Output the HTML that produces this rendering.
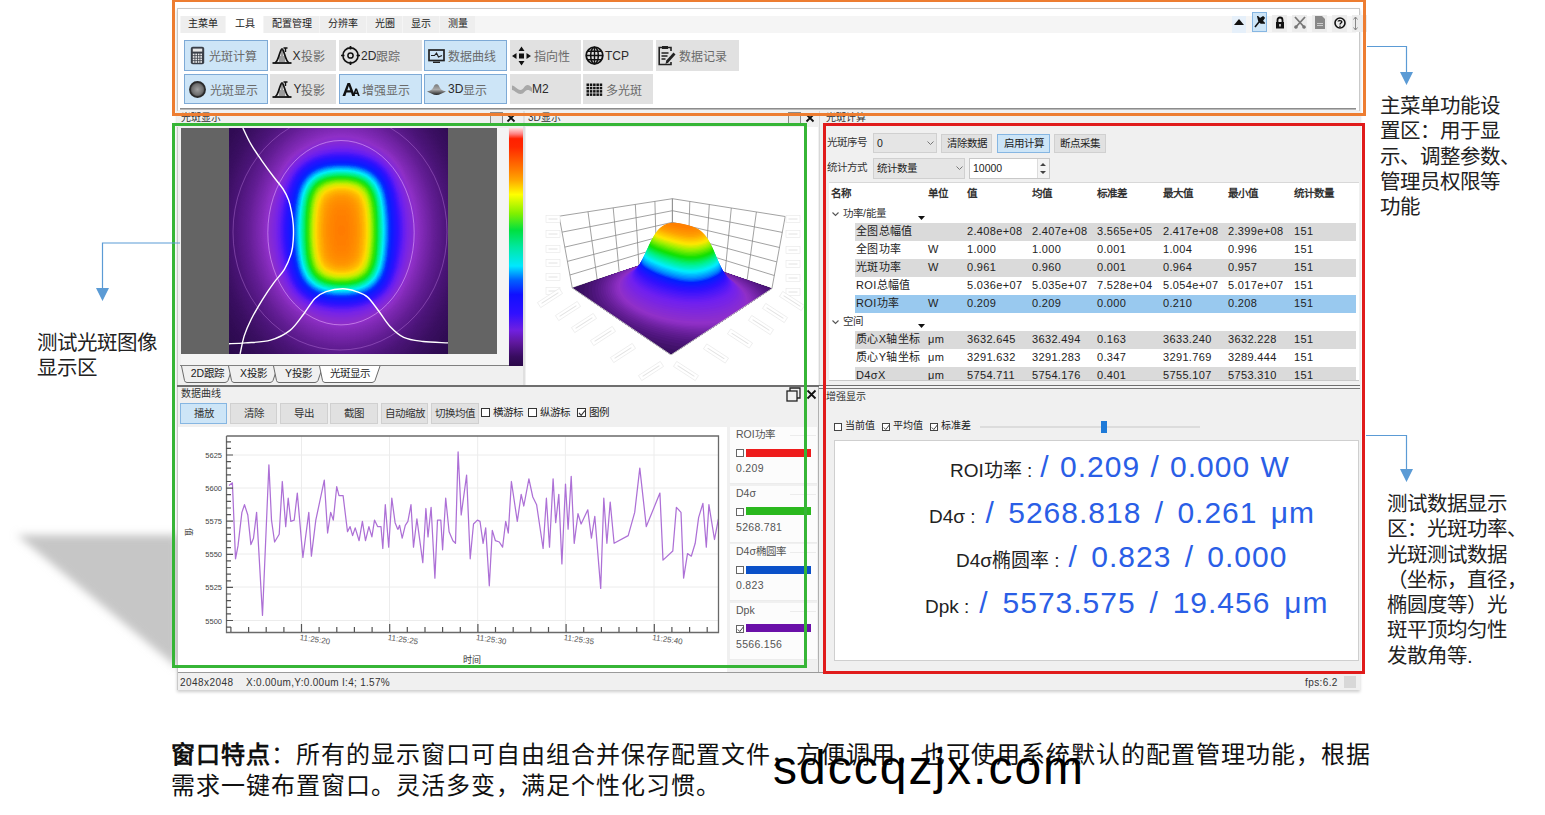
<!DOCTYPE html><html lang="zh-CN"><head><meta charset="utf-8"><style>
*{margin:0;padding:0;box-sizing:border-box}
html,body{width:1545px;height:815px;overflow:hidden;background:#fff}
body{font-family:"Liberation Sans",sans-serif;color:#222;position:relative}
.ab{position:absolute}
.t{position:absolute;white-space:nowrap;line-height:1}
svg text{font-family:"Liberation Sans",sans-serif}
</style></head><body>
<svg class="ab" style="left:0;top:500px" width="180" height="190"><defs><filter id="shb" x="-20" y="-20" width="220" height="230" filterUnits="userSpaceOnUse"><feGaussianBlur stdDeviation="4"/></filter></defs><path d="M17 35 L178 35 L178 168 Z" fill="#c6c6c6" filter="url(#shb)"/></svg>
<div class="ab" style="left:177px;top:8px;width:1183px;height:682px;background:#f0f0f0;border:1px solid #c9c9c9;box-shadow:0 2px 3px rgba(0,0,0,.2)"></div>
<div class="ab" style="left:178px;top:9px;width:1181px;height:101px;background:#fff"></div>
<div class="ab" style="left:180px;top:108px;width:1176px;height:1px;background:#8c8c8c"></div><div class="ab" style="left:180px;top:109px;width:1176px;height:1px;background:#b8b8b8"></div>
<div class="ab" style="left:180px;top:16px;width:1176px;height:17px;background:#f5f5f5"></div>
<div class="ab" style="left:181px;top:16px;width:44px;height:17px;background:#eeeeee;font-size:10px;color:#222;text-align:center;line-height:16px">主菜单</div>
<div class="ab" style="left:226px;top:16px;width:37px;height:17px;background:#ffffff;font-size:10px;color:#222;text-align:center;line-height:16px">工具</div>
<div class="ab" style="left:264px;top:16px;width:55px;height:17px;background:#eeeeee;font-size:10px;color:#222;text-align:center;line-height:16px">配置管理</div>
<div class="ab" style="left:320px;top:16px;width:46px;height:17px;background:#eeeeee;font-size:10px;color:#222;text-align:center;line-height:16px">分辨率</div>
<div class="ab" style="left:367px;top:16px;width:35px;height:17px;background:#eeeeee;font-size:10px;color:#222;text-align:center;line-height:16px">光圈</div>
<div class="ab" style="left:403px;top:16px;width:36px;height:17px;background:#eeeeee;font-size:10px;color:#222;text-align:center;line-height:16px">显示</div>
<div class="ab" style="left:440px;top:16px;width:35px;height:17px;background:#eeeeee;font-size:10px;color:#222;text-align:center;line-height:16px">测量</div>
<div class="ab" style="left:184px;top:40px;width:84px;height:31px;background:#cde5f7;border:1px solid #7eaad6;"></div>
<div class="ab" style="left:190px;top:40px;height:31px;display:flex;align-items:center"><svg width="15" height="19" viewBox="0 0 15 19"><rect x="0.8" y="0.8" width="13.4" height="17.4" rx="2" fill="#3a3f48"/><rect x="2.8" y="2.6" width="9.4" height="3" fill="#e8e8e8"/><rect x="2.8" y="7.6" width="1.7" height="1.7" fill="#e8e8e8"/><rect x="5.3" y="7.6" width="1.7" height="1.7" fill="#e8e8e8"/><rect x="7.8" y="7.6" width="1.7" height="1.7" fill="#e8e8e8"/><rect x="10.3" y="7.6" width="1.7" height="1.7" fill="#e8e8e8"/><rect x="2.8" y="10.1" width="1.7" height="1.7" fill="#e8e8e8"/><rect x="5.3" y="10.1" width="1.7" height="1.7" fill="#e8e8e8"/><rect x="7.8" y="10.1" width="1.7" height="1.7" fill="#e8e8e8"/><rect x="10.3" y="10.1" width="1.7" height="1.7" fill="#e8e8e8"/><rect x="2.8" y="12.6" width="1.7" height="1.7" fill="#e8e8e8"/><rect x="5.3" y="12.6" width="1.7" height="1.7" fill="#e8e8e8"/><rect x="7.8" y="12.6" width="1.7" height="1.7" fill="#e8e8e8"/><rect x="10.3" y="12.6" width="1.7" height="1.7" fill="#e8e8e8"/><rect x="2.8" y="15.1" width="1.7" height="1.7" fill="#e8e8e8"/><rect x="5.3" y="15.1" width="1.7" height="1.7" fill="#e8e8e8"/><rect x="7.8" y="15.1" width="1.7" height="1.7" fill="#e8e8e8"/><rect x="10.3" y="15.1" width="1.7" height="1.7" fill="#e8e8e8"/></svg></div>
<div class="ab" style="left:209px;top:40px;height:31px;display:flex;align-items:center;font-size:12px;color:#6a6a6a;white-space:nowrap">光斑计算</div>
<div class="ab" style="left:270px;top:40px;width:66px;height:31px;background:#e1e1e1;border:1px solid #e1e1e1;"></div>
<div class="ab" style="left:272px;top:40px;height:31px;display:flex;align-items:center"><svg width="20" height="17" viewBox="0 0 20 17"><path d="M0.5 16 H19.5" stroke="#111" stroke-width="1.8"/><path d="M3 16 C7 14 7.5 3 10 2 C12.5 3 13 14 17 16" fill="none" stroke="#111" stroke-width="1.7"/><path d="M10 2.5 L10 16 M8 9 L8 16 M12 9 L12 16" stroke="#333" stroke-width=".8"/><path d="M11.5 1 L15.5 1 M13.5 1 V5" stroke="#111" stroke-width="1.4"/></svg></div>
<div class="ab" style="left:292.5px;top:40px;height:31px;display:flex;align-items:center;font-size:12px;color:#6a6a6a;white-space:nowrap"><span style="color:#2a2a2a">X</span>投影</div>
<div class="ab" style="left:339px;top:40px;width:83px;height:31px;background:#e1e1e1;border:1px solid #e1e1e1;"></div>
<div class="ab" style="left:341px;top:40px;height:31px;display:flex;align-items:center"><svg width="19" height="19" viewBox="0 0 19 19"><circle cx="9.5" cy="9.5" r="7.6" fill="none" stroke="#111" stroke-width="1.6"/><circle cx="9.5" cy="9.5" r="2.6" fill="none" stroke="#111" stroke-width="1.5"/><path d="M9.5 0V3.5M9.5 15.5V19M0 9.5H3.5M15.5 9.5H19" stroke="#111" stroke-width="1.7"/></svg></div>
<div class="ab" style="left:361px;top:40px;height:31px;display:flex;align-items:center;font-size:12px;color:#6a6a6a;white-space:nowrap"><span style="color:#2a2a2a">2D</span>跟踪</div>
<div class="ab" style="left:424px;top:40px;width:83px;height:31px;background:#cde5f7;border:1px solid #7eaad6;"></div>
<div class="ab" style="left:428px;top:40px;height:31px;display:flex;align-items:center"><svg width="17" height="14" viewBox="0 0 17 14"><rect x="1" y="1" width="15" height="10.5" fill="none" stroke="#222" stroke-width="1.7"/><path d="M3 6.5 L6.5 6.5 L8.5 4 L10.5 8 L14 6.5" fill="none" stroke="#222" stroke-width="1.2"/><path d="M5 13.3H12" stroke="#222" stroke-width="1.4"/></svg></div>
<div class="ab" style="left:448px;top:40px;height:31px;display:flex;align-items:center;font-size:12px;color:#6a6a6a;white-space:nowrap">数据曲线</div>
<div class="ab" style="left:510px;top:40px;width:71px;height:31px;background:#e1e1e1;border:1px solid #e1e1e1;"></div>
<div class="ab" style="left:512px;top:40px;height:31px;display:flex;align-items:center"><svg width="19" height="20" viewBox="0 0 19 20"><rect x="7" y="7.5" width="5" height="5" fill="#111"/><path d="M9.5 0.5L12.5 5H6.5Z M9.5 19.5L12.5 15H6.5Z M0 10L4.5 7V13Z M19 10L14.5 7V13Z" fill="#111"/></svg></div>
<div class="ab" style="left:533.5px;top:40px;height:31px;display:flex;align-items:center;font-size:12px;color:#6a6a6a;white-space:nowrap">指向性</div>
<div class="ab" style="left:583px;top:40px;width:70px;height:31px;background:#e1e1e1;border:1px solid #e1e1e1;"></div>
<div class="ab" style="left:585px;top:40px;height:31px;display:flex;align-items:center"><svg width="19" height="19" viewBox="0 0 19 19"><circle cx="9.5" cy="9.5" r="8.3" fill="none" stroke="#111" stroke-width="1.8"/><ellipse cx="9.5" cy="9.5" rx="3.8" ry="8.3" fill="none" stroke="#111" stroke-width="1.5"/><path d="M9.5 1.2V17.8M1.2 9.5H17.8M2.5 5.3H16.5M2.5 13.7H16.5" stroke="#111" stroke-width="1.4"/></svg></div>
<div class="ab" style="left:605px;top:40px;height:31px;display:flex;align-items:center;font-size:12px;color:#6a6a6a;white-space:nowrap"><span style="color:#2a2a2a">TCP</span></div>
<div class="ab" style="left:656px;top:40px;width:83px;height:31px;background:#e1e1e1;border:1px solid #e1e1e1;"></div>
<div class="ab" style="left:658px;top:40px;height:31px;display:flex;align-items:center"><svg width="18" height="21" viewBox="0 0 18 21"><path d="M13 6V2.5H1.2V19.5H13V17" fill="none" stroke="#222" stroke-width="1.6"/><rect x="4" y="1" width="6" height="3" fill="#222"/><path d="M3.5 8H10.5M3.5 11H9.5M3.5 14H7.5" stroke="#222" stroke-width="1.3"/><path d="M7.5 19L8.3 15.5L15.5 7.5L17.5 9.5L10.3 17.5Z" fill="#222"/></svg></div>
<div class="ab" style="left:679px;top:40px;height:31px;display:flex;align-items:center;font-size:12px;color:#6a6a6a;white-space:nowrap">数据记录</div>
<div class="ab" style="left:184px;top:74px;width:84px;height:30px;background:#cde5f7;border:1px solid #7eaad6;"></div>
<div class="ab" style="left:188.5px;top:74px;height:30px;display:flex;align-items:center"><svg width="17" height="17" viewBox="0 0 17 17"><defs><radialGradient id="gsp"><stop offset="0" stop-color="#a0a0a0"/><stop offset=".7" stop-color="#707070"/><stop offset="1" stop-color="#3a3a3a"/></radialGradient></defs><circle cx="8.5" cy="8.5" r="7.6" fill="url(#gsp)" stroke="#2a2a2a" stroke-width="1.7"/></svg></div>
<div class="ab" style="left:210px;top:74px;height:30px;display:flex;align-items:center;font-size:12px;color:#6a6a6a;white-space:nowrap">光斑显示</div>
<div class="ab" style="left:270px;top:74px;width:66px;height:30px;background:#e1e1e1;border:1px solid #e1e1e1;"></div>
<div class="ab" style="left:272px;top:74px;height:30px;display:flex;align-items:center"><svg width="20" height="17" viewBox="0 0 20 17"><path d="M0.5 16 H19.5" stroke="#111" stroke-width="1.8"/><path d="M3 16 C7 14 7.5 3 10 2 C12.5 3 13 14 17 16" fill="none" stroke="#111" stroke-width="1.7"/><path d="M10 2.5 L10 16 M8 9 L8 16 M12 9 L12 16" stroke="#333" stroke-width=".8"/><path d="M11.5 1 L15.5 1 M13.5 1 V5" stroke="#111" stroke-width="1.4"/></svg></div>
<div class="ab" style="left:293.4px;top:74px;height:30px;display:flex;align-items:center;font-size:12px;color:#6a6a6a;white-space:nowrap"><span style="color:#2a2a2a">Y</span>投影</div>
<div class="ab" style="left:339px;top:74px;width:83px;height:30px;background:#cde5f7;border:1px solid #7eaad6;"></div>
<div class="ab" style="left:342px;top:74px;height:30px;display:flex;align-items:center"><svg width="18" height="15" viewBox="0 0 18 15"><path d="M0.5 14L5.5 1H8L13 14H10.2L9 10.5H4.5L3.3 14Z M5.3 8.3H8.2L6.75 4Z" fill="#111"/><path d="M10.5 14L13.3 6.5H15L17.8 14H16L15.3 12H13L12.3 14Z M13.5 10.5H14.8L14.15 8.5Z" fill="#111"/></svg></div>
<div class="ab" style="left:362.4px;top:74px;height:30px;display:flex;align-items:center;font-size:12px;color:#6a6a6a;white-space:nowrap">增强显示</div>
<div class="ab" style="left:424px;top:74px;width:83px;height:30px;background:#cde5f7;border:1px solid #7eaad6;"></div>
<div class="ab" style="left:427px;top:74px;height:30px;display:flex;align-items:center"><svg width="19" height="13" viewBox="0 0 19 13"><defs><linearGradient id="g3d" x1="0" y1="0" x2="0" y2="1"><stop offset="0" stop-color="#777"/><stop offset=".5" stop-color="#aaa"/><stop offset="1" stop-color="#222"/></linearGradient></defs><path d="M0 8.5 C4 7.5 5.5 6.5 7 3 C8 0.5 11 0.5 12 3 C13.5 6.5 15 7.5 19 8.5 C15 10 13 12 9.5 12 C6 12 4 10 0 8.5Z" fill="url(#g3d)"/></svg></div>
<div class="ab" style="left:448px;top:74px;height:30px;display:flex;align-items:center;font-size:12px;color:#6a6a6a;white-space:nowrap"><span style="color:#2a2a2a">3D</span>显示</div>
<div class="ab" style="left:510px;top:74px;width:71px;height:30px;background:#e1e1e1;border:1px solid #e1e1e1;"></div>
<div class="ab" style="left:511.5px;top:74px;height:30px;display:flex;align-items:center"><svg width="20" height="11" viewBox="0 0 20 11"><path d="M0 1.5 C3 1.5 5 6 8.5 6 C11.5 6 12.5 1 15.5 1 C17.5 1 19 2.5 20 4 L20 8 C18 6.5 17 6 15.5 6 C13 6 12 10 8.5 10 C5 10 3 6.5 0 6Z" fill="#a8a8a8"/></svg></div>
<div class="ab" style="left:532px;top:74px;height:30px;display:flex;align-items:center;font-size:12px;color:#6a6a6a;white-space:nowrap"><span style="color:#2a2a2a">M2</span></div>
<div class="ab" style="left:583px;top:74px;width:70px;height:30px;background:#e1e1e1;border:1px solid #e1e1e1;"></div>
<div class="ab" style="left:586px;top:74px;height:30px;display:flex;align-items:center"><svg width="17" height="13" viewBox="0 0 17 13"><rect x="0.5" y="0.5" width="2.5" height="2.5" fill="#111"/><rect x="3.8" y="0.5" width="2.5" height="2.5" fill="#111"/><rect x="7.1" y="0.5" width="2.5" height="2.5" fill="#111"/><rect x="10.4" y="0.5" width="2.5" height="2.5" fill="#111"/><rect x="13.7" y="0.5" width="2.5" height="2.5" fill="#111"/><rect x="0.5" y="3.8" width="2.5" height="2.5" fill="#111"/><rect x="3.8" y="3.8" width="2.5" height="2.5" fill="#111"/><rect x="7.1" y="3.8" width="2.5" height="2.5" fill="#111"/><rect x="10.4" y="3.8" width="2.5" height="2.5" fill="#111"/><rect x="13.7" y="3.8" width="2.5" height="2.5" fill="#111"/><rect x="0.5" y="7.1" width="2.5" height="2.5" fill="#111"/><rect x="3.8" y="7.1" width="2.5" height="2.5" fill="#111"/><rect x="7.1" y="7.1" width="2.5" height="2.5" fill="#111"/><rect x="10.4" y="7.1" width="2.5" height="2.5" fill="#111"/><rect x="13.7" y="7.1" width="2.5" height="2.5" fill="#111"/><rect x="0.5" y="10.4" width="2.5" height="2.5" fill="#111"/><rect x="3.8" y="10.4" width="2.5" height="2.5" fill="#111"/><rect x="7.1" y="10.4" width="2.5" height="2.5" fill="#111"/><rect x="10.4" y="10.4" width="2.5" height="2.5" fill="#111"/><rect x="13.7" y="10.4" width="2.5" height="2.5" fill="#111"/></svg></div>
<div class="ab" style="left:606px;top:74px;height:30px;display:flex;align-items:center;font-size:12px;color:#6a6a6a;white-space:nowrap">多光斑</div>
<div class="ab" style="left:1232px;top:16px;width:14px;height:17px;background:#e6f0fa"></div>
<svg class="ab" style="left:1234px;top:19px" width="10" height="6"><path d="M0 6L5 0L10 6Z" fill="#111"/></svg>
<div class="ab" style="left:1252px;top:12px;width:15px;height:20px;background:#cde5f7;border:1px solid #86b6e2"></div>
<svg class="ab" style="left:1254px;top:16px" width="11" height="12" viewBox="0 0 11 12"><path d="M4 1L10 7L7 7L5 5Z M6 3L9 1L10 2L8 5Z M5 6L1 11" stroke="#111" stroke-width="1.6" fill="#111"/></svg>
<div class="ab" style="left:1272px;top:15px;width:15px;height:17px;background:#ececec"></div>
<div class="ab" style="left:1292px;top:15px;width:15px;height:17px;background:#ececec"></div>
<div class="ab" style="left:1312px;top:15px;width:15px;height:17px;background:#ececec"></div>
<div class="ab" style="left:1332px;top:15px;width:15px;height:17px;background:#ececec"></div>
<div class="ab" style="left:1352px;top:15px;width:15px;height:17px;background:#ececec"></div>
<svg class="ab" style="left:1275px;top:16px" width="10" height="13" viewBox="0 0 10 13"><path d="M2.5 6V4A2.5 2.5 0 0 1 7.5 4V6" fill="none" stroke="#111" stroke-width="1.8"/><rect x="1" y="6" width="8" height="6.5" fill="#111"/><rect x="4.3" y="8" width="1.4" height="2.5" fill="#fff"/></svg>
<svg class="ab" style="left:1294px;top:16px" width="12" height="13" viewBox="0 0 12 13"><path d="M1 1L11 12M11 1L1 12" stroke="#777" stroke-width="1.8"/><circle cx="2" cy="11" r="1.8" fill="#777"/><circle cx="10" cy="11" r="1.8" fill="#777"/></svg>
<svg class="ab" style="left:1315px;top:16px" width="10" height="13" viewBox="0 0 10 13"><path d="M0 0H7L10 3V13H0Z" fill="#888"/><rect x="2" y="7" width="6" height="1" fill="#ccc"/><rect x="2" y="9" width="6" height="1" fill="#ccc"/></svg>
<svg class="ab" style="left:1334px;top:17px" width="12" height="12" viewBox="0 0 12 12"><circle cx="6" cy="6" r="5" fill="none" stroke="#111" stroke-width="1.6"/><path d="M4.2 4.6C4.2 3.2 7.8 3.2 7.8 4.8C7.8 6 6 6 6 7.5" fill="none" stroke="#111" stroke-width="1.4"/><circle cx="6" cy="9.2" r=".8" fill="#111"/></svg>
<svg class="ab" style="left:1353px;top:17px" width="5" height="13"><path d="M2.5 0V13M0.5 2.5L2.5 0L4.5 2.5M0.5 10.5L2.5 13L4.5 10.5" fill="none" stroke="#888" stroke-width="1"/></svg>
<div class="ab" style="left:177px;top:111px;width:346px;height:16px;background:#f0f0f0"></div>
<div class="t" style="left:181px;top:113px;font-size:10px;color:#333">光斑显示</div>
<div class="ab" style="left:490px;top:112px;width:13px;height:12px;border:1px solid #8a8a8a;background:#e8e8e8"></div>
<svg class="ab" style="left:506px;top:113px" width="10" height="10"><path d="M1.5 1.5L8.5 8.5M8.5 1.5L1.5 8.5" stroke="#111" stroke-width="1.8"/></svg>
<div class="ab" style="left:523px;top:111px;width:2px;height:274px;background:#e0e0e0"></div>
<div class="ab" style="left:181px;top:128px;width:316px;height:226px;background:#646464"></div>
<div class="ab" style="left:497px;top:128px;width:11px;height:227px;background:#f4f4f4"></div>
<div class="ab" style="left:181px;top:354px;width:327px;height:11px;background:#f4f4f4"></div>
<div class="ab" style="left:180px;top:365px;width:330px;height:1px;background:#808080"></div>
<svg class="ab" style="left:181px;top:366px" width="53" height="17"><path d="M0.5 0 L3.5 14.5 Q4 16.5 6 16.5 L44 16.5 Q46 16.5 47 14.5 L52 0" fill="#f0f0f0" stroke="#6a6a6a" stroke-width="1"/></svg>
<div class="t" style="left:181px;top:368px;width:53px;text-align:center;font-size:10.5px;color:#222">2D跟踪</div>
<svg class="ab" style="left:228px;top:366px" width="51" height="17"><path d="M0.5 0 L3.5 14.5 Q4 16.5 6 16.5 L42 16.5 Q44 16.5 45 14.5 L50 0" fill="#f0f0f0" stroke="#6a6a6a" stroke-width="1"/></svg>
<div class="t" style="left:228px;top:368px;width:51px;text-align:center;font-size:10.5px;color:#222">X投影</div>
<svg class="ab" style="left:273px;top:366px" width="51" height="17"><path d="M0.5 0 L3.5 14.5 Q4 16.5 6 16.5 L42 16.5 Q44 16.5 45 14.5 L50 0" fill="#f0f0f0" stroke="#6a6a6a" stroke-width="1"/></svg>
<div class="t" style="left:273px;top:368px;width:51px;text-align:center;font-size:10.5px;color:#222">Y投影</div>
<svg class="ab" style="left:319px;top:366px" width="62" height="17"><path d="M0.5 0 L3.5 14.5 Q4 16.5 6 16.5 L53 16.5 Q55 16.5 56 14.5 L61 0" fill="#ffffff" stroke="#6a6a6a" stroke-width="1"/></svg>
<div class="t" style="left:319px;top:368px;width:62px;text-align:center;font-size:10.5px;color:#222">光斑显示</div>
<svg class="ab" style="left:229px;top:128px" width="219" height="226" viewBox="0 0 219 226">
<defs>
<filter id="cm" x="0" y="0" width="219" height="226" filterUnits="userSpaceOnUse" color-interpolation-filters="sRGB"><feComponentTransfer><feFuncR type="table" tableValues="0.145 0.204 0.263 0.322 0.382 0.442 0.502 0.562 0.518 0.469 0.387 0.256 0.160 0.101 0.042 0.000 0.000 0.000 0.000 0.000 0.006 0.045 0.227 0.522 0.814 1.000 1.000 1.000 1.000 1.000 1.000 1.000 1.000"/><feFuncG type="table" tableValues="0.031 0.051 0.071 0.090 0.114 0.138 0.163 0.187 0.165 0.140 0.112 0.080 0.072 0.092 0.111 0.199 0.460 0.716 0.941 0.941 0.935 0.896 0.897 0.929 0.925 0.857 0.710 0.590 0.506 0.416 0.298 0.180 0.063"/><feFuncB type="table" tableValues="0.271 0.349 0.427 0.506 0.576 0.645 0.713 0.782 0.843 0.904 0.953 0.984 1.000 1.000 1.000 1.000 1.000 1.000 0.979 0.720 0.452 0.138 0.000 0.000 0.000 0.000 0.000 0.000 0.000 0.000 0.000 0.000 0.000"/></feComponentTransfer></filter>
<filter id="bl" x="-100" y="-100" width="419" height="426" filterUnits="userSpaceOnUse" color-interpolation-filters="sRGB"><feGaussianBlur stdDeviation="14.2"/></filter>
<radialGradient id="halo" cx="112.5" cy="102.5" r="159.0" gradientUnits="userSpaceOnUse" gradientTransform="translate(112.5 102.5) scale(1 1.25) translate(-112.5 -102.5)"><stop offset="0.000" stop-color="#fff" stop-opacity="0.6000"/><stop offset="0.083" stop-color="#fff" stop-opacity="0.5815"/><stop offset="0.167" stop-color="#fff" stop-opacity="0.5295"/><stop offset="0.250" stop-color="#fff" stop-opacity="0.4529"/><stop offset="0.333" stop-color="#fff" stop-opacity="0.3639"/><stop offset="0.417" stop-color="#fff" stop-opacity="0.2747"/><stop offset="0.500" stop-color="#fff" stop-opacity="0.1948"/><stop offset="0.583" stop-color="#fff" stop-opacity="0.1298"/><stop offset="0.667" stop-color="#fff" stop-opacity="0.0812"/><stop offset="0.750" stop-color="#fff" stop-opacity="0.0477"/><stop offset="0.833" stop-color="#fff" stop-opacity="0.0264"/><stop offset="0.917" stop-color="#fff" stop-opacity="0.0137"/><stop offset="1.000" stop-color="#fff" stop-opacity="0.0067"/></radialGradient>
</defs>
<g filter="url(#cm)">
<rect width="219" height="226" fill="#000"/>
<rect width="219" height="226" fill="url(#halo)"/>
<rect x="77.5" y="46.5" width="70.0" height="112.0" fill="#fff" fill-opacity="0.71" filter="url(#bl)"/>
</g>
<ellipse cx="112" cy="104.7" rx="73.2" ry="92.2" fill="none" stroke="#e8b0ff" stroke-opacity=".55" stroke-width="1"/>
<ellipse cx="111" cy="104" rx="107" ry="118" fill="none" stroke="#d090f0" stroke-opacity=".35" stroke-width="1"/>
<path d="M13.9 0.0 C15.2 2.8 18.9 11.1 22.2 16.6 C25.4 22.2 29.6 28.0 33.3 33.3 C37.0 38.6 40.9 43.9 44.4 48.5 C47.8 53.1 51.5 57.1 54.1 61.0 C56.6 64.9 58.2 68.4 59.6 72.1 C61.0 75.8 61.6 79.0 62.4 83.2 C63.2 87.3 64.0 92.4 64.3 97.0 C64.6 101.7 64.6 106.3 64.3 110.9 C64.0 115.5 63.9 119.7 62.4 124.8 C60.9 129.8 58.5 136.3 55.4 141.4 C52.4 146.5 48.1 150.2 44.4 155.3 C40.7 160.3 37.0 165.9 33.3 171.9 C29.6 177.9 25.2 185.3 22.2 191.3 C19.2 197.3 17.1 202.2 15.2 207.9 C13.4 213.7 11.8 222.9 11.1 225.9" fill="none" stroke="#fff" stroke-width="1.4" stroke-linejoin="round"/>
<path d="M0.0 215.7 C2.8 215.6 9.7 215.5 16.6 214.9 C23.6 214.3 34.2 214.2 41.6 212.1 C49.0 210.0 55.4 206.8 61.0 202.4 C66.5 198.0 70.7 191.1 74.9 185.7 C79.0 180.4 82.2 174.2 85.9 170.5 C89.6 166.8 92.4 165.2 97.0 163.6 C101.7 162.0 108.6 160.8 113.7 160.8 C118.8 160.8 123.4 162.2 127.5 163.6 C131.7 165.0 134.9 165.9 138.6 169.1 C142.3 172.4 146.0 178.1 149.7 183.0 C153.4 187.8 156.6 193.8 160.8 198.2 C165.0 202.6 169.1 206.8 174.7 209.3 C180.2 211.9 186.7 212.5 194.1 213.5 C201.5 214.4 214.9 214.6 219.0 214.9" fill="none" stroke="#fff" stroke-width="1.4" stroke-linejoin="round"/>
</svg>
<svg class="ab" style="left:509px;top:128px" width="14" height="238"><defs><linearGradient id="cb" x1="0" y1="0" x2="0" y2="1"><stop offset="0" stop-color="#ffe0e0"/><stop offset="0.025" stop-color="#ff8080"/><stop offset="0.045" stop-color="#ff2000"/><stop offset="0.08" stop-color="#ff2800"/><stop offset="0.18" stop-color="#ff8000"/><stop offset="0.22" stop-color="#ffa800"/><stop offset="0.28" stop-color="#ffff00"/><stop offset="0.36" stop-color="#80f000"/><stop offset="0.43" stop-color="#00e040"/><stop offset="0.5" stop-color="#00e8a0"/><stop offset="0.58" stop-color="#00e8ff"/><stop offset="0.64" stop-color="#0060ff"/><stop offset="0.7" stop-color="#1010ff"/><stop offset="0.78" stop-color="#3010ff"/><stop offset="0.85" stop-color="#7020e0"/><stop offset="0.9" stop-color="#6018a0"/><stop offset="0.96" stop-color="#380c60"/><stop offset="1" stop-color="#2a0848"/></linearGradient></defs><rect width="14" height="238" fill="url(#cb)"/></svg>
<div class="ab" style="left:525px;top:111px;width:294px;height:16px;background:#f0f0f0"></div>
<div class="t" style="left:528px;top:113px;font-size:10px;color:#333">3D显示</div>
<div class="ab" style="left:788px;top:112px;width:13px;height:12px;border:1px solid #8a8a8a;background:#e8e8e8"></div>
<svg class="ab" style="left:805px;top:113px" width="10" height="10"><path d="M1.5 1.5L8.5 8.5M8.5 1.5L1.5 8.5" stroke="#111" stroke-width="1.8"/></svg>
<div class="ab" style="left:526px;top:127px;width:292px;height:258px;background:#fff"></div>
<svg class="ab" style="left:526px;top:127px" width="292" height="258" viewBox="526 127 292 258">
<path d="M572.3 288.0L672.4 254.5L771.9 288.6M569.9 275.0L672.4 244.1L774.3 275.5M567.4 261.4L672.4 233.4L776.8 261.9M564.8 247.1L672.4 222.3L779.5 247.5M562.1 232.1L672.4 210.7L782.3 232.4M559.1 216.2L672.4 198.7L785.2 216.5M572.3 288.0L559.1 216.2M771.9 288.6L785.2 216.5M597.2 279.7L588.0 211.8M747.1 280.1L756.4 212.0M619.2 272.3L613.2 207.9M725.1 272.5L731.3 208.0M638.9 265.7L635.3 204.5M705.6 265.9L709.3 204.5M656.5 259.8L654.9 201.4M688.1 259.9L689.8 201.5M672.4 254.5L672.4 198.7M672.4 254.5L672.4 198.7" fill="none" stroke="#8a8a8a" stroke-width="0.8"/>
<path d="M671.0 354.9L572.3 288.0L672.4 254.5L771.9 288.6Z" fill="#320c57"/>
<path d="M672.4 254.5L669.2 255.5L666.0 256.6L662.6 257.7L659.3 258.9L655.8 260.0L652.3 261.2L648.7 262.4L645.0 263.7L641.2 264.9L637.3 266.2L633.4 267.5L629.3 268.9L625.2 270.3L621.0 271.7L616.6 273.2L612.2 274.6L607.6 276.2L603.0 277.7L598.2 279.3L593.3 281.0L588.3 282.7L583.1 284.4L577.8 286.2L573.5 287.9L574.9 289.7L577.7 291.7L580.7 293.7L583.7 295.7L586.8 297.8L590.1 300.0L593.4 302.3L596.8 304.6L600.3 307.0L604.0 309.5L607.7 312.0L611.6 314.6L615.6 317.3L619.7 320.2L624.0 323.1L628.4 326.1L633.0 329.2L637.8 332.4L642.7 335.8L647.8 339.2L653.2 342.8L658.7 346.6L664.4 350.5L670.4 354.5L676.5 351.3L682.4 347.4L688.1 343.7L693.5 340.1L698.8 336.6L703.9 333.3L708.8 330.1L713.5 327.0L718.1 324.0L722.5 321.1L726.7 318.3L730.9 315.6L734.8 312.9L738.7 310.4L742.5 307.9L746.1 305.5L749.6 303.2L753.0 301.0L756.4 298.8L759.6 296.7L762.7 294.6L765.8 292.6L768.7 290.6L771.6 288.7L767.0 286.9L761.7 285.1L756.5 283.3L751.5 281.6L746.6 279.9L741.8 278.3L737.1 276.7L732.6 275.1L728.2 273.6L723.8 272.1L719.6 270.7L715.5 269.2L711.5 267.9L707.5 266.5L703.7 265.2L699.9 263.9L696.3 262.7L692.7 261.4L689.2 260.2L685.7 259.0L682.4 257.9L679.1 256.8L675.8 255.7L672.7 254.6Z" fill="#360e5c"/>
<path d="M672.4 254.5L669.2 255.5L666.0 256.6L662.6 257.7L659.3 258.9L655.8 260.0L652.3 261.2L648.7 262.4L645.0 263.7L641.2 264.9L637.3 266.2L633.4 267.5L629.3 268.9L625.2 270.3L621.0 271.7L616.6 273.2L612.2 274.6L607.6 276.2L603.0 277.7L598.2 279.3L593.3 281.0L588.3 282.7L583.1 284.4L580.1 286.1L579.6 287.9L579.3 289.9L579.2 291.7L580.7 293.7L583.7 295.7L586.8 297.8L590.1 300.0L593.4 302.3L596.8 304.6L600.3 307.0L604.0 309.5L607.7 312.0L611.6 314.6L615.6 317.3L619.7 320.2L624.0 323.1L628.4 326.1L633.0 329.2L637.8 332.4L642.7 335.8L647.8 339.2L653.2 342.8L658.7 346.6L664.4 350.5L669.8 353.3L675.9 351.7L681.8 347.8L687.5 344.1L693.0 340.5L698.3 337.0L703.4 333.6L708.3 330.4L713.0 327.3L717.6 324.3L722.0 321.4L726.3 318.6L730.4 315.8L734.5 313.2L738.3 310.6L742.1 308.2L745.7 305.8L749.3 303.4L752.7 301.2L756.0 299.0L759.3 296.9L762.4 294.8L765.5 292.8L768.4 290.8L771.3 288.9L767.5 287.1L762.2 285.2L757.0 283.5L752.0 281.7L747.1 280.1L742.3 278.4L737.6 276.8L733.1 275.3L728.6 273.7L724.3 272.3L720.0 270.8L715.9 269.4L711.9 268.0L707.9 266.7L704.1 265.3L700.3 264.0L696.6 262.8L693.0 261.6L689.5 260.3L686.1 259.2L682.7 258.0L679.4 256.9L676.2 255.8L673.0 254.7Z" fill="#3c1064"/>
<path d="M670.5 255.1L667.6 256.1L664.3 257.2L661.0 258.3L657.5 259.5L654.0 260.6L650.5 261.8L646.8 263.0L643.1 264.3L639.3 265.6L635.4 266.9L631.4 268.2L627.3 269.6L623.1 271.0L618.8 272.4L614.4 273.9L609.9 275.4L605.3 277.0L600.6 278.5L595.8 280.2L590.8 281.8L585.7 283.5L585.1 285.2L584.7 286.9L584.4 288.8L584.2 290.9L584.2 292.7L584.4 294.8L585.3 296.8L588.4 298.9L591.7 301.1L595.1 303.4L598.5 305.8L602.1 308.2L605.8 310.7L609.6 313.3L613.6 316.0L617.6 318.7L621.9 321.6L626.2 324.6L630.7 327.6L635.4 330.8L640.2 334.1L645.3 337.5L650.5 341.0L655.9 344.7L661.2 346.7L667.0 348.1L673.4 349.4L678.9 349.7L684.7 345.9L690.3 342.2L695.7 338.7L700.9 335.3L705.9 332.0L710.7 328.8L715.3 325.8L719.8 322.8L724.2 319.9L728.4 317.2L732.5 314.5L736.4 311.9L740.2 309.4L743.9 307.0L747.5 304.6L751.0 302.3L754.4 300.1L757.7 297.9L760.9 295.8L764.0 293.8L767.0 291.8L769.9 289.9L770.3 288.0L764.9 286.1L759.6 284.4L754.5 282.6L749.5 280.9L744.7 279.2L739.9 277.6L735.3 276.0L730.8 274.5L726.4 273.0L722.1 271.5L718.0 270.1L713.9 268.7L709.9 267.3L706.0 266.0L702.2 264.7L698.5 263.4L694.8 262.2L691.3 260.9L687.8 259.8L684.4 258.6L681.0 257.4L677.8 256.3L674.9 255.3L671.6 255.2Z" fill="#42126b"/>
<path d="M667.6 256.1L664.6 257.1L661.3 258.2L657.9 259.3L654.4 260.5L650.8 261.7L647.2 262.9L643.5 264.2L639.7 265.4L635.8 266.7L631.8 268.1L627.7 269.5L623.5 270.9L619.2 272.3L614.9 273.8L610.4 275.3L605.8 276.8L601.1 278.4L596.2 280.0L591.3 281.7L589.8 283.2L589.2 285.1L588.7 286.9L588.4 288.8L588.3 290.6L588.4 292.6L588.7 294.5L589.2 296.6L589.9 298.7L591.4 300.9L594.7 303.2L598.2 305.5L601.8 308.0L605.4 310.5L609.2 313.0L613.2 315.7L617.2 318.5L621.4 321.3L625.8 324.3L630.3 327.3L634.9 330.5L639.7 333.7L644.7 337.1L649.9 339.8L655.5 341.5L661.1 342.9L666.9 344.3L672.4 345.4L678.5 346.5L684.1 346.3L689.7 342.6L695.1 339.1L700.3 335.6L705.4 332.3L710.2 329.1L714.9 326.1L719.4 323.1L723.8 320.2L728.0 317.5L732.1 314.8L736.0 312.2L739.9 309.6L743.6 307.2L747.2 304.8L750.7 302.5L754.0 300.3L757.3 298.1L760.5 296.0L763.6 294.0L766.7 292.0L769.6 290.1L771.3 288.4L765.9 286.5L760.6 284.7L755.5 282.9L750.5 281.2L745.6 279.6L740.9 277.9L736.2 276.3L731.7 274.8L727.3 273.3L723.0 271.8L718.8 270.4L714.7 269.0L710.7 267.6L706.8 266.3L702.9 264.9L699.2 263.7L695.5 262.4L692.0 261.2L688.5 260.0L685.1 258.8L681.7 257.7L678.7 256.7L675.5 256.4L672.2 256.2L668.9 256.1Z" fill="#481473"/>
<path d="M665.5 257.0L662.3 257.9L658.9 259.0L655.4 260.2L651.9 261.3L648.3 262.6L644.6 263.8L640.8 265.1L636.9 266.4L633.0 267.7L628.9 269.0L624.8 270.4L620.5 271.9L616.2 273.3L611.7 274.8L607.2 276.3L602.5 277.9L597.7 279.5L594.2 281.1L593.4 282.8L592.8 284.4L592.3 286.3L592.0 288.1L591.9 290.0L592.0 292.1L592.3 294.0L592.8 296.0L593.5 298.2L594.5 300.4L595.8 302.7L597.2 304.9L600.7 307.2L604.3 309.7L608.1 312.3L612.0 314.9L616.0 317.6L620.1 320.4L624.4 323.4L628.9 326.4L633.5 329.5L637.8 332.4L643.0 334.4L648.6 336.2L653.7 337.8L659.3 339.3L664.9 340.7L670.9 342.0L676.5 343.0L682.7 343.9L688.1 343.7L693.5 340.1L698.8 336.6L703.9 333.3L708.8 330.1L713.5 327.0L718.1 324.0L722.5 321.1L726.7 318.3L730.9 315.6L734.8 312.9L738.7 310.4L742.5 307.9L746.1 305.5L749.6 303.2L753.0 301.0L756.4 298.8L759.6 296.7L762.7 294.6L765.8 292.6L768.7 290.6L768.3 288.7L766.1 286.9L762.2 285.2L757.0 283.5L752.0 281.7L747.1 280.1L742.3 278.4L737.6 276.8L733.1 275.3L728.6 273.7L724.3 272.3L720.0 270.8L715.9 269.4L711.9 268.0L707.9 266.7L704.1 265.3L700.3 264.0L696.6 262.8L693.0 261.6L689.5 260.3L686.1 259.2L682.7 258.0L679.7 257.7L676.5 257.4L673.2 257.2L669.8 257.1L666.8 257.0Z" fill="#4d157b"/>
<path d="M663.0 257.8L659.9 258.6L656.5 259.8L653.0 261.0L649.4 262.2L645.7 263.4L641.9 264.7L638.1 266.0L634.2 267.3L630.2 268.6L626.0 270.0L621.8 271.4L617.5 272.9L613.1 274.3L608.6 275.9L603.9 277.4L599.2 279.0L597.4 280.6L596.7 282.3L596.0 284.0L595.5 285.7L595.2 287.6L595.1 289.4L595.2 291.5L595.5 293.3L596.0 295.4L596.7 297.5L597.7 299.8L598.9 301.9L600.5 304.2L602.3 306.6L604.7 309.1L607.4 311.7L610.8 314.1L614.8 316.8L618.9 319.6L623.1 322.5L627.5 325.0L632.3 327.2L637.1 329.3L642.2 331.3L647.5 333.1L652.5 334.7L658.0 336.3L663.5 337.6L669.1 338.9L675.2 340.0L680.7 340.9L686.5 341.7L691.9 341.2L697.2 337.7L702.4 334.3L707.3 331.0L712.1 327.9L716.7 324.9L721.2 321.9L725.5 319.1L729.6 316.4L733.7 313.7L737.6 311.1L741.3 308.7L745.0 306.2L748.6 303.9L752.0 301.6L755.4 299.4L758.6 297.3L761.8 295.2L764.9 293.2L767.8 291.2L765.8 289.3L763.6 287.4L761.4 285.7L758.6 284.0L753.5 282.3L748.5 280.6L743.7 278.9L739.0 277.3L734.4 275.7L729.9 274.2L725.6 272.7L721.3 271.2L717.1 269.8L713.1 268.4L709.1 267.1L705.2 265.7L701.4 264.4L697.7 263.2L694.1 261.9L690.6 260.7L687.1 259.5L684.0 259.0L680.6 258.6L677.2 258.3L674.1 258.1L671.0 258.0L667.5 257.9L664.3 257.8Z" fill="#531782"/>
<path d="M660.5 258.7L657.2 259.6L653.7 260.7L650.1 261.9L646.4 263.2L642.7 264.4L638.9 265.7L635.0 267.0L631.0 268.4L626.9 269.7L622.7 271.1L618.4 272.6L614.0 274.0L609.5 275.6L604.9 277.1L601.5 278.6L600.5 280.2L599.6 281.9L598.9 283.7L598.4 285.4L598.1 287.2L598.0 289.1L598.1 291.1L598.4 292.9L598.9 295.0L599.6 297.1L600.7 299.4L601.9 301.4L603.6 303.8L605.4 306.1L607.9 308.6L610.6 311.2L613.7 313.7L617.6 316.4L621.9 319.2L626.1 321.6L630.7 323.9L635.7 326.2L640.5 328.1L645.6 330.0L651.0 331.8L656.1 333.3L661.4 334.7L667.0 336.0L672.9 337.2L678.3 338.2L683.8 339.0L689.7 339.6L695.1 339.1L700.3 335.6L705.4 332.3L710.2 329.1L714.9 326.1L719.4 323.1L723.8 320.2L728.0 317.5L732.1 314.8L736.0 312.2L739.9 309.6L743.6 307.2L747.2 304.8L750.7 302.5L754.0 300.3L757.3 298.1L760.5 296.0L763.6 294.0L765.7 292.1L763.7 290.1L761.6 288.2L759.5 286.4L757.2 284.6L754.8 282.9L750.5 281.2L745.6 279.6L740.9 277.9L736.2 276.3L731.7 274.8L727.3 273.3L723.0 271.8L718.8 270.4L714.7 269.0L710.7 267.6L706.8 266.3L702.9 264.9L699.2 263.7L695.5 262.4L692.0 261.2L688.8 260.3L685.4 259.9L681.9 259.5L678.6 259.2L675.3 259.0L672.1 258.8L668.9 258.7L665.8 258.7L662.5 258.6Z" fill="#591a89"/>
<path d="M658.1 259.5L654.7 260.4L651.2 261.6L647.6 262.8L643.8 264.0L640.0 265.3L636.2 266.6L632.2 268.0L628.1 269.3L623.9 270.7L619.7 272.1L615.3 273.6L610.8 275.1L606.3 276.6L604.4 278.1L603.2 279.8L602.3 281.4L601.6 283.1L601.1 284.9L600.7 286.8L600.6 288.6L600.7 290.5L601.0 292.4L601.5 294.4L602.2 296.4L603.3 298.7L604.5 300.8L606.2 303.1L608.1 305.4L610.5 307.9L613.3 310.4L616.4 312.9L620.3 315.6L624.7 318.3L629.0 320.7L633.7 323.0L638.5 325.1L643.6 327.1L648.6 328.9L653.6 330.4L658.9 331.9L664.3 333.3L669.7 334.5L675.7 335.6L681.1 336.4L686.7 337.1L692.6 337.7L697.8 337.3L702.9 334.0L707.8 330.7L712.6 327.6L717.2 324.6L721.6 321.7L725.9 318.8L730.0 316.1L734.1 313.5L738.0 310.9L741.7 308.4L745.4 306.0L748.9 303.7L752.4 301.4L755.7 299.2L759.0 297.1L762.1 295.0L764.0 293.2L762.1 291.1L760.1 289.1L758.0 287.3L755.9 285.6L753.4 283.7L750.8 282.0L748.0 280.4L743.2 278.7L738.5 277.1L734.0 275.6L729.5 274.0L725.1 272.5L720.9 271.1L716.7 269.7L712.7 268.3L708.7 266.9L704.8 265.6L701.1 264.3L697.4 263.0L693.8 261.8L690.4 261.3L687.0 260.8L683.9 260.5L680.3 260.1L676.9 259.8L673.7 259.6L670.6 259.5L667.2 259.4L663.9 259.4L660.7 259.4Z" fill="#5f1c90"/>
<path d="M655.6 260.3L652.3 261.2L648.7 262.4L645.0 263.7L641.2 264.9L637.3 266.2L633.4 267.5L629.3 268.9L625.2 270.3L621.0 271.7L616.6 273.2L612.2 274.6L608.3 276.2L607.0 277.7L605.9 279.3L604.9 280.9L604.1 282.7L603.6 284.3L603.2 286.2L603.0 288.1L603.1 289.9L603.4 291.8L603.8 293.8L604.6 295.8L605.6 298.0L606.9 300.2L608.6 302.5L610.5 304.7L613.0 307.3L615.6 309.6L619.0 312.2L622.9 314.9L627.3 317.5L631.7 319.9L636.4 322.1L641.2 324.1L646.4 326.1L651.1 327.7L656.6 329.3L661.8 330.7L667.2 332.0L672.8 333.1L678.2 334.0L683.7 334.8L689.4 335.4L695.2 335.9L700.3 335.6L705.4 332.3L710.2 329.1L714.9 326.1L719.4 323.1L723.8 320.2L728.0 317.5L732.1 314.8L736.0 312.2L739.9 309.6L743.6 307.2L747.2 304.8L750.7 302.5L754.0 300.3L757.3 298.1L760.5 296.0L762.2 294.1L760.5 292.1L758.6 290.1L756.6 288.2L754.5 286.4L752.2 284.6L749.9 282.9L747.3 281.2L744.3 279.4L740.9 277.9L736.2 276.3L731.7 274.8L727.3 273.3L723.0 271.8L718.8 270.4L714.7 269.0L710.7 267.6L706.8 266.3L702.9 264.9L699.2 263.7L695.8 262.9L692.4 262.3L689.0 261.8L685.5 261.3L682.1 261.0L678.6 260.7L675.3 260.4L672.2 260.3L668.8 260.1L665.6 260.1L662.2 260.1L658.8 260.2L655.6 260.3Z" fill="#651e97"/>
<path d="M652.9 261.2L649.4 262.2L645.7 263.4L641.9 264.7L638.1 266.0L634.2 267.3L630.2 268.6L626.0 270.0L621.8 271.4L617.5 272.9L613.1 274.3L610.9 275.9L609.5 277.3L608.3 279.0L607.3 280.5L606.5 282.3L605.9 284.1L605.5 285.8L605.3 287.5L605.4 289.5L605.6 291.5L606.1 293.5L606.9 295.5L607.9 297.6L609.2 299.7L610.8 301.9L612.8 304.2L615.3 306.7L618.1 309.2L621.4 311.6L625.4 314.2L629.7 316.7L634.3 319.1L638.5 321.1L643.7 323.2L648.6 325.0L653.6 326.6L658.8 328.1L664.0 329.5L669.5 330.7L674.8 331.7L680.6 332.6L686.1 333.3L691.6 333.8L697.0 334.1L702.4 334.3L707.3 331.0L712.1 327.9L716.7 324.9L721.2 321.9L725.5 319.1L729.6 316.4L733.7 313.7L737.6 311.1L741.3 308.7L745.0 306.2L748.6 303.9L752.0 301.6L755.4 299.4L758.6 297.3L760.7 295.4L759.2 293.3L757.5 291.3L755.6 289.3L753.6 287.5L751.5 285.7L749.0 283.9L746.5 282.1L743.9 280.5L740.9 278.7L738.2 277.3L734.4 275.7L729.9 274.2L725.6 272.7L721.3 271.2L717.1 269.8L713.1 268.4L709.1 267.1L705.2 265.7L701.6 264.7L698.0 263.9L694.6 263.3L691.2 262.8L687.7 262.3L684.1 261.9L681.0 261.5L677.5 261.2L674.3 261.0L670.7 260.9L667.6 260.8L664.3 260.8L660.8 260.8L657.5 260.9L654.0 261.1Z" fill="#6b219e"/>
<path d="M650.1 262.2L646.8 263.0L643.1 264.3L639.3 265.6L635.4 266.9L631.4 268.2L627.3 269.6L623.1 271.0L618.8 272.4L615.2 273.9L613.5 275.3L612.0 276.9L610.7 278.5L609.7 280.1L608.8 281.8L608.1 283.6L607.7 285.2L607.5 287.1L607.5 288.9L607.7 290.9L608.2 292.8L608.9 294.8L609.9 296.9L611.3 299.2L612.9 301.4L614.9 303.7L617.2 305.9L620.0 308.3L623.6 311.0L627.3 313.4L631.3 315.7L635.7 317.9L640.4 320.1L645.1 322.0L650.0 323.8L655.2 325.4L660.3 326.9L665.7 328.2L670.9 329.3L676.7 330.3L682.0 331.1L687.5 331.7L693.2 332.2L698.5 332.5L703.9 332.6L708.8 330.1L713.5 327.0L718.1 324.0L722.5 321.1L726.7 318.3L730.9 315.6L734.8 312.9L738.7 310.4L742.5 307.9L746.1 305.5L749.6 303.2L753.0 301.0L756.4 298.8L759.3 296.9L758.0 294.8L756.3 292.6L754.8 290.8L752.9 288.9L750.8 286.9L748.6 285.1L746.1 283.3L743.5 281.6L741.0 280.0L737.9 278.3L734.9 276.7L731.7 275.2L728.2 273.6L724.3 272.3L720.0 270.8L715.9 269.4L711.9 268.0L708.1 266.9L704.5 266.0L700.9 265.2L697.2 264.5L693.4 263.8L690.0 263.2L686.5 262.8L683.4 262.4L679.8 262.0L676.4 261.8L673.2 261.6L669.7 261.5L666.5 261.4L663.1 261.4L659.6 261.5L656.4 261.7L652.9 261.9Z" fill="#7123a4"/>
<path d="M646.8 263.3L643.5 264.2L639.7 265.4L635.8 266.7L631.8 268.1L627.7 269.5L623.5 270.9L619.7 272.2L617.6 273.6L615.7 275.3L614.1 276.8L612.9 278.3L611.7 280.0L610.9 281.6L610.2 283.4L609.8 285.0L609.5 286.9L609.5 288.8L609.7 290.6L610.3 292.7L611.0 294.7L612.0 296.7L613.4 299.0L615.0 301.0L617.2 303.5L619.5 305.7L622.5 308.1L626.2 310.8L630.3 313.3L635.0 315.8L639.5 318.0L644.0 319.9L648.8 321.7L653.8 323.4L659.2 325.0L664.3 326.3L669.7 327.5L674.7 328.4L680.5 329.4L686.0 330.0L691.2 330.5L696.7 330.8L702.0 330.9L707.6 330.9L712.1 327.9L716.7 324.9L721.2 321.9L725.5 319.1L729.6 316.4L733.7 313.7L737.6 311.1L741.3 308.7L745.0 306.2L748.6 303.9L752.0 301.6L755.4 299.4L757.3 297.5L756.2 295.4L754.7 293.2L753.2 291.3L751.3 289.3L749.4 287.5L747.3 285.7L745.0 283.9L742.5 282.2L739.9 280.5L736.9 278.8L733.9 277.2L730.7 275.7L727.2 274.1L723.6 272.6L719.9 271.2L715.7 269.8L711.9 268.6L708.0 267.5L704.4 266.6L700.5 265.8L697.1 265.1L693.3 264.4L689.8 263.8L686.3 263.3L683.0 263.0L679.4 262.6L676.0 262.4L672.8 262.2L669.4 262.1L666.1 262.0L662.7 262.0L659.3 262.1L655.8 262.3L652.4 262.6L649.1 263.0Z" fill="#7626ab"/>
<path d="M642.7 264.7L639.3 265.6L635.4 266.9L631.4 268.2L627.3 269.6L623.8 271.0L621.5 272.3L619.4 273.8L617.5 275.4L615.9 276.9L614.6 278.5L613.6 280.1L612.7 281.8L612.0 283.5L611.6 285.3L611.4 287.1L611.5 289.0L611.8 290.8L612.3 292.9L613.2 294.9L614.3 296.9L615.8 299.2L617.6 301.4L619.7 303.6L622.5 306.0L625.6 308.4L629.5 311.0L633.8 313.6L638.1 315.8L642.9 317.9L647.6 319.8L652.5 321.5L657.6 323.1L662.5 324.4L667.8 325.6L673.2 326.7L678.6 327.6L684.1 328.4L689.3 328.9L694.9 329.2L700.0 329.4L705.5 329.4L710.7 328.8L715.3 325.8L719.8 322.8L724.2 319.9L728.4 317.2L732.5 314.5L736.4 311.9L740.2 309.4L743.9 307.0L747.5 304.6L751.0 302.3L754.4 300.1L755.4 298.1L754.4 296.0L753.2 293.9L751.6 291.8L749.9 289.9L748.0 288.0L745.9 286.1L743.8 284.4L741.4 282.7L738.6 280.9L735.9 279.3L732.9 277.7L729.8 276.1L726.2 274.5L722.6 273.0L718.9 271.6L714.8 270.2L710.9 269.0L707.0 268.0L703.4 267.1L699.8 266.2L696.1 265.5L692.3 264.8L688.7 264.3L685.4 263.8L682.0 263.4L678.7 263.1L675.2 262.9L671.6 262.7L668.5 262.6L665.1 262.6L661.6 262.7L658.3 262.8L654.9 263.0L651.3 263.4L648.0 263.8L644.2 264.4Z" fill="#7c28b2"/>
<path d="M638.1 266.4L634.6 267.5L631.0 268.7L628.1 270.0L625.6 271.2L623.3 272.5L621.3 273.8L619.6 275.2L618.2 276.6L616.9 278.0L615.8 279.5L615.0 280.9L614.2 282.6L613.7 284.0L613.4 285.6L613.3 287.4L613.4 288.9L613.7 290.7L614.2 292.5L614.9 294.2L615.9 296.2L617.0 297.9L618.5 299.9L620.5 302.1L622.5 304.0L625.1 306.2L628.3 308.5L631.5 310.6L635.0 312.6L639.3 314.8L643.4 316.6L647.3 318.2L651.7 319.8L656.2 321.2L660.7 322.5L665.6 323.8L670.2 324.8L675.0 325.7L679.6 326.4L684.5 327.0L689.1 327.5L694.0 327.8L699.1 327.9L703.7 328.0L708.7 327.8L713.0 327.3L717.2 324.6L721.2 321.9L725.0 319.4L728.8 316.9L732.5 314.5L736.0 312.2L739.5 309.9L742.8 307.7L746.1 305.5L749.3 303.4L752.4 301.4L753.8 299.5L753.1 297.5L752.2 295.7L751.1 293.8L749.9 292.1L748.4 290.3L746.7 288.6L745.0 286.9L743.1 285.4L741.0 283.7L738.6 282.1L736.4 280.7L733.8 279.2L731.2 277.7L728.1 276.2L724.9 274.8L721.7 273.5L718.5 272.2L714.7 270.9L711.3 269.8L707.8 268.8L704.3 267.9L700.7 267.0L697.4 266.3L694.2 265.7L691.2 265.2L687.9 264.7L684.7 264.3L681.7 264.0L678.6 263.7L675.6 263.5L672.5 263.3L669.5 263.2L666.3 263.2L663.4 263.2L660.3 263.3L657.2 263.5L653.9 263.7L650.7 264.1L647.6 264.5L644.3 265.0L641.0 265.7Z" fill="#822ab8"/>
<path d="M637.3 267.4L633.6 268.6L630.6 269.8L627.7 271.1L625.4 272.4L623.5 273.6L621.7 275.0L620.2 276.4L618.8 277.9L617.6 279.4L616.8 280.8L616.1 282.3L615.5 283.8L615.2 285.4L615.1 287.0L615.2 288.9L615.4 290.5L615.9 292.2L616.7 294.2L617.7 295.9L619.0 297.9L620.5 299.8L622.3 301.7L624.6 303.9L627.3 306.0L630.2 308.1L633.8 310.4L637.4 312.3L641.8 314.5L645.6 316.1L650.1 317.9L654.3 319.3L658.9 320.7L663.6 322.0L668.1 323.0L672.7 324.0L677.6 324.8L682.1 325.4L687.3 326.0L692.0 326.3L696.8 326.5L701.2 326.6L706.2 326.5L710.9 326.2L715.3 325.8L719.4 323.1L723.3 320.5L727.1 318.0L730.9 315.6L734.5 313.2L738.0 310.9L741.3 308.7L744.7 306.5L747.9 304.4L751.0 302.3L752.0 300.5L751.4 298.5L750.7 296.6L749.7 294.6L748.6 292.9L747.2 291.1L745.6 289.2L744.0 287.7L742.1 286.0L740.1 284.4L738.0 282.8L735.5 281.2L733.2 279.8L730.5 278.3L727.6 276.8L724.5 275.4L721.3 274.0L718.0 272.8L714.3 271.4L710.6 270.3L706.9 269.2L703.8 268.4L700.2 267.5L696.9 266.8L693.6 266.2L690.6 265.7L687.1 265.2L684.0 264.8L681.0 264.4L677.9 264.2L675.0 264.0L671.8 263.8L668.8 263.7L665.5 263.7L662.5 263.8L659.3 263.9L656.3 264.1L653.1 264.4L649.9 264.8L646.8 265.3L643.5 265.9L640.3 266.6Z" fill="#882dbe"/>
<path d="M640.7 267.2L637.1 268.3L633.5 269.5L630.6 270.8L628.0 272.1L625.8 273.3L623.8 274.8L622.2 276.2L620.8 277.5L619.7 278.9L618.7 280.4L617.9 282.0L617.4 283.5L617.0 285.1L616.8 286.7L616.9 288.5L617.1 290.0L617.6 291.8L618.3 293.6L619.4 295.6L620.6 297.4L622.2 299.4L624.1 301.4L626.3 303.4L629.1 305.6L632.0 307.7L635.7 309.9L639.8 312.1L643.8 314.0L647.8 315.7L652.2 317.3L656.5 318.7L661.1 320.1L665.3 321.1L670.2 322.2L674.8 323.1L679.4 323.8L684.5 324.4L689.1 324.9L694.0 325.2L698.6 325.3L703.4 325.2L707.9 325.1L712.8 324.7L717.2 324.1L721.2 321.9L725.0 319.4L728.8 316.9L732.5 314.5L736.0 312.2L739.5 309.9L742.8 307.7L746.1 305.5L749.3 303.4L750.0 301.6L749.7 299.6L749.2 297.6L748.4 295.7L747.4 293.8L746.1 292.0L744.7 290.2L743.3 288.6L741.4 286.8L739.4 285.2L737.4 283.6L735.3 282.2L732.7 280.6L730.1 279.1L727.5 277.7L724.4 276.2L721.3 274.8L718.0 273.5L714.2 272.1L710.4 270.9L706.9 269.8L703.4 268.9L700.2 268.1L696.6 267.3L693.6 266.7L690.2 266.2L687.1 265.7L684.0 265.3L680.7 265.0L677.5 264.7L674.3 264.5L671.3 264.3L668.3 264.3L665.2 264.3L662.3 264.4L659.1 264.5L655.8 264.7L652.6 265.1L649.4 265.5L646.5 266.0L643.0 266.7Z" fill="#8c2ec3"/>
<path d="M640.8 267.8L637.3 268.8L633.8 270.1L630.9 271.4L628.5 272.7L626.5 274.0L624.6 275.4L623.1 276.7L621.8 278.2L620.7 279.6L619.8 281.2L619.2 282.6L618.7 284.3L618.5 285.9L618.5 287.4L618.7 289.3L619.1 291.0L619.8 292.8L620.7 294.5L621.9 296.5L623.4 298.4L625.2 300.3L627.2 302.2L629.8 304.3L633.0 306.6L636.7 308.9L640.7 311.0L644.7 312.9L649.0 314.7L653.0 316.2L657.4 317.6L662.0 318.9L666.8 320.1L671.3 321.1L676.1 321.9L680.4 322.6L685.4 323.1L690.0 323.5L694.9 323.8L699.4 323.8L704.4 323.7L709.1 323.5L713.5 323.0L718.1 322.4L722.0 321.2L725.9 318.6L729.7 316.2L733.3 313.8L736.8 311.5L740.3 309.2L743.6 307.0L746.8 304.9L747.9 302.9L748.0 300.9L747.7 298.9L747.2 297.0L746.4 295.1L745.4 293.3L744.1 291.4L742.8 289.7L741.2 288.0L739.4 286.4L737.5 284.7L735.4 283.2L732.9 281.5L730.6 280.1L727.9 278.6L725.1 277.2L722.0 275.7L718.8 274.3L715.5 273.1L711.7 271.8L708.3 270.7L704.8 269.7L701.2 268.8L697.9 268.0L694.6 267.3L691.2 266.7L688.2 266.2L685.1 265.8L681.8 265.4L678.5 265.1L675.5 264.9L672.5 264.8L669.2 264.7L666.2 264.7L663.0 264.7L659.9 264.9L657.0 265.1L653.7 265.4L650.5 265.8L647.0 266.4L643.8 267.0Z" fill="#9030c8"/>
<path d="M641.1 267.5L637.4 268.6L634.3 269.8L631.5 271.1L629.1 272.4L627.0 273.8L625.3 275.2L624.0 276.5L622.7 278.1L621.7 279.5L621.0 280.9L620.4 282.6L620.1 284.2L620.0 285.8L620.1 287.3L620.5 289.1L621.0 290.9L621.9 292.6L623.0 294.6L624.4 296.4L626.2 298.4L628.2 300.3L630.7 302.3L633.5 304.4L637.1 306.6L641.1 308.8L645.0 310.6L649.2 312.4L653.2 313.8L657.5 315.2L662.1 316.6L666.8 317.7L671.3 318.7L676.0 319.5L680.5 320.2L685.4 320.8L690.0 321.1L694.8 321.4L699.3 321.4L704.2 321.3L708.8 321.0L713.1 320.6L717.9 319.9L722.2 319.0L726.0 317.4L729.8 315.0L733.4 312.6L737.0 310.3L740.4 308.0L743.7 305.9L745.5 303.9L746.0 301.9L746.2 299.7L746.0 297.9L745.5 296.0L744.8 294.0L743.8 292.2L742.6 290.4L741.2 288.7L739.7 287.0L737.9 285.4L736.0 283.7L733.9 282.2L731.4 280.5L729.0 279.1L726.3 277.6L723.6 276.2L720.4 274.8L717.2 273.4L713.5 272.0L709.7 270.8L706.2 269.7L702.6 268.8L699.2 267.9L695.7 267.2L692.6 266.6L689.3 266.0L686.2 265.6L683.0 265.2L679.6 264.8L676.7 264.6L673.5 264.4L670.4 264.3L667.2 264.3L664.2 264.3L661.1 264.4L657.7 264.7L654.7 264.9L651.6 265.3L648.0 265.9L644.7 266.6L641.2 267.4Z" fill="#8c2ecd"/>
<path d="M641.6 267.1L638.4 268.1L635.6 269.1L633.1 270.3L630.7 271.6L628.9 272.7L627.4 273.9L626.0 275.1L624.8 276.3L623.7 277.7L623.0 278.9L622.3 280.3L621.9 281.6L621.6 283.1L621.5 284.5L621.6 286.0L621.8 287.5L622.3 289.0L623.0 290.6L623.8 292.1L624.9 293.7L626.2 295.4L628.0 297.3L629.8 298.9L632.0 300.7L634.8 302.7L637.9 304.6L641.4 306.5L645.3 308.4L648.9 309.9L652.3 311.2L656.4 312.6L660.1 313.7L664.1 314.8L668.4 315.8L672.1 316.5L676.3 317.3L680.5 317.9L684.5 318.3L688.9 318.7L692.8 318.9L697.1 319.0L701.2 319.0L705.4 318.8L709.5 318.5L713.6 318.0L717.5 317.4L721.5 316.6L725.0 315.6L729.0 314.3L732.0 312.5L735.2 310.4L738.3 308.4L741.1 306.5L742.6 304.6L743.5 302.6L744.1 301.0L744.3 299.1L744.3 297.4L744.1 295.6L743.6 294.0L742.9 292.3L742.0 290.7L741.0 289.2L739.7 287.6L738.3 286.0L736.7 284.6L735.1 283.2L733.4 281.9L731.4 280.5L729.2 279.1L727.0 277.8L724.5 276.4L722.1 275.3L719.3 274.0L716.1 272.7L713.2 271.6L709.8 270.4L706.8 269.5L703.7 268.6L700.5 267.8L697.6 267.2L694.4 266.5L691.4 266.0L688.7 265.5L685.8 265.1L683.1 264.8L680.3 264.5L677.4 264.2L674.4 264.1L671.9 263.9L668.9 263.9L666.2 263.9L663.4 264.0L660.5 264.1L657.5 264.3L654.7 264.6L652.1 264.9L649.0 265.4L646.2 266.0L643.0 266.7Z" fill="#892cd1"/>
<path d="M642.4 266.6L639.3 267.6L636.6 268.6L634.0 269.8L631.7 271.0L630.0 272.1L628.4 273.4L627.0 274.6L625.9 275.9L624.9 277.2L624.1 278.5L623.6 279.8L623.2 281.3L623.0 282.5L623.0 284.1L623.1 285.6L623.5 287.1L624.0 288.5L624.9 290.2L625.8 291.6L627.1 293.3L628.7 295.1L630.3 296.7L632.5 298.5L634.9 300.2L637.9 302.2L641.3 304.1L644.9 305.9L648.6 307.4L652.2 308.9L655.8 310.1L659.5 311.3L663.5 312.4L667.6 313.4L672.0 314.3L675.9 315.0L679.9 315.6L684.2 316.1L688.2 316.4L692.5 316.6L696.5 316.7L700.8 316.7L704.9 316.5L708.9 316.2L712.7 315.7L716.9 315.0L720.6 314.3L724.4 313.2L727.9 312.0L731.4 310.5L734.8 308.6L737.6 306.5L739.4 304.7L740.9 302.7L741.8 300.8L742.4 299.1L742.6 297.4L742.6 295.6L742.3 293.8L741.8 292.2L741.1 290.7L740.1 289.0L739.0 287.5L737.7 285.9L736.4 284.5L734.7 283.0L733.0 281.6L731.2 280.3L729.2 279.0L727.0 277.6L724.5 276.2L722.1 275.0L719.4 273.8L716.6 272.6L713.3 271.3L709.9 270.1L706.5 269.0L703.4 268.2L700.2 267.3L697.4 266.7L694.3 266.1L691.4 265.5L688.5 265.1L685.4 264.6L682.6 264.3L679.8 264.0L676.9 263.8L674.1 263.6L671.3 263.5L668.6 263.5L665.7 263.5L662.9 263.6L660.0 263.7L657.3 263.9L654.2 264.3L651.5 264.6L648.6 265.2L645.4 265.8L642.4 266.6Z" fill="#852bd5"/>
<path d="M643.4 266.1L640.2 267.1L637.5 268.1L634.9 269.2L632.7 270.5L631.0 271.6L629.3 272.9L628.0 274.1L626.9 275.4L626.1 276.6L625.3 278.0L624.8 279.3L624.5 280.6L624.4 282.2L624.4 283.5L624.7 284.9L625.2 286.5L625.8 288.0L626.8 289.7L627.9 291.3L629.4 292.9L630.9 294.5L633.0 296.3L635.3 298.0L637.9 299.8L641.2 301.7L644.3 303.3L648.2 305.0L651.9 306.5L655.3 307.7L659.6 309.1L663.5 310.1L667.3 311.1L671.2 311.9L675.3 312.6L679.5 313.3L683.5 313.8L687.6 314.1L691.8 314.4L696.1 314.5L700.1 314.4L703.9 314.3L708.3 313.9L712.4 313.4L716.1 312.8L720.2 311.9L723.9 310.8L727.3 309.6L730.7 308.1L734.0 306.1L736.3 304.3L738.2 302.3L739.5 300.5L740.3 298.6L740.8 296.9L740.9 295.2L740.8 293.4L740.4 291.7L739.8 290.0L739.0 288.5L738.1 287.0L736.8 285.4L735.5 284.0L734.0 282.6L732.2 281.1L730.5 279.8L728.5 278.4L726.3 277.0L724.1 275.8L721.4 274.4L718.9 273.2L715.9 271.9L713.0 270.8L709.6 269.6L706.6 268.7L703.1 267.7L700.2 266.9L697.1 266.2L694.2 265.6L691.2 265.0L688.1 264.6L685.2 264.1L682.2 263.8L679.4 263.5L676.5 263.3L674.0 263.2L670.9 263.1L668.0 263.0L665.3 263.1L662.5 263.2L659.7 263.3L656.8 263.6L653.9 263.9L651.0 264.4L648.1 264.9L644.9 265.7Z" fill="#8229da"/>
<path d="M644.6 265.4L641.5 266.4L638.4 267.5L636.1 268.6L633.8 269.8L632.0 271.0L630.6 272.2L629.3 273.4L628.1 274.7L627.3 275.9L626.6 277.3L626.1 278.7L625.8 280.0L625.7 281.5L625.9 282.8L626.2 284.3L626.8 285.9L627.5 287.3L628.6 288.9L629.8 290.5L631.3 292.1L633.2 293.9L635.4 295.6L637.9 297.4L641.1 299.3L644.6 301.1L648.4 302.9L652.1 304.3L655.4 305.5L659.6 306.9L663.4 307.9L667.5 308.9L671.0 309.7L675.6 310.5L679.6 311.1L683.8 311.6L687.4 311.9L692.0 312.2L696.1 312.2L700.2 312.2L703.9 312.0L708.2 311.6L712.2 311.1L715.8 310.5L719.9 309.5L723.5 308.5L727.2 307.0L730.4 305.4L733.5 303.5L735.6 301.6L737.1 299.8L738.2 298.0L738.9 296.1L739.2 294.4L739.2 292.7L739.0 291.0L738.5 289.4L737.8 287.8L736.8 286.2L735.8 284.9L734.5 283.3L733.0 281.8L731.4 280.5L729.5 279.0L727.7 277.8L725.6 276.4L723.2 275.1L720.7 273.8L718.0 272.5L715.2 271.3L711.9 270.0L709.2 269.1L705.9 268.0L702.8 267.2L699.6 266.3L696.3 265.6L693.4 265.0L690.4 264.4L687.3 264.0L684.6 263.6L681.8 263.3L679.0 263.0L676.0 262.8L673.0 262.7L670.1 262.6L667.3 262.6L664.5 262.6L661.7 262.8L659.0 263.0L655.9 263.3L653.0 263.7L650.0 264.2L647.1 264.8Z" fill="#7e27de"/>
<path d="M645.9 264.8L642.8 265.7L639.6 266.8L637.1 268.0L635.0 269.1L633.2 270.3L631.7 271.4L630.4 272.7L629.4 273.9L628.4 275.3L627.8 276.6L627.3 278.0L627.1 279.3L627.1 280.7L627.3 282.1L627.7 283.6L628.4 285.1L629.2 286.6L630.3 288.1L631.7 289.8L633.5 291.5L635.6 293.3L638.0 295.0L640.6 296.7L643.9 298.5L647.6 300.3L651.1 301.8L654.9 303.2L658.4 304.3L662.3 305.5L666.2 306.5L670.2 307.4L674.5 308.2L678.5 308.8L682.7 309.3L686.5 309.7L690.8 310.0L694.7 310.1L698.9 310.0L703.0 309.8L707.0 309.5L711.0 309.0L714.9 308.3L718.7 307.4L722.5 306.3L725.6 305.1L729.3 303.3L732.3 301.3L734.4 299.4L735.8 297.7L736.8 295.9L737.4 294.1L737.6 292.3L737.6 290.8L737.3 289.1L736.8 287.6L736.0 286.0L734.9 284.4L733.9 283.0L732.5 281.6L731.0 280.2L729.0 278.6L727.3 277.4L725.2 276.0L723.0 274.7L720.4 273.3L718.1 272.2L715.3 271.0L712.0 269.7L708.7 268.5L705.2 267.4L702.0 266.5L698.8 265.7L696.0 265.1L692.7 264.4L689.7 263.9L686.9 263.4L683.7 263.0L680.9 262.7L678.0 262.4L675.2 262.3L672.3 262.1L669.6 262.1L666.6 262.1L663.8 262.2L660.8 262.4L657.9 262.7L655.0 263.0L651.9 263.5L649.0 264.0L645.9 264.8Z" fill="#7b25e2"/>
<path d="M644.5 265.0L642.0 265.8L639.7 266.7L637.5 267.7L635.5 268.8L633.9 269.8L632.5 270.9L631.5 271.8L630.3 273.0L629.5 274.2L628.8 275.2L628.3 276.4L628.0 277.6L627.8 278.8L627.8 280.1L627.9 281.2L628.2 282.5L628.7 283.8L629.4 285.2L630.3 286.5L631.3 287.9L632.5 289.2L634.1 290.7L635.8 292.2L637.8 293.7L640.0 295.1L642.8 296.7L645.8 298.3L648.6 299.6L652.2 301.1L655.4 302.3L658.4 303.3L662.0 304.3L665.3 305.2L668.7 306.0L672.3 306.7L676.0 307.4L679.2 307.9L683.0 308.3L686.7 308.7L690.2 308.9L693.5 309.0L697.5 309.0L701.0 308.8L704.4 308.6L708.1 308.2L711.2 307.8L714.8 307.2L718.1 306.4L721.1 305.5L724.4 304.3L727.2 303.1L730.1 301.4L732.2 299.9L733.9 298.2L735.2 296.5L736.0 295.0L736.6 293.5L736.8 292.1L736.9 290.7L736.7 289.2L736.4 287.8L735.8 286.3L735.1 285.1L734.2 283.8L733.2 282.5L732.0 281.2L730.6 279.9L729.2 278.7L727.6 277.6L725.9 276.4L723.9 275.1L721.9 274.0L719.7 272.8L717.5 271.8L715.0 270.7L712.5 269.7L709.6 268.6L706.6 267.6L703.9 266.8L700.8 266.0L698.1 265.3L695.6 264.7L692.7 264.2L690.2 263.7L687.6 263.3L684.9 262.9L682.5 262.6L679.9 262.3L677.5 262.2L675.0 262.0L672.4 261.9L669.7 261.9L667.5 261.9L664.9 261.9L662.4 262.1L659.9 262.3L657.2 262.5L654.5 262.9L651.9 263.3L649.5 263.8L646.7 264.4Z" fill="#7925e5"/>
<path d="M647.8 263.8L644.8 264.7L642.0 265.6L639.5 266.6L637.6 267.6L635.6 268.7L634.1 269.8L633.0 270.7L631.8 271.9L630.9 272.9L630.1 274.1L629.5 275.3L629.1 276.3L628.9 277.5L628.8 278.8L628.9 280.0L629.2 281.2L629.7 282.5L630.4 283.9L631.2 285.2L632.2 286.6L633.4 287.9L635.0 289.4L636.7 290.9L638.7 292.3L640.9 293.8L643.7 295.4L646.7 296.9L649.6 298.2L653.1 299.7L656.4 300.8L659.4 301.8L663.0 302.9L666.3 303.7L669.7 304.5L673.3 305.2L677.1 305.8L680.3 306.3L683.8 306.7L687.4 307.0L690.9 307.2L694.9 307.2L698.0 307.2L701.7 307.0L705.1 306.7L708.8 306.3L712.1 305.8L715.5 305.1L718.7 304.3L722.1 303.2L725.1 301.9L727.7 300.6L730.0 299.1L731.9 297.5L733.4 295.9L734.3 294.4L735.0 292.9L735.5 291.3L735.6 289.9L735.5 288.5L735.3 287.1L734.8 285.6L734.1 284.4L733.3 283.0L732.2 281.7L731.1 280.5L729.7 279.2L728.4 278.0L726.7 276.8L725.0 275.6L723.2 274.5L721.0 273.3L719.1 272.3L716.8 271.2L714.3 270.1L711.5 269.0L708.6 267.9L705.6 266.9L702.9 266.2L699.8 265.3L697.4 264.7L694.5 264.1L691.9 263.6L689.0 263.1L686.4 262.7L684.1 262.4L681.4 262.1L679.0 261.8L676.3 261.6L673.8 261.5L671.5 261.5L668.6 261.4L666.3 261.5L663.9 261.6L661.2 261.8L658.6 262.0L655.9 262.3L653.3 262.7L650.7 263.2L647.9 263.8Z" fill="#7623e8"/>
<path d="M647.5 263.6L644.7 264.4L641.9 265.4L639.7 266.4L637.7 267.5L636.0 268.5L634.6 269.5L633.4 270.5L632.3 271.7L631.5 272.8L630.8 273.9L630.3 275.0L629.9 276.3L629.8 277.4L629.9 278.6L630.1 279.8L630.5 281.0L631.1 282.3L632.0 283.7L632.9 285.0L634.2 286.4L635.6 287.8L637.3 289.3L639.3 290.7L641.4 292.2L644.2 293.8L647.2 295.3L650.5 296.8L653.6 298.0L656.8 299.2L660.3 300.3L663.4 301.2L666.6 302.0L670.2 302.9L673.6 303.5L677.4 304.2L680.8 304.7L684.6 305.1L688.2 305.3L691.5 305.5L695.2 305.5L698.5 305.4L702.1 305.2L705.5 304.9L709.3 304.4L712.5 303.8L715.8 303.1L719.2 302.1L722.4 301.0L725.2 299.7L728.0 298.1L730.1 296.6L731.7 294.9L732.9 293.3L733.7 291.8L734.1 290.4L734.4 288.8L734.3 287.5L734.1 286.0L733.7 284.7L733.1 283.4L732.3 282.2L731.3 280.9L730.1 279.6L728.7 278.3L727.2 277.1L725.7 276.0L723.9 274.7L721.9 273.5L720.0 272.5L717.8 271.4L715.4 270.3L713.0 269.2L710.1 268.1L707.2 267.1L704.1 266.1L701.4 265.3L698.6 264.6L695.8 264.0L692.9 263.4L690.4 262.9L687.8 262.5L685.1 262.1L682.4 261.7L680.1 261.5L677.4 261.3L674.9 261.1L672.5 261.0L669.8 261.0L667.4 261.0L664.8 261.1L662.3 261.3L659.6 261.5L657.1 261.8L654.5 262.2L652.0 262.6L649.1 263.2Z" fill="#7322ec"/>
<path d="M647.2 263.4L644.6 264.2L642.3 265.1L640.1 266.1L638.0 267.2L636.5 268.2L635.0 269.3L633.9 270.3L632.8 271.5L632.0 272.6L631.5 273.7L631.1 274.8L630.8 275.9L630.8 277.1L631.0 278.3L631.4 279.7L631.9 280.9L632.7 282.1L633.6 283.4L634.9 285.0L636.2 286.2L637.9 287.7L639.8 289.2L641.9 290.6L644.6 292.2L647.6 293.7L650.9 295.2L653.9 296.4L657.2 297.6L660.7 298.7L663.8 299.6L667.6 300.6L671.0 301.3L674.6 302.0L677.6 302.5L681.6 303.1L685.0 303.4L688.6 303.7L692.3 303.8L695.5 303.8L699.0 303.7L702.5 303.5L706.0 303.1L709.6 302.5L713.0 301.9L716.2 301.1L719.3 300.1L722.3 299.0L725.3 297.5L727.9 295.8L729.8 294.3L731.0 292.9L732.1 291.2L732.7 289.8L733.1 288.4L733.2 287.0L733.1 285.6L732.8 284.3L732.2 282.8L731.5 281.6L730.6 280.3L729.4 279.0L728.1 277.7L726.7 276.5L725.2 275.4L723.4 274.2L721.3 273.0L719.5 272.0L717.2 270.8L714.9 269.7L712.5 268.7L709.6 267.5L707.0 266.7L704.4 265.8L701.3 264.9L698.5 264.2L695.7 263.5L693.2 263.0L690.4 262.5L687.7 262.0L685.0 261.6L682.7 261.3L680.0 261.0L677.6 260.8L675.1 260.7L672.4 260.6L669.7 260.5L667.3 260.6L664.8 260.7L662.1 260.9L659.6 261.1L656.8 261.4L654.2 261.8L651.7 262.3L648.9 262.9Z" fill="#7020ef"/>
<path d="M646.6 263.3L644.5 264.0L641.8 265.1L639.7 266.1L638.1 267.1L636.6 268.1L635.2 269.2L634.2 270.2L633.3 271.3L632.6 272.4L632.1 273.6L631.8 274.7L631.7 275.9L631.9 277.1L632.3 278.5L632.7 279.6L633.5 280.9L634.5 282.2L635.7 283.6L637.1 284.9L638.8 286.4L640.7 287.8L642.8 289.2L645.5 290.8L648.1 292.1L650.8 293.4L654.3 294.8L657.5 296.0L660.4 296.9L664.0 298.0L667.2 298.8L670.7 299.6L674.1 300.3L677.8 300.9L681.4 301.4L685.1 301.8L688.7 302.1L692.0 302.2L695.7 302.2L699.0 302.0L702.5 301.7L706.2 301.3L709.3 300.8L712.5 300.2L716.2 299.2L719.0 298.3L722.0 297.1L725.0 295.5L727.1 294.1L728.9 292.5L730.3 290.9L731.2 289.4L731.7 287.9L732.0 286.6L732.1 285.3L731.9 283.9L731.5 282.5L730.9 281.2L730.0 279.8L729.0 278.6L727.8 277.5L726.3 276.1L724.7 274.9L723.0 273.8L721.1 272.6L719.3 271.6L717.0 270.4L714.7 269.3L712.3 268.3L709.8 267.3L706.9 266.2L703.8 265.3L701.1 264.5L698.4 263.7L695.5 263.1L692.8 262.5L690.1 262.0L687.5 261.5L684.9 261.1L682.2 260.8L679.8 260.5L677.0 260.3L674.4 260.1L672.0 260.1L669.4 260.1L667.0 260.1L664.5 260.2L661.6 260.5L659.2 260.7L656.5 261.1L654.0 261.5L651.0 262.1L648.3 262.8Z" fill="#691ef2"/>
<path d="M650.9 261.8L648.1 262.5L645.2 263.5L642.5 264.5L640.6 265.5L638.8 266.5L637.3 267.6L635.9 268.7L634.9 269.7L634.0 270.7L633.3 271.9L632.9 273.1L632.6 274.2L632.6 275.4L632.9 276.7L633.3 277.8L634.0 279.1L634.9 280.4L635.9 281.7L637.2 283.0L638.7 284.4L640.6 285.8L642.6 287.2L644.8 288.6L647.6 290.1L650.8 291.6L653.7 292.8L656.8 294.0L660.1 295.1L663.7 296.2L666.8 297.0L670.2 297.9L673.7 298.6L677.2 299.2L681.1 299.8L684.4 300.2L687.9 300.4L691.7 300.6L694.8 300.6L698.5 300.4L701.9 300.1L705.5 299.7L708.7 299.2L712.0 298.5L715.5 297.6L718.4 296.6L721.8 295.2L724.2 293.8L726.3 292.4L728.1 290.8L729.2 289.4L730.1 287.9L730.7 286.5L731.0 285.0L731.0 283.6L730.8 282.3L730.4 281.0L729.6 279.6L728.7 278.4L727.6 277.2L726.4 276.1L724.8 274.8L723.1 273.6L721.3 272.5L719.3 271.3L717.2 270.2L714.9 269.1L712.6 268.0L710.1 267.0L707.2 265.9L704.1 264.9L701.5 264.1L698.4 263.3L695.8 262.7L693.0 262.1L690.2 261.5L687.5 261.0L684.8 260.6L682.2 260.3L679.8 260.0L677.2 259.8L674.5 259.6L672.2 259.6L669.3 259.6L666.8 259.6L664.2 259.8L661.7 260.0L658.9 260.3L656.3 260.7L653.7 261.2L650.9 261.8Z" fill="#621cf3"/>
<path d="M651.4 261.3L648.8 262.0L646.3 262.8L643.9 263.7L642.1 264.5L640.4 265.4L639.1 266.2L637.6 267.2L636.5 268.1L635.7 269.0L634.9 269.9L634.3 270.9L633.8 271.9L633.6 272.8L633.5 273.8L633.6 274.9L633.8 275.9L634.2 276.9L634.8 278.0L635.7 279.2L636.5 280.2L637.7 281.4L638.8 282.4L640.1 283.6L641.7 284.8L643.8 286.1L645.6 287.3L648.1 288.6L650.7 289.8L653.5 291.1L656.1 292.1L658.7 293.0L661.6 293.9L664.5 294.8L667.7 295.6L670.3 296.3L673.3 296.9L676.6 297.5L679.6 298.0L682.4 298.4L685.3 298.7L688.5 298.9L691.7 299.0L694.7 299.0L697.4 298.9L700.6 298.7L703.2 298.4L706.2 297.9L709.0 297.4L712.2 296.7L714.6 296.0L717.3 295.1L720.2 293.9L722.4 292.8L724.3 291.7L726.2 290.2L727.4 289.0L728.4 287.8L729.1 286.5L729.7 285.3L730.0 284.1L730.1 283.0L730.0 281.7L729.7 280.6L729.2 279.4L728.6 278.4L727.8 277.4L726.7 276.3L725.5 275.2L724.3 274.2L722.9 273.2L721.4 272.3L719.7 271.2L717.9 270.2L716.2 269.3L714.2 268.4L712.0 267.4L710.0 266.6L707.5 265.6L704.9 264.8L702.3 263.9L700.0 263.3L697.2 262.6L694.8 262.0L692.6 261.5L690.4 261.1L687.9 260.6L685.8 260.3L683.6 260.0L681.3 259.7L679.2 259.4L676.8 259.2L674.6 259.1L672.2 259.1L670.0 259.0L667.9 259.1L665.8 259.2L663.5 259.4L661.2 259.6L659.0 259.9L656.9 260.2L654.4 260.6L652.0 261.1Z" fill="#5a1af5"/>
<path d="M652.2 260.7L649.9 261.3L647.4 262.1L645.0 263.0L643.1 263.8L641.4 264.7L639.7 265.6L638.5 266.4L637.4 267.3L636.4 268.3L635.6 269.2L635.0 270.2L634.6 271.1L634.3 272.1L634.3 273.1L634.4 274.1L634.7 275.1L635.2 276.2L635.9 277.2L636.8 278.4L637.7 279.4L639.0 280.6L640.3 281.8L641.9 283.0L643.5 284.2L645.3 285.3L647.6 286.6L650.2 287.9L652.9 289.1L655.9 290.3L658.5 291.3L661.2 292.2L664.2 293.1L667.2 293.9L669.8 294.6L673.0 295.3L675.9 295.9L678.9 296.4L682.0 296.8L684.9 297.1L688.0 297.4L690.8 297.5L693.8 297.5L697.1 297.3L699.9 297.1L703.0 296.8L706.0 296.3L708.7 295.8L711.3 295.2L714.2 294.4L716.8 293.4L719.7 292.2L721.8 291.1L723.6 290.0L725.3 288.7L726.6 287.5L727.6 286.1L728.3 285.0L728.8 283.8L729.1 282.6L729.2 281.3L729.0 280.3L728.7 279.2L728.2 278.1L727.3 276.9L726.5 276.0L725.3 274.8L724.1 273.8L722.8 272.8L721.3 271.9L719.6 270.8L717.7 269.8L716.2 269.0L714.3 268.1L711.9 267.0L709.9 266.2L707.4 265.2L705.2 264.5L703.0 263.8L700.3 263.0L698.1 262.3L695.7 261.8L693.3 261.2L690.9 260.7L688.4 260.2L686.3 259.9L683.8 259.5L681.5 259.2L679.3 258.9L677.3 258.8L674.8 258.6L672.8 258.5L670.6 258.5L668.3 258.6L666.0 258.7L663.7 258.8L661.6 259.1L659.2 259.4L657.0 259.7L654.5 260.2L652.2 260.7Z" fill="#5219f7"/>
<path d="M653.2 260.0L650.5 260.7L648.0 261.5L645.6 262.4L643.7 263.2L641.9 264.1L640.3 265.0L639.1 265.8L638.0 266.7L637.0 267.7L636.1 268.7L635.6 269.6L635.2 270.5L635.0 271.6L635.1 272.5L635.3 273.6L635.7 274.6L636.3 275.7L637.1 276.7L638.0 277.7L639.2 278.9L640.5 280.1L642.0 281.3L643.6 282.4L645.3 283.5L647.6 284.9L649.7 285.9L652.3 287.2L654.7 288.2L657.7 289.3L660.4 290.3L663.2 291.2L666.2 292.0L668.9 292.8L671.9 293.5L674.6 294.1L677.9 294.7L680.9 295.2L683.6 295.5L687.0 295.8L689.8 295.9L692.8 296.0L696.0 295.9L698.9 295.7L702.1 295.3L704.9 294.9L707.8 294.3L710.3 293.8L713.2 292.9L715.9 292.0L718.3 291.0L720.8 289.7L722.7 288.6L724.6 287.1L725.7 286.0L726.8 284.8L727.5 283.6L728.0 282.4L728.3 281.3L728.3 280.0L728.1 279.0L727.8 277.9L727.2 276.8L726.3 275.6L725.4 274.7L724.3 273.7L722.9 272.7L721.2 271.5L719.8 270.6L718.0 269.6L716.3 268.7L714.5 267.8L712.4 266.8L710.2 265.9L708.1 265.1L705.6 264.1L702.9 263.3L700.7 262.6L698.0 261.8L695.6 261.3L693.3 260.7L690.8 260.2L688.4 259.7L686.3 259.3L684.0 259.0L681.5 258.6L679.3 258.4L677.3 258.2L674.8 258.0L672.8 258.0L670.6 258.0L668.2 258.0L666.0 258.1L663.6 258.3L661.3 258.6L659.2 258.9L657.1 259.2L654.7 259.7Z" fill="#4a17f9"/>
<path d="M651.2 260.1L649.0 260.8L646.6 261.6L644.6 262.4L642.8 263.3L641.2 264.2L639.9 265.0L638.8 265.9L637.7 266.8L636.9 267.8L636.3 268.7L636.0 269.6L635.8 270.6L635.8 271.7L636.1 272.7L636.5 273.7L637.2 274.8L638.0 275.8L638.9 276.8L640.1 277.9L641.5 279.1L643.0 280.2L644.7 281.4L646.5 282.5L648.8 283.8L651.3 285.0L654.0 286.3L656.5 287.3L659.5 288.4L662.3 289.3L665.1 290.2L668.1 291.0L670.6 291.7L673.9 292.4L676.7 293.0L679.6 293.5L682.8 293.9L686.1 294.3L688.8 294.4L691.7 294.5L694.8 294.4L698.1 294.2L700.8 294.0L703.6 293.6L706.7 293.0L709.4 292.3L712.3 291.5L715.0 290.6L717.4 289.6L719.9 288.4L722.1 287.0L723.7 285.8L725.1 284.5L725.9 283.5L726.8 282.1L727.3 280.9L727.5 279.9L727.5 278.8L727.3 277.7L726.9 276.6L726.2 275.5L725.3 274.4L724.1 273.3L722.9 272.3L721.5 271.3L720.1 270.4L718.3 269.3L716.6 268.4L714.8 267.5L712.9 266.6L710.5 265.6L708.4 264.7L705.9 263.8L703.3 262.9L700.6 262.1L698.4 261.5L695.6 260.8L693.2 260.2L690.8 259.7L688.8 259.3L686.3 258.8L684.1 258.4L681.6 258.1L679.3 257.8L677.3 257.6L674.9 257.5L672.9 257.4L670.6 257.4L668.2 257.4L666.0 257.6L663.6 257.8L661.4 258.0L659.2 258.3L656.7 258.8L654.5 259.3L652.0 259.9Z" fill="#4315fb"/>
<path d="M653.2 259.1L650.8 259.8L648.3 260.6L645.9 261.5L644.1 262.3L642.3 263.2L641.0 264.0L639.8 264.9L638.7 265.8L637.8 266.7L637.1 267.7L636.7 268.7L636.5 269.6L636.5 270.5L636.7 271.6L637.2 272.6L637.8 273.6L638.6 274.6L639.8 275.8L640.9 276.8L642.2 277.9L643.7 279.0L645.7 280.3L647.6 281.4L649.9 282.7L652.0 283.7L654.3 284.7L657.2 285.9L659.7 286.9L662.8 287.9L665.6 288.8L668.2 289.5L671.4 290.3L674.4 291.0L677.4 291.6L680.4 292.1L683.5 292.6L686.3 292.8L689.6 293.0L692.6 293.0L695.5 292.9L698.2 292.8L701.2 292.4L704.1 291.9L706.9 291.4L709.8 290.6L712.6 289.8L715.2 288.8L717.9 287.6L720.3 286.3L722.3 285.0L723.8 283.7L724.8 282.7L725.7 281.4L726.3 280.3L726.7 279.1L726.8 278.0L726.6 276.8L726.2 275.8L725.5 274.6L724.8 273.7L723.7 272.6L722.4 271.6L721.1 270.6L719.4 269.6L717.8 268.7L715.9 267.7L714.0 266.7L712.0 265.8L710.0 264.9L707.5 263.9L705.4 263.2L702.8 262.3L700.6 261.6L697.9 260.8L695.5 260.2L693.2 259.7L690.8 259.1L688.3 258.6L685.8 258.1L683.7 257.8L681.5 257.5L679.3 257.2L676.9 257.0L674.5 256.9L672.2 256.8L669.9 256.8L667.9 256.9L665.5 257.0L663.4 257.2L660.9 257.6L658.8 257.9L656.3 258.4L653.9 258.9Z" fill="#3b13fc"/>
<path d="M650.6 259.3L648.8 259.9L646.4 260.8L644.6 261.7L642.8 262.6L641.3 263.5L640.0 264.4L639.0 265.3L638.2 266.1L637.6 267.1L637.2 268.1L637.1 269.1L637.2 269.9L637.5 271.0L638.1 272.0L638.8 273.0L639.9 274.2L640.9 275.1L642.3 276.2L643.8 277.3L645.4 278.4L647.5 279.7L649.4 280.8L651.9 282.0L654.5 283.2L657.4 284.4L659.9 285.4L662.6 286.3L665.4 287.2L668.3 288.0L671.4 288.8L674.5 289.6L677.4 290.2L680.3 290.7L683.4 291.1L686.4 291.4L689.5 291.6L692.4 291.6L695.6 291.5L698.1 291.3L701.2 290.9L704.1 290.5L707.1 289.8L709.7 289.1L712.4 288.2L715.3 287.1L717.5 286.1L719.9 284.8L721.6 283.6L723.0 282.4L724.3 281.2L725.1 280.1L725.6 279.0L726.0 277.8L726.0 276.6L725.8 275.6L725.4 274.5L724.6 273.3L723.8 272.5L722.7 271.4L721.4 270.4L719.7 269.3L718.2 268.4L716.3 267.4L714.3 266.4L712.3 265.5L710.3 264.6L708.3 263.8L705.8 262.8L703.2 261.9L700.5 261.1L697.8 260.3L695.5 259.7L693.2 259.1L690.8 258.6L688.3 258.1L685.8 257.6L683.7 257.2L681.5 256.9L679.2 256.6L677.0 256.4L674.4 256.2L672.3 256.2L670.0 256.2L667.8 256.3L665.5 256.4L663.3 256.7L660.8 257.0L658.8 257.4L656.3 257.9L654.0 258.4L651.3 259.1Z" fill="#3311fe"/>
<path d="M654.3 257.8L652.2 258.4L650.1 259.0L648.1 259.7L646.5 260.4L644.7 261.2L643.3 261.9L642.1 262.6L641.0 263.3L640.0 264.1L639.2 264.9L638.6 265.6L638.2 266.3L637.9 267.1L637.7 267.9L637.8 268.8L638.0 269.6L638.3 270.4L639.0 271.3L639.6 272.1L640.5 273.0L641.5 273.9L642.6 274.8L643.8 275.7L645.0 276.6L646.7 277.6L648.2 278.5L650.1 279.5L651.7 280.4L653.9 281.4L655.7 282.2L658.1 283.1L660.6 284.1L662.7 284.8L664.9 285.5L667.7 286.3L670.2 287.0L672.5 287.6L674.6 288.1L677.3 288.7L679.8 289.2L682.5 289.6L684.9 289.9L687.4 290.1L690.0 290.2L692.2 290.2L694.9 290.1L697.4 289.9L699.8 289.7L702.0 289.4L704.7 288.8L707.1 288.3L709.3 287.7L711.7 286.9L713.7 286.2L716.0 285.2L718.0 284.1L719.9 283.0L721.2 282.1L722.5 281.0L723.5 280.1L724.2 279.1L724.9 278.1L725.2 277.2L725.4 276.3L725.4 275.4L725.1 274.4L724.8 273.6L724.2 272.7L723.4 271.8L722.6 271.0L721.6 270.2L720.3 269.2L719.0 268.4L717.8 267.7L716.2 266.9L714.7 266.1L713.0 265.3L711.1 264.5L709.5 263.8L707.4 262.9L705.7 262.3L703.6 261.6L701.4 260.9L699.2 260.2L697.4 259.7L695.1 259.0L693.2 258.6L691.3 258.1L689.3 257.7L687.4 257.3L685.4 256.9L683.3 256.6L681.4 256.3L679.5 256.0L677.7 255.9L675.9 255.7L673.9 255.6L671.8 255.6L670.2 255.6L668.3 255.6L666.4 255.8L664.5 255.9L662.4 256.2L660.7 256.5L658.7 256.8L656.8 257.2L654.5 257.8Z" fill="#2b12ff"/>
<path d="M653.2 257.5L651.4 258.1L649.3 258.8L647.7 259.4L645.8 260.2L644.4 260.8L643.0 261.6L641.9 262.3L640.9 263.0L640.1 263.7L639.4 264.5L638.9 265.2L638.5 266.1L638.3 266.8L638.4 267.6L638.5 268.4L638.9 269.2L639.5 270.2L640.1 270.9L641.0 271.8L642.0 272.7L643.2 273.6L644.4 274.5L645.7 275.4L647.4 276.4L648.8 277.3L650.7 278.3L652.8 279.3L655.0 280.3L657.3 281.3L659.7 282.2L661.8 283.0L664.4 283.9L666.7 284.6L669.0 285.3L671.4 285.9L673.9 286.5L676.5 287.1L678.6 287.6L681.5 288.0L683.9 288.4L686.4 288.6L689.1 288.8L691.3 288.8L694.1 288.7L696.4 288.6L698.9 288.4L701.3 288.0L703.4 287.7L706.0 287.1L708.3 286.5L710.5 285.8L712.9 284.9L714.8 284.1L717.0 283.1L718.9 282.0L720.2 281.1L721.5 280.1L722.6 279.1L723.4 278.2L724.1 277.1L724.5 276.3L724.7 275.4L724.7 274.5L724.5 273.5L724.2 272.6L723.5 271.7L722.8 270.8L721.9 270.0L721.0 269.2L719.6 268.3L718.4 267.6L717.0 266.8L715.5 266.0L713.9 265.2L712.0 264.3L710.3 263.6L708.6 262.9L706.6 262.1L704.4 261.3L702.3 260.6L700.1 259.9L697.8 259.2L695.5 258.6L693.7 258.1L691.8 257.7L689.8 257.2L687.6 256.8L685.8 256.4L683.9 256.1L681.8 255.7L680.0 255.5L677.8 255.2L676.0 255.1L674.0 255.0L672.4 254.9L670.3 254.9L668.6 255.0L666.8 255.1L664.7 255.3L662.8 255.5L660.7 255.9L659.0 256.2L656.8 256.6L654.9 257.1Z" fill="#2314ff"/>
<path d="M656.5 256.1L654.5 256.6L652.3 257.3L650.2 257.9L648.2 258.7L646.5 259.4L644.8 260.2L643.4 260.9L642.5 261.5L641.3 262.3L640.5 263.0L639.9 263.7L639.3 264.6L639.0 265.3L638.9 266.1L639.0 266.9L639.2 267.7L639.7 268.6L640.2 269.3L641.1 270.2L642.0 271.1L643.1 272.0L644.3 272.9L645.6 273.7L646.9 274.6L648.7 275.6L650.2 276.5L652.2 277.5L654.3 278.5L656.5 279.4L658.9 280.4L660.9 281.1L663.4 282.1L665.6 282.8L667.9 283.5L670.3 284.2L672.7 284.8L675.1 285.4L677.8 286.0L680.4 286.5L682.9 286.8L685.3 287.1L687.9 287.3L690.5 287.4L692.8 287.4L695.2 287.3L697.7 287.1L700.0 286.8L702.8 286.3L704.9 285.9L707.1 285.3L709.6 284.6L711.9 283.8L713.9 282.9L715.9 282.0L717.5 281.1L719.3 280.1L720.6 279.1L721.8 278.1L722.6 277.2L723.4 276.2L723.8 275.3L724.1 274.3L724.1 273.4L724.0 272.6L723.5 271.6L723.0 270.8L722.3 269.9L721.3 269.0L720.3 268.2L719.0 267.4L717.8 266.7L716.3 265.9L714.7 265.1L713.1 264.3L711.1 263.4L709.5 262.7L707.6 262.0L705.7 261.3L703.6 260.5L701.4 259.8L699.2 259.1L696.9 258.4L695.1 257.9L692.8 257.3L690.9 256.9L689.0 256.4L687.0 256.0L685.0 255.6L683.0 255.3L681.0 255.0L679.2 254.7L677.4 254.6L675.5 254.4L673.5 254.3L671.5 254.3L669.7 254.3L667.9 254.4L665.9 254.6L663.8 254.8L662.2 255.0L660.1 255.4L658.2 255.8Z" fill="#1a17ff"/>
<path d="M656.3 255.6L654.4 256.1L652.3 256.7L650.2 257.4L648.2 258.1L646.6 258.8L645.2 259.4L643.8 260.2L642.6 261.0L641.6 261.6L640.7 262.5L640.2 263.2L639.8 263.9L639.5 264.8L639.5 265.5L639.6 266.3L640.0 267.2L640.5 268.0L641.3 268.8L642.0 269.6L643.1 270.4L644.2 271.3L645.7 272.3L647.1 273.2L648.5 274.0L650.4 275.0L652.3 276.0L654.0 276.8L656.2 277.8L658.2 278.7L660.4 279.5L663.0 280.4L665.1 281.2L667.5 281.9L670.2 282.7L672.5 283.4L675.0 284.0L677.3 284.5L679.8 285.0L682.3 285.4L685.1 285.7L687.5 285.9L689.7 286.0L692.5 286.0L694.6 286.0L697.1 285.8L699.7 285.5L702.2 285.0L704.7 284.5L706.9 283.9L709.3 283.2L711.3 282.5L713.6 281.5L715.8 280.5L717.7 279.5L719.4 278.4L720.6 277.4L721.7 276.5L722.5 275.5L723.0 274.7L723.4 273.7L723.6 272.8L723.5 271.9L723.2 271.1L722.7 270.2L722.0 269.3L721.2 268.5L720.2 267.7L718.9 266.8L717.5 265.9L716.1 265.2L714.5 264.4L712.8 263.6L711.2 262.9L709.5 262.2L707.4 261.3L705.7 260.7L703.6 259.9L701.4 259.2L699.2 258.5L697.2 257.9L695.2 257.4L692.8 256.8L691.0 256.3L689.1 255.8L687.1 255.4L685.1 255.0L683.1 254.7L681.0 254.3L679.3 254.1L677.3 253.9L675.4 253.7L673.6 253.7L671.5 253.6L669.8 253.7L667.8 253.8L666.0 253.9L663.8 254.2L662.1 254.4L660.0 254.8L658.1 255.2Z" fill="#121aff"/>
<path d="M656.3 255.0L654.4 255.5L652.2 256.1L650.1 256.8L648.2 257.6L646.6 258.2L645.2 258.9L643.9 259.6L642.7 260.4L641.8 261.1L641.1 261.8L640.5 262.6L640.1 263.4L640.0 264.1L640.0 264.8L640.3 265.7L640.8 266.6L641.4 267.3L642.2 268.2L643.3 269.1L644.4 269.9L645.6 270.8L646.9 271.6L648.7 272.6L650.1 273.4L652.1 274.4L654.1 275.4L656.3 276.4L658.6 277.4L661.0 278.3L663.5 279.2L665.7 279.9L667.8 280.6L670.7 281.5L673.1 282.1L675.6 282.7L677.7 283.2L680.3 283.7L682.7 284.1L685.4 284.4L687.9 284.6L690.1 284.7L693.0 284.7L695.5 284.6L698.0 284.3L700.3 284.0L702.5 283.6L704.8 283.1L707.1 282.4L709.5 281.7L711.7 280.8L714.0 279.9L716.0 278.9L717.9 277.8L719.2 276.9L720.4 276.0L721.4 275.0L722.2 274.0L722.7 273.1L723.0 272.1L723.0 271.3L722.8 270.5L722.4 269.5L721.8 268.7L721.0 267.9L719.9 267.0L718.9 266.3L717.5 265.4L716.0 264.6L714.4 263.8L712.8 263.0L711.2 262.3L709.2 261.5L707.5 260.8L705.4 260.0L703.7 259.4L701.5 258.6L699.3 257.9L697.5 257.4L695.2 256.8L693.0 256.2L691.0 255.7L689.1 255.2L687.2 254.8L685.3 254.4L683.2 254.0L681.1 253.7L679.2 253.4L677.1 253.2L675.3 253.1L673.4 253.0L671.7 253.0L669.6 253.0L667.6 253.1L665.8 253.3L664.0 253.5L662.0 253.8L659.9 254.2L658.0 254.6Z" fill="#091dff"/>
<path d="M656.3 254.3L654.3 254.9L652.2 255.5L650.1 256.2L648.5 256.8L646.6 257.6L645.2 258.3L643.9 259.1L643.0 259.7L642.0 260.5L641.3 261.2L640.9 261.9L640.6 262.8L640.5 263.4L640.7 264.3L641.0 265.0L641.6 266.0L642.3 266.7L643.2 267.5L644.3 268.4L645.5 269.2L647.1 270.2L648.5 271.1L649.9 271.9L651.8 272.9L653.8 273.8L656.0 274.8L658.2 275.8L660.6 276.7L663.1 277.6L665.1 278.3L667.8 279.2L670.1 279.9L672.4 280.5L674.8 281.2L677.4 281.8L679.9 282.3L682.3 282.7L684.6 283.0L687.1 283.2L689.8 283.3L692.4 283.4L695.1 283.2L697.5 283.0L699.7 282.7L702.1 282.3L704.3 281.8L706.6 281.2L709.3 280.3L711.2 279.6L713.5 278.6L715.5 277.6L717.4 276.6L718.7 275.7L719.9 274.8L720.9 273.9L721.7 272.9L722.2 272.0L722.4 271.0L722.4 270.2L722.2 269.4L721.8 268.4L721.1 267.5L720.3 266.7L719.3 266.0L717.9 265.1L716.7 264.3L715.3 263.6L713.6 262.8L711.7 261.9L710.1 261.2L708.4 260.5L706.3 259.7L704.1 259.0L702.0 258.2L700.2 257.6L698.4 257.1L696.2 256.4L693.9 255.8L692.1 255.3L689.7 254.7L687.8 254.3L685.9 253.9L683.9 253.5L681.8 253.1L680.2 252.9L677.9 252.6L676.1 252.5L674.1 252.3L672.3 252.3L670.4 252.3L668.6 252.4L666.7 252.5L664.5 252.8L662.9 253.0L660.8 253.3L658.9 253.7L656.5 254.3Z" fill="#0120ff"/>
<path d="M656.6 253.6L654.7 254.2L652.5 254.8L650.5 255.5L648.9 256.1L647.0 256.9L645.5 257.6L644.3 258.3L643.3 259.0L642.4 259.7L641.7 260.5L641.3 261.1L641.1 262.0L641.0 262.7L641.2 263.5L641.7 264.4L642.2 265.1L643.1 266.0L644.2 266.8L645.3 267.7L646.6 268.5L647.9 269.3L649.7 270.3L651.2 271.1L653.1 272.1L655.2 273.0L657.4 274.0L659.7 274.9L662.1 275.8L664.1 276.5L666.7 277.4L668.9 278.1L671.5 278.9L674.1 279.6L676.6 280.2L678.6 280.7L681.3 281.2L683.6 281.5L686.3 281.8L688.6 282.0L691.5 282.0L693.6 282.0L696.2 281.8L698.6 281.5L701.3 281.1L703.6 280.6L705.8 280.0L708.3 279.2L710.2 278.5L712.5 277.6L714.6 276.6L716.5 275.6L717.9 274.7L719.3 273.7L720.3 272.8L721.1 271.9L721.7 270.9L721.9 270.0L721.9 269.1L721.7 268.3L721.3 267.4L720.7 266.7L719.8 265.8L718.7 265.0L717.5 264.2L716.2 263.4L714.6 262.6L713.0 261.9L711.0 261.0L709.3 260.3L707.6 259.6L705.5 258.8L703.4 258.1L701.2 257.3L699.0 256.6L696.7 256.0L694.5 255.3L692.6 254.8L690.3 254.2L688.4 253.8L686.5 253.4L684.5 253.0L682.5 252.6L680.4 252.3L678.6 252.0L676.4 251.8L674.5 251.7L672.8 251.6L670.7 251.6L668.9 251.7L667.0 251.8L664.9 252.0L663.2 252.3L661.2 252.6L659.2 253.0L656.9 253.6Z" fill="#0041ff"/>
<path d="M656.9 252.9L655.0 253.4L652.9 254.1L650.8 254.8L649.2 255.4L647.3 256.2L645.9 256.8L644.6 257.6L643.7 258.2L642.8 258.9L642.2 259.7L641.7 260.4L641.5 261.2L641.6 262.0L641.9 262.8L642.3 263.5L643.1 264.4L643.8 265.1L644.9 265.9L646.2 266.8L647.7 267.8L649.0 268.5L650.9 269.5L652.4 270.3L654.4 271.3L656.5 272.2L658.8 273.1L661.1 274.1L663.6 275.0L665.6 275.7L668.3 276.6L670.5 277.2L672.8 277.9L675.2 278.5L677.7 279.1L680.4 279.7L682.6 280.0L685.4 280.4L687.9 280.6L690.1 280.7L693.0 280.7L695.5 280.5L698.0 280.3L700.1 280.0L702.7 279.4L705.1 278.8L707.3 278.2L709.3 277.5L711.6 276.6L713.8 275.6L715.7 274.6L717.2 273.7L718.7 272.7L719.8 271.7L720.5 270.9L721.1 270.0L721.4 269.2L721.4 268.3L721.2 267.3L720.9 266.6L720.2 265.7L719.3 264.9L718.1 264.0L717.0 263.3L715.5 262.4L713.9 261.7L712.3 260.9L710.7 260.2L708.6 259.4L706.9 258.7L704.8 257.9L702.6 257.2L700.4 256.4L698.2 255.8L695.9 255.1L693.7 254.5L691.8 254.0L689.5 253.4L687.6 252.9L685.7 252.5L683.7 252.1L681.6 251.8L679.5 251.4L677.8 251.2L675.9 251.1L673.9 251.0L671.8 250.9L670.1 250.9L668.3 251.0L666.2 251.2L664.1 251.5L662.0 251.8L660.0 252.2L658.1 252.6Z" fill="#0066ff"/>
<path d="M657.5 252.1L655.3 252.7L653.2 253.3L651.1 254.0L649.5 254.6L647.6 255.4L646.2 256.1L644.9 256.8L644.0 257.4L643.2 258.1L642.6 258.9L642.1 259.7L642.0 260.4L642.1 261.2L642.4 262.0L642.9 262.7L643.7 263.6L644.7 264.4L645.9 265.2L647.1 266.0L648.5 266.8L650.2 267.8L651.7 268.6L653.7 269.5L655.7 270.5L657.9 271.4L660.2 272.3L662.6 273.2L664.7 274.0L667.1 274.8L669.3 275.5L672.1 276.3L674.4 277.0L676.9 277.6L679.5 278.2L681.6 278.6L684.6 279.0L687.1 279.2L689.4 279.4L691.7 279.4L694.3 279.3L696.7 279.1L699.1 278.8L701.6 278.3L704.1 277.7L706.3 277.1L708.4 276.4L710.7 275.5L712.9 274.6L714.9 273.6L716.7 272.6L718.0 271.7L719.1 270.8L720.0 269.8L720.5 269.1L720.9 268.1L720.9 267.2L720.8 266.5L720.3 265.5L719.6 264.6L718.7 263.9L717.8 263.2L716.4 262.3L714.8 261.5L713.3 260.7L711.6 260.0L710.0 259.3L707.9 258.4L706.1 257.8L704.0 257.0L701.8 256.3L699.6 255.5L697.4 254.9L695.1 254.2L692.9 253.6L691.0 253.1L688.7 252.5L686.8 252.1L684.8 251.7L682.9 251.3L680.8 250.9L679.0 250.7L676.8 250.4L674.9 250.3L673.0 250.2L671.3 250.2L669.3 250.3L667.4 250.4L665.4 250.6L663.4 250.9L661.4 251.2L659.4 251.6L657.5 252.1Z" fill="#0082ff"/>
<path d="M658.1 251.3L656.1 251.8L653.9 252.4L651.8 253.1L649.8 253.8L648.3 254.5L646.8 255.1L645.5 255.9L644.5 256.5L643.5 257.3L642.9 258.1L642.6 258.7L642.5 259.6L642.6 260.3L643.0 261.1L643.5 261.8L644.3 262.7L645.4 263.5L646.6 264.3L647.8 265.1L649.2 265.9L651.0 266.8L652.5 267.6L654.5 268.5L656.6 269.5L658.8 270.4L661.1 271.3L663.5 272.2L665.5 272.9L668.1 273.8L670.3 274.5L673.1 275.3L675.5 275.9L678.0 276.5L680.4 277.0L682.8 277.4L685.1 277.7L687.6 278.0L690.3 278.1L692.8 278.0L695.4 277.9L697.7 277.6L700.1 277.3L702.4 276.8L704.8 276.2L707.0 275.5L709.4 274.7L711.6 273.8L713.7 272.8L715.6 271.8L716.9 270.9L718.2 270.0L719.1 269.2L719.9 268.2L720.3 267.4L720.5 266.5L720.4 265.6L720.0 264.7L719.3 263.9L718.5 263.1L717.5 262.3L716.1 261.5L714.6 260.7L713.0 259.9L711.3 259.2L709.7 258.5L707.6 257.6L705.8 257.0L703.7 256.2L701.5 255.5L699.3 254.8L697.1 254.1L694.8 253.5L692.5 252.8L690.7 252.3L688.4 251.8L686.5 251.3L684.5 250.9L682.5 250.5L680.4 250.2L678.6 249.9L676.4 249.7L674.5 249.6L672.7 249.5L670.7 249.5L669.0 249.6L666.9 249.7L664.8 250.0L662.9 250.3L661.0 250.6L658.8 251.1Z" fill="#0097ff"/>
<path d="M658.8 250.4L657.3 250.8L655.5 251.3L653.8 251.8L652.1 252.3L650.5 252.9L649.3 253.4L647.8 254.0L646.8 254.5L645.8 255.1L644.9 255.7L644.2 256.2L643.7 256.8L643.3 257.3L643.0 257.9L642.9 258.5L643.0 259.2L643.2 259.8L643.7 260.5L644.1 261.0L644.8 261.6L645.7 262.3L646.6 263.0L647.6 263.6L648.9 264.4L650.0 264.9L651.4 265.7L652.6 266.3L654.1 267.0L655.8 267.7L657.5 268.5L659.2 269.2L661.1 269.9L663.0 270.7L664.9 271.4L666.5 271.9L668.6 272.6L670.7 273.2L672.4 273.7L674.2 274.2L676.5 274.9L678.4 275.3L680.4 275.7L682.5 276.1L684.2 276.3L686.4 276.5L688.1 276.7L690.3 276.8L692.3 276.7L694.2 276.7L696.5 276.5L698.0 276.3L700.1 276.0L702.0 275.6L703.8 275.1L706.0 274.5L707.5 274.0L709.4 273.3L711.2 272.5L712.9 271.8L714.5 271.0L715.9 270.2L716.9 269.6L718.0 268.7L718.7 268.0L719.3 267.3L719.7 266.7L719.9 266.0L720.0 265.4L719.9 264.6L719.6 263.9L719.2 263.3L718.6 262.6L717.9 262.0L716.9 261.3L715.8 260.7L714.7 260.0L713.5 259.5L712.3 258.9L710.7 258.2L709.4 257.7L707.7 257.0L706.4 256.5L704.7 255.9L702.9 255.3L701.2 254.7L699.4 254.2L697.7 253.6L695.9 253.1L694.0 252.6L692.2 252.1L690.8 251.7L689.0 251.2L687.4 250.9L685.7 250.5L684.2 250.2L682.7 249.9L681.0 249.6L679.5 249.3L677.9 249.1L676.0 249.0L674.7 248.9L673.2 248.8L671.6 248.8L670.1 248.8L668.4 248.9L666.9 249.0L665.2 249.2L663.6 249.5L662.0 249.7L660.5 250.0L658.8 250.4Z" fill="#00acff"/>
<path d="M659.6 249.5L658.0 249.9L656.3 250.4L654.5 250.9L652.8 251.4L651.2 252.0L649.6 252.6L648.5 253.1L647.4 253.6L646.4 254.1L645.5 254.7L644.7 255.3L644.2 255.8L643.7 256.5L643.5 257.1L643.4 257.7L643.5 258.2L643.7 258.9L644.1 259.4L644.6 260.0L645.3 260.7L646.1 261.3L647.2 262.0L648.3 262.7L649.3 263.2L650.7 264.0L652.0 264.7L653.3 265.3L654.9 266.0L656.6 266.8L658.3 267.5L660.1 268.2L662.0 268.9L663.9 269.6L665.9 270.3L667.4 270.9L669.5 271.5L671.7 272.2L673.4 272.7L675.1 273.2L677.6 273.8L679.5 274.2L681.6 274.6L683.3 274.9L685.3 275.1L687.4 275.3L689.6 275.4L691.5 275.5L693.5 275.4L695.2 275.3L697.5 275.0L699.0 274.8L701.0 274.5L702.8 274.0L705.0 273.4L706.6 272.9L708.6 272.3L710.4 271.5L711.7 271.0L712.9 270.4L714.4 269.6L715.8 268.8L716.8 268.2L717.7 267.4L718.5 266.7L719.0 266.1L719.3 265.3L719.5 264.6L719.5 263.9L719.3 263.3L718.9 262.6L718.4 262.0L717.8 261.4L717.0 260.7L715.9 260.1L714.8 259.4L713.7 258.8L712.5 258.3L710.8 257.6L709.5 257.0L707.8 256.4L706.6 255.9L704.8 255.3L703.1 254.7L701.3 254.1L699.6 253.5L697.8 253.0L696.0 252.4L694.2 251.9L692.4 251.4L690.5 250.9L689.1 250.6L687.3 250.1L685.8 249.8L684.1 249.4L682.4 249.1L680.8 248.8L679.2 248.6L677.7 248.4L676.3 248.3L674.6 248.1L672.9 248.1L671.4 248.1L669.9 248.1L668.5 248.2L666.7 248.3L665.3 248.5L663.9 248.7L662.1 249.0L660.4 249.4Z" fill="#00c0ff"/>
<path d="M660.4 248.7L658.8 249.0L657.0 249.5L655.2 250.0L653.5 250.5L651.9 251.0L650.3 251.6L649.1 252.1L647.7 252.7L646.7 253.3L645.9 253.8L645.2 254.3L644.5 255.0L644.2 255.5L643.9 256.0L643.8 256.7L644.0 257.3L644.2 257.8L644.6 258.5L645.2 259.2L646.0 259.8L646.8 260.4L647.7 261.0L649.0 261.7L650.0 262.3L651.5 263.0L652.6 263.6L654.1 264.3L655.8 265.1L657.4 265.8L659.2 266.5L661.0 267.2L662.9 267.9L664.8 268.6L666.8 269.3L668.4 269.8L670.5 270.5L672.7 271.2L674.4 271.6L676.2 272.1L678.4 272.6L680.5 273.1L682.3 273.4L684.2 273.7L686.6 274.0L688.3 274.1L690.1 274.1L692.1 274.1L694.4 274.0L696.3 273.9L698.4 273.6L700.1 273.3L702.0 272.9L704.1 272.4L705.7 271.9L707.7 271.2L709.1 270.7L710.9 270.0L712.5 269.2L713.7 268.6L715.1 267.8L716.2 267.1L717.2 266.3L718.0 265.7L718.5 264.9L718.9 264.3L719.1 263.6L719.1 263.0L718.9 262.4L718.6 261.7L718.0 261.0L717.3 260.4L716.4 259.7L715.4 259.1L714.3 258.5L713.0 257.8L711.8 257.3L710.6 256.7L708.9 256.1L707.5 255.6L705.9 254.9L704.1 254.3L702.4 253.7L701.0 253.3L699.3 252.7L697.5 252.2L696.0 251.7L694.3 251.3L692.5 250.7L690.7 250.3L689.3 249.9L687.4 249.5L686.0 249.1L684.1 248.7L682.6 248.4L681.1 248.1L679.4 247.9L677.8 247.7L676.2 247.5L674.6 247.4L673.2 247.4L671.7 247.3L670.1 247.4L668.3 247.5L667.0 247.6L665.3 247.8L663.7 248.0L662.1 248.3L660.4 248.7Z" fill="#00d4ff"/>
<path d="M657.2 248.7L655.5 249.2L653.8 249.7L652.6 250.1L651.0 250.7L649.4 251.3L648.3 251.8L647.3 252.3L646.4 252.9L645.6 253.5L645.1 254.0L644.6 254.6L644.4 255.2L644.3 255.7L644.4 256.3L644.7 257.0L645.1 257.5L645.6 258.1L646.3 258.7L647.4 259.5L648.4 260.1L649.4 260.6L650.7 261.4L651.8 261.9L653.4 262.6L654.9 263.4L656.6 264.1L658.3 264.8L659.6 265.3L661.2 266.0L662.8 266.6L664.7 267.3L666.7 267.9L668.8 268.6L670.3 269.1L672.5 269.8L674.2 270.3L676.6 270.9L678.4 271.3L680.4 271.8L682.4 272.1L684.5 272.4L686.2 272.6L688.4 272.8L690.6 272.9L692.5 272.8L694.3 272.8L696.4 272.6L698.1 272.3L700.1 272.0L702.0 271.6L703.7 271.2L705.8 270.5L707.3 270.0L709.2 269.3L710.9 268.6L712.6 267.8L713.9 267.2L715.1 266.5L716.1 265.8L717.1 265.0L717.8 264.3L718.2 263.6L718.5 263.0L718.6 262.3L718.5 261.6L718.2 260.9L717.8 260.3L717.3 259.8L716.4 259.1L715.4 258.4L714.3 257.8L713.2 257.2L712.0 256.6L710.7 256.1L709.0 255.4L707.7 254.9L706.0 254.3L704.3 253.7L702.5 253.1L701.2 252.6L699.4 252.1L697.7 251.5L695.9 251.0L694.2 250.5L692.7 250.1L690.9 249.6L689.0 249.1L687.6 248.8L685.7 248.3L684.3 248.0L682.8 247.7L680.9 247.4L679.4 247.2L678.0 247.0L676.2 246.8L674.8 246.7L673.0 246.6L671.4 246.6L670.0 246.6L668.5 246.7L666.8 246.9L665.1 247.1L663.5 247.3L661.9 247.6L660.5 247.9L658.6 248.3L657.2 248.7Z" fill="#00e8ff"/>
<path d="M658.6 247.6L657.1 248.0L655.4 248.5L653.7 249.0L652.0 249.6L650.8 250.0L649.3 250.7L648.3 251.2L647.3 251.7L646.4 252.3L645.8 252.7L645.2 253.4L644.9 253.9L644.8 254.5L644.8 255.2L644.9 255.6L645.4 256.3L645.9 256.9L646.5 257.5L647.5 258.2L648.4 258.8L649.4 259.3L650.8 260.1L651.8 260.6L653.3 261.3L654.9 262.0L656.5 262.8L657.8 263.3L659.5 264.0L661.3 264.7L663.2 265.4L664.6 265.9L666.6 266.6L668.6 267.3L670.8 267.9L672.4 268.4L674.6 269.1L676.4 269.5L678.2 270.0L680.1 270.4L682.2 270.8L684.3 271.1L686.5 271.3L688.4 271.5L690.3 271.6L692.3 271.5L694.6 271.4L696.2 271.3L698.4 271.0L700.4 270.6L702.2 270.2L703.9 269.8L705.9 269.2L707.4 268.6L709.3 267.9L711.0 267.2L712.6 266.5L714.0 265.7L715.1 265.1L716.0 264.4L717.0 263.6L717.5 263.0L717.9 262.4L718.2 261.6L718.2 261.0L718.0 260.4L717.7 259.7L717.0 259.0L716.5 258.5L715.5 257.8L714.5 257.1L713.3 256.5L712.1 256.0L710.9 255.4L709.2 254.7L707.9 254.3L706.2 253.6L704.4 253.0L703.1 252.5L701.4 252.0L699.6 251.4L697.8 250.8L696.0 250.3L694.2 249.8L692.6 249.3L691.0 248.9L689.2 248.4L687.5 248.0L685.9 247.7L684.4 247.3L682.5 246.9L681.0 246.7L679.4 246.4L677.7 246.2L676.4 246.1L674.5 245.9L673.1 245.9L671.6 245.9L669.9 245.9L668.3 246.0L666.8 246.1L665.4 246.3L663.8 246.5L661.9 246.9L660.3 247.2L658.6 247.6Z" fill="#00f0f2"/>
<path d="M659.8 246.6L658.3 247.0L656.5 247.5L654.8 248.0L653.1 248.5L651.5 249.1L650.3 249.5L649.2 250.0L648.0 250.6L647.2 251.1L646.4 251.7L645.8 252.3L645.4 252.9L645.2 253.4L645.2 254.1L645.3 254.6L645.7 255.2L646.1 255.7L646.8 256.3L647.7 257.0L648.7 257.7L649.7 258.2L651.1 258.9L652.2 259.5L653.7 260.2L655.3 260.9L656.5 261.4L658.2 262.1L659.9 262.8L661.7 263.5L663.6 264.2L665.5 264.9L667.0 265.4L669.0 266.1L671.1 266.7L672.8 267.2L675.0 267.9L676.8 268.3L678.6 268.8L680.7 269.2L682.6 269.6L684.8 269.9L687.0 270.1L688.9 270.2L690.8 270.3L692.9 270.2L695.0 270.1L696.7 269.9L698.7 269.6L700.6 269.3L702.4 268.9L704.6 268.3L706.1 267.8L708.0 267.1L709.8 266.4L711.4 265.7L713.0 264.9L714.3 264.1L715.3 263.5L716.2 262.9L716.9 262.2L717.4 261.5L717.7 260.8L717.8 260.1L717.7 259.5L717.4 258.9L716.8 258.2L716.2 257.6L715.3 256.9L714.2 256.3L713.1 255.7L711.9 255.1L710.7 254.6L709.0 253.9L707.7 253.4L705.9 252.8L704.3 252.2L702.9 251.7L701.1 251.1L699.3 250.6L697.5 250.0L695.7 249.5L693.9 249.0L692.1 248.5L690.7 248.1L688.9 247.6L687.0 247.2L685.6 246.9L683.7 246.4L682.2 246.2L680.7 245.9L679.0 245.6L677.3 245.4L675.9 245.3L674.2 245.2L672.7 245.1L671.1 245.1L669.4 245.2L668.1 245.3L666.3 245.5L664.6 245.7L663.0 245.9L661.6 246.2L659.8 246.6Z" fill="#00f0dd"/>
<path d="M660.8 245.6L659.0 246.1L657.2 246.5L655.5 247.0L653.8 247.6L652.2 248.1L651.0 248.6L649.5 249.2L648.5 249.7L647.5 250.3L646.8 250.8L646.3 251.3L645.9 251.8L645.7 252.4L645.6 253.0L645.8 253.7L646.1 254.1L646.7 254.8L647.4 255.4L648.2 256.0L649.1 256.5L650.4 257.3L651.5 257.8L652.9 258.5L654.5 259.2L655.7 259.8L657.3 260.5L659.0 261.2L660.8 261.8L662.6 262.5L664.5 263.2L666.4 263.9L668.0 264.4L670.0 265.1L672.1 265.7L673.7 266.2L676.0 266.8L677.8 267.3L679.6 267.7L681.6 268.1L683.7 268.4L686.0 268.7L687.7 268.9L689.9 269.0L691.9 269.0L693.7 268.9L696.1 268.7L697.6 268.5L699.6 268.2L701.4 267.8L703.7 267.2L705.2 266.7L707.2 266.1L709.0 265.4L710.7 264.7L712.3 263.9L713.7 263.1L714.7 262.5L715.7 261.8L716.5 261.1L716.9 260.5L717.2 259.8L717.3 259.2L717.2 258.5L716.9 257.9L716.5 257.3L715.6 256.5L715.0 256.0L714.0 255.4L712.8 254.8L711.4 254.2L710.0 253.6L708.7 253.1L707.0 252.4L705.2 251.8L703.9 251.3L702.2 250.8L700.4 250.2L698.6 249.6L696.8 249.1L695.0 248.6L693.2 248.0L691.4 247.6L689.7 247.1L688.1 246.7L686.3 246.3L684.8 246.0L682.9 245.5L681.4 245.3L679.8 245.0L678.2 244.8L676.6 244.6L675.1 244.5L673.6 244.4L671.9 244.4L670.4 244.4L668.8 244.5L667.2 244.6L665.5 244.8L663.9 245.1L662.3 245.3L660.8 245.6Z" fill="#00f0c8"/>
<path d="M656.2 246.1L655.3 246.3L653.7 246.9L652.0 247.4L650.9 247.9L649.4 248.5L648.4 249.1L647.6 249.6L647.0 250.1L646.4 250.7L646.1 251.3L646.1 251.9L646.1 252.4L646.4 252.9L646.8 253.5L647.5 254.1L648.2 254.7L649.1 255.3L650.4 256.0L651.4 256.5L652.9 257.2L654.2 257.8L655.6 258.5L657.2 259.1L658.9 259.8L660.7 260.5L662.5 261.2L664.4 261.9L666.3 262.5L668.3 263.2L669.8 263.7L671.9 264.3L674.1 265.0L675.8 265.5L677.8 266.0L680.0 266.5L682.0 266.9L684.0 267.2L685.7 267.4L688.1 267.6L690.0 267.7L692.0 267.7L694.0 267.6L695.7 267.5L697.8 267.2L699.8 266.8L701.6 266.4L703.3 266.0L705.4 265.4L706.8 264.9L708.6 264.2L710.3 263.5L711.7 262.8L713.0 262.2L714.3 261.4L715.2 260.7L715.9 260.1L716.5 259.4L716.8 258.8L716.9 258.1L716.8 257.5L716.5 256.9L715.9 256.2L715.4 255.7L714.4 255.0L713.4 254.4L712.2 253.8L711.0 253.2L709.4 252.6L708.0 252.1L706.3 251.4L705.0 251.0L703.2 250.4L701.5 249.8L699.7 249.2L697.9 248.7L696.1 248.1L694.3 247.6L692.5 247.1L690.6 246.6L688.8 246.1L687.4 245.8L685.5 245.4L684.1 245.0L682.1 244.6L680.6 244.4L679.0 244.1L677.3 243.9L676.1 243.8L674.1 243.7L672.6 243.6L671.0 243.6L669.4 243.7L668.1 243.8L666.3 243.9L664.7 244.2L663.1 244.4L661.6 244.7L659.8 245.1L657.9 245.6L656.2 246.1Z" fill="#00f0b3"/>
<path d="M659.1 244.6L657.3 245.0L655.6 245.5L653.9 246.1L652.7 246.5L651.1 247.1L650.0 247.5L649.0 248.1L648.1 248.6L647.3 249.2L646.9 249.7L646.6 250.2L646.5 250.8L646.6 251.4L646.8 252.0L647.4 252.6L648.1 253.2L648.9 253.8L649.8 254.3L650.8 254.9L652.1 255.6L653.6 256.3L654.8 256.8L656.4 257.5L658.0 258.2L659.7 258.8L661.5 259.5L663.3 260.2L665.2 260.9L667.2 261.5L669.2 262.2L671.2 262.8L672.8 263.3L675.0 263.9L676.8 264.4L678.7 264.9L681.1 265.4L683.0 265.7L684.6 266.0L687.0 266.2L688.7 266.3L690.8 266.4L692.7 266.4L695.0 266.2L696.7 266.0L698.8 265.7L700.7 265.3L702.4 264.9L704.5 264.3L706.0 263.8L707.9 263.2L709.6 262.5L711.2 261.7L712.4 261.1L713.7 260.4L714.6 259.8L715.3 259.2L715.9 258.5L716.3 257.7L716.4 257.2L716.4 256.5L716.1 255.9L715.6 255.3L714.8 254.6L713.9 254.0L713.0 253.4L711.6 252.8L710.4 252.2L709.1 251.7L707.4 251.0L706.1 250.6L704.3 250.0L702.5 249.4L700.8 248.8L699.4 248.4L697.6 247.8L695.8 247.3L694.0 246.8L692.6 246.4L690.8 245.9L689.0 245.4L687.1 245.0L685.7 244.7L683.8 244.2L682.3 243.9L680.8 243.7L679.2 243.4L677.5 243.2L675.7 243.0L674.4 242.9L672.8 242.9L671.2 242.9L669.6 242.9L667.9 243.0L666.2 243.2L664.6 243.4L662.9 243.7L661.4 244.0L659.6 244.4Z" fill="#00f09e"/>
<path d="M660.5 243.5L658.9 243.9L657.2 244.3L655.4 244.8L653.8 245.4L652.6 245.8L651.0 246.4L650.0 246.9L649.0 247.4L648.1 248.0L647.6 248.4L647.1 249.1L646.9 249.6L647.0 250.2L647.1 250.7L647.5 251.3L648.2 251.9L648.9 252.5L649.8 253.0L650.8 253.6L652.1 254.3L653.2 254.8L654.7 255.5L656.3 256.2L658.0 256.8L659.2 257.4L661.0 258.0L662.8 258.7L664.6 259.4L666.1 259.8L668.0 260.5L670.1 261.2L672.1 261.8L673.8 262.3L676.0 262.9L677.7 263.3L679.7 263.8L681.9 264.2L683.7 264.5L685.8 264.8L688.0 265.0L690.1 265.1L692.1 265.1L693.9 265.0L695.7 264.9L697.7 264.6L699.7 264.3L701.5 263.9L703.6 263.3L705.2 262.8L707.1 262.1L708.8 261.4L710.5 260.7L712.0 260.0L713.0 259.4L714.2 258.6L715.0 258.0L715.6 257.3L715.8 256.8L716.0 256.0L715.9 255.5L715.6 254.8L715.1 254.2L714.5 253.7L713.6 253.1L712.5 252.5L711.3 251.9L710.0 251.3L708.4 250.7L707.1 250.2L705.4 249.6L703.6 249.0L702.0 248.4L700.5 248.0L698.7 247.4L696.9 246.9L695.1 246.3L693.3 245.8L691.5 245.3L690.1 245.0L688.2 244.5L686.4 244.1L685.0 243.7L683.0 243.3L681.5 243.0L680.0 242.8L678.3 242.5L676.6 242.3L675.2 242.2L673.3 242.1L671.8 242.1L670.2 242.1L668.8 242.2L667.0 242.4L665.3 242.6L663.7 242.8L662.2 243.1L660.5 243.5Z" fill="#00f088"/>
<path d="M661.7 242.5L660.1 242.8L658.3 243.3L656.6 243.7L654.9 244.3L653.2 244.8L652.1 245.2L650.6 245.9L649.6 246.4L648.8 246.9L648.2 247.4L647.7 247.9L647.4 248.5L647.4 249.1L647.5 249.5L647.9 250.2L648.5 250.8L649.3 251.4L650.1 251.9L651.1 252.5L652.5 253.2L653.6 253.7L655.1 254.4L656.7 255.0L657.9 255.5L659.6 256.2L661.3 256.9L663.1 257.5L665.0 258.2L666.9 258.8L668.4 259.3L670.4 260.0L672.5 260.6L674.4 261.1L676.4 261.7L678.1 262.1L680.6 262.7L682.6 263.1L684.4 263.3L686.3 263.6L688.5 263.7L690.6 263.8L692.6 263.8L694.3 263.7L696.5 263.5L698.1 263.2L700.0 262.9L702.2 262.4L703.8 261.9L705.8 261.3L707.6 260.6L709.3 259.9L710.9 259.2L712.3 258.4L713.3 257.9L714.2 257.3L714.8 256.6L715.3 255.9L715.5 255.2L715.5 254.6L715.3 254.0L714.8 253.4L714.2 252.9L713.3 252.2L712.3 251.6L711.1 251.0L709.9 250.5L708.2 249.8L706.9 249.3L705.1 248.7L703.4 248.1L702.0 247.7L700.2 247.1L698.4 246.6L696.6 246.0L694.8 245.5L693.0 245.0L691.2 244.5L689.4 244.0L688.0 243.7L686.1 243.2L684.7 242.9L682.7 242.5L681.2 242.2L679.7 241.9L678.0 241.7L676.3 241.5L674.8 241.4L672.9 241.3L671.3 241.3L669.9 241.4L668.4 241.5L666.7 241.6L665.1 241.8L663.5 242.1L661.7 242.5Z" fill="#02ee71"/>
<path d="M662.6 241.5L660.9 241.9L659.0 242.3L657.3 242.8L655.6 243.3L653.9 243.8L652.3 244.4L651.2 244.9L650.2 245.4L649.3 245.9L648.6 246.5L648.1 247.0L647.9 247.5L647.8 248.1L648.0 248.7L648.3 249.2L648.9 249.7L649.6 250.3L650.6 250.9L651.8 251.5L652.8 252.1L654.3 252.7L655.8 253.4L657.0 253.9L658.7 254.6L660.4 255.2L662.2 255.9L664.0 256.5L665.9 257.2L667.8 257.8L669.8 258.5L671.3 258.9L673.4 259.6L675.6 260.2L677.3 260.6L679.1 261.1L681.5 261.5L683.4 261.9L685.2 262.1L687.5 262.4L689.3 262.5L691.2 262.5L693.4 262.5L695.4 262.3L697.5 262.0L699.3 261.7L701.3 261.3L702.9 260.8L705.0 260.2L706.4 259.7L708.1 259.1L709.8 258.4L710.9 257.8L712.3 257.1L713.3 256.5L714.0 255.9L714.7 255.2L715.0 254.5L715.1 254.0L715.0 253.4L714.7 252.8L714.0 252.0L713.4 251.5L712.4 250.9L711.3 250.3L710.1 249.8L708.4 249.1L707.1 248.6L705.3 248.0L704.0 247.5L702.2 247.0L700.4 246.4L698.6 245.8L696.8 245.3L695.0 244.8L693.2 244.3L691.4 243.8L689.5 243.3L687.8 242.9L686.3 242.5L684.4 242.1L682.9 241.8L681.2 241.4L679.4 241.1L677.8 240.9L676.5 240.8L674.6 240.6L673.2 240.6L671.7 240.5L669.9 240.6L668.3 240.7L666.5 240.9L664.8 241.1L663.3 241.4Z" fill="#05eb57"/>
<path d="M660.0 241.3L658.4 241.7L656.7 242.2L655.0 242.7L653.8 243.1L652.2 243.7L651.1 244.2L650.2 244.7L649.3 245.3L648.8 245.7L648.4 246.3L648.3 246.8L648.3 247.3L648.7 248.0L649.1 248.4L649.7 249.0L650.6 249.6L651.8 250.3L652.8 250.8L654.2 251.4L655.4 251.9L657.0 252.6L658.6 253.2L660.3 253.9L662.1 254.5L663.9 255.2L665.7 255.8L667.7 256.5L669.7 257.1L671.7 257.7L673.3 258.2L675.4 258.8L677.1 259.3L679.5 259.8L681.4 260.2L683.4 260.6L685.6 260.9L687.2 261.1L689.5 261.2L691.6 261.2L693.4 261.2L695.4 261.0L697.2 260.8L699.2 260.4L700.9 260.1L703.1 259.5L704.6 259.0L706.5 258.4L708.2 257.7L709.9 257.0L711.0 256.5L712.3 255.7L713.2 255.1L713.9 254.5L714.4 253.8L714.6 253.2L714.6 252.5L714.4 251.9L714.0 251.4L713.3 250.8L712.5 250.2L711.4 249.6L710.2 249.1L708.6 248.4L707.3 247.9L705.5 247.3L704.2 246.8L702.4 246.2L700.6 245.7L698.8 245.1L697.0 244.6L695.2 244.1L693.4 243.6L691.6 243.1L689.7 242.6L687.9 242.1L686.3 241.8L684.6 241.4L682.8 241.0L681.2 240.7L679.6 240.4L678.0 240.2L676.2 240.0L674.9 239.9L673.0 239.8L671.4 239.8L669.9 239.8L668.2 239.9L666.8 240.1L665.1 240.3L663.5 240.6L661.6 240.9L660.0 241.3Z" fill="#08e83d"/>
<path d="M661.5 240.2L660.0 240.5L658.2 241.0L656.5 241.5L654.8 242.0L653.6 242.4L652.1 243.0L651.1 243.5L650.2 244.0L649.5 244.5L649.0 245.1L648.8 245.6L648.7 246.2L648.9 246.7L649.4 247.3L649.9 247.8L650.7 248.4L651.8 249.0L652.8 249.5L654.2 250.1L655.3 250.6L656.9 251.3L658.5 251.9L660.2 252.6L662.0 253.2L663.3 253.7L664.7 254.2L666.6 254.8L668.5 255.5L670.5 256.1L672.6 256.7L674.2 257.2L676.4 257.8L678.2 258.2L680.5 258.8L682.5 259.1L684.6 259.5L686.3 259.7L688.5 259.9L690.4 259.9L692.4 259.9L694.5 259.8L696.2 259.6L698.1 259.3L700.0 259.0L702.2 258.4L703.8 258.0L705.7 257.3L707.5 256.7L709.1 256.0L710.6 255.3L711.7 254.7L712.7 254.0L713.5 253.4L713.9 252.9L714.2 252.1L714.2 251.6L714.0 251.0L713.5 250.3L712.8 249.8L711.9 249.1L710.8 248.6L709.6 248.0L708.3 247.5L706.6 246.9L705.3 246.4L703.5 245.8L701.7 245.2L700.1 244.7L698.6 244.3L696.8 243.7L694.9 243.2L693.1 242.7L691.3 242.2L689.9 241.9L688.1 241.4L686.2 240.9L684.8 240.6L682.9 240.2L681.4 239.9L679.8 239.6L678.1 239.4L676.5 239.2L674.5 239.0L673.1 239.0L671.5 239.0L669.7 239.0L668.3 239.1L666.5 239.3L664.9 239.5L663.4 239.8L661.5 240.2Z" fill="#0ce424"/>
<path d="M662.6 239.2L661.2 239.5L659.9 239.8L658.5 240.2L657.2 240.5L655.9 240.9L654.7 241.3L653.7 241.6L652.8 242.0L651.9 242.4L651.1 242.8L650.5 243.2L650.0 243.6L649.6 244.0L649.4 244.3L649.2 244.8L649.2 245.1L649.3 245.5L649.6 246.0L650.0 246.4L650.4 246.8L650.9 247.1L651.8 247.7L652.4 248.0L653.5 248.5L654.3 248.9L655.3 249.3L656.5 249.8L657.7 250.3L658.9 250.8L659.7 251.1L661.0 251.6L662.3 252.1L663.7 252.5L665.1 253.0L666.5 253.5L667.9 254.0L668.9 254.3L670.4 254.7L671.9 255.2L673.5 255.7L675.1 256.1L676.2 256.4L677.9 256.8L679.2 257.2L680.9 257.5L682.2 257.8L683.8 258.0L685.4 258.3L686.9 258.4L688.2 258.5L690.0 258.6L691.4 258.6L693.1 258.6L694.3 258.5L695.6 258.4L697.2 258.2L699.0 257.9L700.2 257.6L701.5 257.3L702.9 256.9L704.4 256.4L705.8 256.0L707.1 255.5L708.4 255.0L709.6 254.5L710.6 253.9L711.3 253.6L712.2 253.0L712.7 252.6L713.2 252.1L713.5 251.6L713.7 251.2L713.8 250.7L713.6 250.2L713.4 249.8L713.1 249.4L712.6 248.9L711.9 248.5L711.2 248.1L710.5 247.7L709.3 247.1L708.5 246.8L707.2 246.3L706.4 246.0L705.0 245.5L703.7 245.1L702.4 244.6L701.5 244.4L700.1 243.9L698.8 243.5L697.4 243.1L696.0 242.7L694.7 242.4L693.3 242.0L691.9 241.6L690.6 241.3L689.2 240.9L688.2 240.7L686.8 240.3L685.4 240.0L684.0 239.7L683.1 239.5L681.6 239.2L680.6 239.0L679.1 238.8L677.9 238.6L676.7 238.4L675.5 238.3L674.1 238.2L673.1 238.2L671.9 238.2L670.7 238.2L669.3 238.3L668.1 238.4L666.9 238.5L665.8 238.6L664.7 238.8L663.2 239.1Z" fill="#0fe10a"/>
<path d="M663.5 238.2L662.5 238.4L661.1 238.7L659.7 239.1L658.4 239.4L657.1 239.8L655.8 240.2L654.6 240.6L653.5 241.0L652.7 241.3L652.0 241.6L651.2 242.1L650.6 242.5L650.2 242.8L649.9 243.2L649.7 243.7L649.7 244.0L649.7 244.4L650.0 244.9L650.3 245.3L650.8 245.7L651.3 246.0L652.1 246.6L652.8 246.9L653.8 247.4L654.5 247.7L655.6 248.2L656.8 248.7L658.0 249.2L658.8 249.5L660.1 250.0L661.4 250.4L662.7 250.9L664.1 251.4L665.4 251.8L666.8 252.3L668.3 252.8L669.8 253.2L671.3 253.7L672.3 254.0L673.9 254.5L675.5 254.9L676.9 255.3L678.3 255.6L680.1 256.0L681.3 256.3L682.6 256.5L684.5 256.8L686.1 257.0L687.4 257.2L688.7 257.3L690.5 257.3L691.8 257.3L693.6 257.2L695.1 257.1L696.5 257.0L698.0 256.7L699.2 256.5L700.5 256.2L702.0 255.8L703.6 255.4L704.5 255.1L705.9 254.6L707.2 254.1L708.4 253.6L709.2 253.3L710.3 252.7L711.3 252.2L711.8 251.8L712.4 251.4L712.8 250.9L713.1 250.4L713.3 250.0L713.3 249.5L713.1 249.0L712.8 248.6L712.5 248.2L712.0 247.8L711.3 247.4L710.4 246.9L709.5 246.4L708.7 246.1L707.4 245.6L706.6 245.3L705.2 244.8L703.9 244.3L703.0 244.1L701.7 243.6L700.3 243.2L699.0 242.8L697.6 242.4L696.2 242.0L694.9 241.6L693.5 241.2L692.1 240.9L690.7 240.5L689.4 240.2L688.0 239.8L687.0 239.6L685.6 239.3L684.2 238.9L682.9 238.7L681.8 238.4L680.3 238.2L679.2 238.0L678.1 237.8L677.0 237.7L675.7 237.6L674.4 237.5L673.0 237.4L671.9 237.4L670.5 237.4L669.5 237.5L668.4 237.5L667.2 237.7L665.6 237.9L664.5 238.1Z" fill="#1ee200"/>
<path d="M660.8 238.0L659.5 238.3L658.2 238.7L656.9 239.1L656.1 239.3L654.9 239.7L653.7 240.1L653.0 240.4L652.2 240.8L651.4 241.3L650.9 241.7L650.6 242.0L650.3 242.3L650.1 242.8L650.1 243.1L650.3 243.5L650.5 244.0L650.9 244.4L651.4 244.7L652.2 245.3L652.8 245.6L653.8 246.1L654.5 246.4L655.6 246.9L656.8 247.4L657.6 247.7L658.8 248.2L660.0 248.6L661.3 249.1L662.6 249.6L664.0 250.0L665.3 250.5L666.7 251.0L668.2 251.4L669.6 251.9L671.1 252.3L672.7 252.8L673.7 253.1L675.3 253.6L677.0 254.0L678.1 254.3L679.9 254.7L681.1 254.9L683.1 255.3L684.4 255.5L685.9 255.7L687.5 255.9L689.2 256.0L690.3 256.0L692.2 256.0L693.3 256.0L694.7 255.9L696.2 255.7L697.6 255.5L699.4 255.1L700.6 254.9L702.2 254.5L703.2 254.2L704.6 253.7L706.0 253.2L707.3 252.8L708.5 252.2L709.2 251.9L710.3 251.4L711.2 250.8L711.7 250.4L712.2 250.0L712.5 249.6L712.8 249.1L712.8 248.6L712.7 248.2L712.5 247.7L712.2 247.3L711.7 246.9L711.0 246.5L710.3 246.1L709.2 245.5L708.4 245.2L707.3 244.7L706.3 244.4L705.0 243.9L703.9 243.5L702.8 243.2L701.4 242.7L700.0 242.3L698.7 241.9L697.3 241.5L696.0 241.1L694.6 240.8L693.2 240.4L691.8 240.0L690.5 239.7L689.1 239.3L687.7 239.0L686.3 238.6L685.3 238.4L683.9 238.1L682.5 237.8L681.5 237.6L679.9 237.3L678.9 237.1L677.8 237.0L676.5 236.8L675.3 236.7L674.0 236.7L672.6 236.6L671.6 236.6L670.1 236.6L668.9 236.7L667.7 236.8L666.4 237.0L665.3 237.1L664.3 237.3L662.8 237.6L661.4 237.9Z" fill="#36e400"/>
<path d="M662.1 236.9L661.2 237.2L659.8 237.5L658.5 237.8L657.2 238.2L656.0 238.6L655.2 238.9L654.0 239.3L653.3 239.6L652.4 240.0L651.7 240.4L651.2 240.8L650.9 241.1L650.7 241.5L650.6 241.9L650.7 242.3L650.8 242.7L651.1 243.0L651.6 243.5L652.3 244.0L652.9 244.3L653.8 244.8L654.5 245.1L655.6 245.6L656.5 246.0L657.5 246.4L658.7 246.9L660.0 247.3L661.2 247.8L662.5 248.3L663.9 248.7L665.2 249.2L666.6 249.6L668.1 250.1L669.5 250.5L671.0 251.0L672.6 251.5L674.1 251.9L675.2 252.2L676.8 252.6L678.5 253.1L679.7 253.3L681.5 253.7L682.8 254.0L684.2 254.2L685.7 254.4L687.2 254.5L688.9 254.7L690.7 254.7L691.7 254.7L693.4 254.6L695.0 254.5L696.5 254.3L697.8 254.1L699.0 253.9L700.7 253.5L701.8 253.2L703.3 252.8L704.7 252.3L706.1 251.9L707.3 251.4L708.5 250.9L709.4 250.4L710.2 250.0L711.0 249.5L711.6 249.0L712.0 248.6L712.2 248.1L712.3 247.7L712.3 247.3L712.1 246.8L711.8 246.5L711.3 246.0L710.7 245.6L710.1 245.2L709.1 244.7L708.1 244.3L707.3 243.9L706.0 243.5L704.7 243.0L703.8 242.7L702.5 242.3L701.1 241.9L699.8 241.4L698.4 241.0L697.4 240.8L696.1 240.4L694.8 240.0L693.4 239.6L692.0 239.3L691.1 239.0L689.7 238.7L688.3 238.3L686.9 238.0L685.5 237.7L684.4 237.4L683.1 237.1L681.7 236.8L680.7 236.7L679.1 236.4L678.0 236.2L676.8 236.1L675.6 236.0L674.3 235.9L672.9 235.8L672.1 235.8L670.6 235.8L669.3 235.9L668.1 236.0L666.8 236.1L665.6 236.3L664.6 236.5L663.1 236.7Z" fill="#4ee700"/>
<path d="M663.1 235.9L662.0 236.2L660.6 236.5L659.2 236.9L657.9 237.2L656.7 237.6L655.5 238.0L654.7 238.3L653.6 238.7L652.9 239.0L652.3 239.4L651.8 239.8L651.4 240.2L651.2 240.5L651.1 240.9L651.2 241.3L651.4 241.7L651.7 242.1L652.1 242.5L652.7 242.8L653.5 243.4L654.2 243.7L655.2 244.2L656.2 244.6L657.1 245.0L658.3 245.4L659.5 245.9L660.8 246.3L662.0 246.8L662.9 247.1L664.3 247.5L665.6 248.0L667.0 248.5L668.4 248.9L669.4 249.2L670.9 249.7L672.4 250.1L674.0 250.5L675.6 251.0L676.7 251.3L678.4 251.7L680.1 252.1L681.3 252.4L682.7 252.6L684.6 252.9L686.1 253.1L687.7 253.3L688.9 253.3L690.3 253.4L692.0 253.4L693.6 253.3L694.9 253.2L696.4 253.0L698.0 252.8L699.2 252.5L700.6 252.2L701.9 251.9L703.4 251.4L704.8 251.0L706.1 250.5L707.4 250.0L708.5 249.5L709.4 249.0L710.2 248.6L710.7 248.2L711.3 247.7L711.6 247.2L711.8 246.8L711.8 246.4L711.6 245.9L711.4 245.5L711.0 245.1L710.4 244.7L709.8 244.3L709.0 243.9L707.9 243.4L707.1 243.0L705.8 242.6L704.9 242.3L703.6 241.8L702.2 241.4L700.9 241.0L699.6 240.6L698.6 240.3L697.2 239.9L695.9 239.5L694.5 239.1L693.1 238.8L691.7 238.4L690.3 238.0L689.0 237.7L688.0 237.5L686.6 237.1L685.2 236.8L683.8 236.5L682.8 236.3L681.3 236.0L680.3 235.8L678.8 235.5L677.6 235.4L676.5 235.3L675.2 235.1L673.9 235.1L672.6 235.0L671.6 235.0L670.3 235.1L668.9 235.1L667.7 235.2L666.5 235.4L665.4 235.5L663.9 235.8Z" fill="#66ea00"/>
<path d="M664.0 235.0L662.7 235.2L661.3 235.5L660.0 235.9L658.7 236.2L657.4 236.6L656.2 237.0L655.3 237.3L654.3 237.7L653.6 238.0L652.9 238.4L652.4 238.8L652.0 239.1L651.7 239.6L651.6 239.9L651.7 240.4L651.9 240.8L652.3 241.2L652.8 241.5L653.3 241.9L654.0 242.3L654.9 242.7L656.0 243.2L656.7 243.5L657.9 244.0L659.1 244.4L660.3 244.9L661.1 245.2L662.4 245.6L663.7 246.1L665.1 246.5L666.5 247.0L667.9 247.4L669.3 247.9L670.8 248.3L671.8 248.6L673.3 249.0L674.9 249.5L676.5 249.9L677.7 250.2L679.3 250.6L681.1 251.0L682.4 251.2L683.7 251.5L685.3 251.7L686.8 251.9L688.2 252.0L690.0 252.1L691.4 252.1L693.1 252.0L694.4 251.9L695.8 251.8L697.5 251.5L698.8 251.3L700.0 251.0L701.6 250.6L703.1 250.2L704.5 249.8L705.8 249.3L707.0 248.8L708.1 248.3L709.2 247.8L709.8 247.4L710.4 247.0L710.9 246.5L711.2 246.0L711.3 245.7L711.3 245.2L711.1 244.7L710.7 244.3L710.3 243.9L709.7 243.5L708.8 243.0L708.0 242.6L707.2 242.3L705.9 241.8L705.1 241.5L703.7 241.1L702.4 240.6L701.0 240.2L700.1 239.9L698.8 239.5L697.4 239.1L696.0 238.8L694.7 238.4L693.3 238.0L691.9 237.6L690.5 237.3L689.1 236.9L687.7 236.6L686.8 236.4L685.4 236.0L684.0 235.7L682.5 235.4L681.5 235.2L680.0 235.0L678.9 234.8L677.9 234.6L676.4 234.5L675.2 234.3L674.1 234.3L672.7 234.2L671.5 234.2L670.0 234.3L669.0 234.3L667.7 234.4L666.3 234.6L665.3 234.8L664.0 235.0Z" fill="#7eec00"/>
<path d="M664.6 234.1L663.6 234.3L662.1 234.6L660.7 234.9L659.4 235.2L658.1 235.6L656.9 236.0L655.7 236.4L654.9 236.7L654.0 237.1L653.3 237.5L652.8 237.9L652.5 238.2L652.3 238.5L652.2 239.0L652.2 239.3L652.4 239.6L652.7 240.0L653.3 240.5L654.0 240.9L654.6 241.3L655.6 241.7L656.3 242.0L657.5 242.5L658.6 243.0L659.8 243.4L660.7 243.7L661.9 244.2L663.2 244.6L664.6 245.0L665.9 245.5L667.3 245.9L668.8 246.4L670.2 246.8L671.7 247.3L673.2 247.7L674.3 248.0L675.9 248.4L677.5 248.8L678.7 249.1L680.4 249.5L681.8 249.8L683.5 250.1L684.9 250.3L686.3 250.5L687.9 250.6L689.7 250.7L690.8 250.8L692.7 250.7L693.9 250.6L695.3 250.5L696.9 250.3L698.4 250.0L699.5 249.8L701.2 249.4L702.7 249.0L703.6 248.7L705.0 248.2L706.2 247.8L707.0 247.4L708.1 246.9L709.1 246.4L709.6 246.0L710.1 245.6L710.5 245.2L710.7 244.8L710.8 244.3L710.6 243.9L710.3 243.4L709.9 243.0L709.4 242.6L708.6 242.2L707.7 241.7L706.9 241.4L705.6 240.9L704.8 240.6L703.5 240.2L702.1 239.7L701.2 239.5L699.9 239.0L698.5 238.6L697.1 238.3L695.7 237.9L694.4 237.5L693.0 237.1L691.6 236.8L690.2 236.4L688.8 236.1L687.4 235.7L686.0 235.4L685.1 235.2L683.6 234.9L682.2 234.6L681.2 234.4L679.7 234.1L678.6 233.9L677.4 233.8L676.0 233.6L674.8 233.5L673.7 233.5L672.2 233.4L671.2 233.4L669.8 233.5L668.5 233.6L667.3 233.7L666.1 233.8L664.6 234.1Z" fill="#96ef00"/>
<path d="M661.6 233.9L660.6 234.2L659.3 234.5L658.4 234.7L657.2 235.1L656.0 235.5L655.3 235.8L654.3 236.3L653.7 236.6L653.2 237.0L653.0 237.3L652.8 237.7L652.7 238.1L652.9 238.5L653.2 238.9L653.6 239.3L654.1 239.6L654.7 239.9L655.7 240.4L656.4 240.7L657.5 241.2L658.6 241.7L659.4 242.0L660.6 242.4L661.9 242.8L663.2 243.3L664.5 243.7L665.9 244.2L667.3 244.6L668.7 245.0L670.1 245.5L671.6 245.9L673.1 246.3L674.7 246.8L675.7 247.0L677.4 247.5L679.0 247.9L680.2 248.1L682.0 248.5L683.3 248.7L684.7 249.0L686.3 249.2L687.7 249.3L689.4 249.4L691.1 249.4L692.3 249.4L693.8 249.3L695.3 249.2L696.7 249.0L698.4 248.7L699.7 248.4L701.3 248.0L702.3 247.8L703.7 247.3L705.0 246.9L706.2 246.4L707.0 246.1L708.0 245.5L708.8 245.1L709.4 244.6L709.8 244.2L710.1 243.8L710.2 243.3L710.2 243.0L709.9 242.5L709.5 242.1L709.0 241.7L708.3 241.3L707.4 240.8L706.6 240.5L705.4 240.0L704.5 239.7L703.2 239.3L702.1 238.9L700.9 238.6L699.6 238.2L698.2 237.8L696.8 237.4L695.4 237.0L694.1 236.6L692.7 236.2L691.3 235.9L689.9 235.5L688.5 235.2L687.1 234.9L685.7 234.5L684.5 234.3L683.3 234.0L681.8 233.7L680.8 233.5L679.3 233.2L678.2 233.1L676.9 232.9L675.6 232.8L674.5 232.7L673.2 232.6L671.7 232.6L670.7 232.6L669.5 232.7L668.3 232.8L667.1 232.9L665.4 233.2L664.4 233.3L662.9 233.6L661.6 233.9Z" fill="#aeef00"/>
<path d="M662.7 232.9L661.4 233.2L660.1 233.5L658.8 233.9L657.9 234.1L656.8 234.5L655.8 234.9L655.0 235.2L654.4 235.6L653.9 236.0L653.5 236.4L653.4 236.7L653.3 237.1L653.4 237.4L653.7 237.7L654.1 238.2L654.8 238.6L655.4 239.0L656.3 239.4L657.1 239.7L658.2 240.2L659.1 240.5L660.2 240.9L661.5 241.4L662.7 241.8L664.0 242.2L665.4 242.7L666.7 243.1L668.1 243.5L669.6 244.0L671.0 244.4L672.5 244.8L674.1 245.3L675.6 245.7L676.7 246.0L678.4 246.4L680.1 246.8L681.3 247.0L683.1 247.4L684.5 247.6L685.9 247.8L687.4 247.9L689.1 248.0L690.4 248.1L692.0 248.1L693.2 248.0L694.8 247.9L696.2 247.7L697.8 247.5L699.2 247.2L700.7 246.8L701.8 246.5L703.3 246.1L704.6 245.6L705.8 245.2L706.8 244.7L707.6 244.3L708.4 243.9L709.0 243.4L709.4 243.0L709.6 242.5L709.6 242.2L709.5 241.8L709.2 241.4L708.7 240.9L708.1 240.5L707.4 240.1L706.7 239.8L705.5 239.3L704.6 239.0L703.3 238.5L702.4 238.2L701.1 237.8L699.7 237.4L698.3 237.0L697.0 236.6L695.6 236.2L694.2 235.8L692.8 235.5L691.4 235.1L690.0 234.8L688.6 234.4L687.2 234.1L685.8 233.8L684.4 233.4L683.4 233.2L682.0 232.9L680.5 232.7L679.5 232.5L678.1 232.3L676.7 232.1L675.5 232.0L674.2 231.9L673.2 231.8L671.9 231.8L670.7 231.8L669.3 231.9L668.1 232.0L666.9 232.2L665.7 232.3L664.3 232.6L662.8 232.9Z" fill="#c6ed00"/>
<path d="M663.4 232.0L662.2 232.2L660.9 232.5L659.5 232.9L658.3 233.2L657.5 233.5L656.4 233.9L655.7 234.2L655.1 234.5L654.5 234.9L654.1 235.3L653.9 235.7L653.9 236.0L654.0 236.4L654.3 236.8L654.8 237.1L655.3 237.5L656.2 238.0L656.8 238.3L657.9 238.7L659.0 239.2L659.8 239.5L661.0 239.9L662.3 240.3L663.6 240.8L664.9 241.2L666.3 241.6L667.6 242.1L669.0 242.5L670.5 242.9L672.0 243.3L673.5 243.8L675.0 244.2L676.6 244.6L677.7 244.9L679.4 245.3L681.1 245.6L682.4 245.9L683.7 246.1L685.6 246.4L687.1 246.6L688.5 246.7L689.7 246.7L691.7 246.7L692.8 246.7L694.2 246.6L695.7 246.4L697.3 246.2L698.8 245.9L700.0 245.6L701.4 245.3L702.8 244.8L704.1 244.4L705.4 243.9L706.5 243.4L707.2 243.1L707.9 242.6L708.5 242.2L708.8 241.8L709.0 241.3L709.0 241.0L708.8 240.5L708.5 240.2L708.0 239.8L707.4 239.4L706.6 239.0L705.5 238.5L704.7 238.2L703.4 237.7L702.4 237.4L701.2 237.0L699.8 236.6L698.5 236.2L697.1 235.8L695.7 235.4L694.8 235.2L693.4 234.8L692.0 234.5L690.7 234.1L689.7 233.9L688.3 233.5L686.9 233.2L685.5 232.9L684.1 232.6L682.8 232.3L681.6 232.1L680.1 231.8L679.1 231.6L677.7 231.4L676.3 231.2L675.0 231.1L673.9 231.1L672.9 231.0L671.2 231.0L670.2 231.1L669.1 231.1L667.8 231.2L666.2 231.5L665.1 231.6L663.6 231.9Z" fill="#deeb00"/>
<path d="M663.9 231.1L662.6 231.3L661.2 231.7L659.9 232.0L658.7 232.4L657.9 232.6L656.8 233.0L656.1 233.4L655.5 233.7L655.0 234.0L654.7 234.5L654.6 234.8L654.6 235.2L654.8 235.5L655.2 235.9L655.7 236.3L656.3 236.7L657.0 237.0L658.0 237.4L659.1 237.9L659.9 238.2L661.1 238.6L662.3 239.0L663.6 239.4L664.9 239.9L666.2 240.3L667.6 240.7L669.0 241.1L670.5 241.6L671.9 242.0L673.4 242.4L675.0 242.8L676.5 243.2L677.9 243.5L679.3 243.9L681.0 244.3L682.2 244.5L684.1 244.8L685.5 245.0L687.0 245.2L688.6 245.3L689.9 245.4L691.4 245.4L692.8 245.3L694.4 245.2L695.8 245.1L697.1 244.9L698.8 244.5L699.9 244.3L701.4 243.9L702.8 243.5L704.1 243.0L705.3 242.5L706.1 242.2L707.0 241.7L707.5 241.3L708.0 240.9L708.3 240.5L708.4 240.1L708.2 239.6L708.0 239.2L707.6 238.9L707.0 238.5L706.2 238.0L705.2 237.6L704.4 237.3L703.1 236.8L702.2 236.5L700.9 236.1L699.5 235.7L698.1 235.3L696.8 234.9L695.8 234.7L694.5 234.3L693.1 233.9L691.7 233.6L690.3 233.2L689.0 232.9L687.9 232.7L686.5 232.3L685.1 232.0L683.7 231.7L682.2 231.4L681.2 231.2L679.7 230.9L678.7 230.8L677.4 230.6L675.9 230.4L674.7 230.3L673.6 230.3L672.3 230.2L671.1 230.2L669.6 230.3L668.4 230.4L667.2 230.5L666.1 230.7L664.5 230.9Z" fill="#f6e900"/>
<path d="M664.2 230.2L663.0 230.5L661.6 230.8L660.3 231.1L659.1 231.5L658.3 231.8L657.2 232.2L656.5 232.5L656.0 232.8L655.5 233.2L655.3 233.6L655.2 233.9L655.3 234.2L655.6 234.6L656.0 235.0L656.5 235.3L657.4 235.8L658.1 236.1L659.2 236.6L659.9 236.8L661.1 237.3L662.3 237.7L663.6 238.1L664.9 238.5L666.2 239.0L667.6 239.4L669.0 239.8L670.4 240.2L671.9 240.6L673.4 241.0L674.9 241.4L676.5 241.8L678.1 242.2L679.2 242.5L680.9 242.9L682.1 243.1L684.0 243.5L685.4 243.7L686.8 243.8L688.4 244.0L690.1 244.0L691.2 244.0L692.9 244.0L694.5 243.9L695.9 243.7L697.2 243.5L698.9 243.1L699.9 242.9L701.4 242.5L702.8 242.1L704.0 241.6L705.2 241.1L705.9 240.8L706.8 240.3L707.2 239.9L707.5 239.5L707.7 239.0L707.7 238.8L707.4 238.2L707.0 237.9L706.5 237.5L705.7 237.1L704.8 236.7L704.0 236.4L702.7 235.9L701.9 235.6L700.5 235.2L699.2 234.8L697.8 234.4L696.4 234.0L695.5 233.8L694.1 233.4L692.7 233.0L691.3 232.7L689.9 232.3L688.5 232.0L687.6 231.8L686.2 231.5L684.7 231.1L683.3 230.8L681.8 230.5L680.8 230.3L679.3 230.1L678.2 229.9L677.1 229.7L675.7 229.6L674.5 229.5L673.2 229.4L671.7 229.4L670.7 229.4L669.5 229.5L668.2 229.6L666.8 229.8L665.5 230.0L664.2 230.2Z" fill="#ffe100"/>
<path d="M664.3 229.4L663.0 229.7L661.6 230.0L660.3 230.4L659.5 230.6L658.3 231.0L657.6 231.3L656.9 231.7L656.4 232.0L656.1 232.4L655.9 232.8L656.0 233.1L656.2 233.4L656.5 233.8L657.0 234.2L657.9 234.6L658.6 234.9L659.6 235.4L660.4 235.7L661.6 236.1L662.8 236.5L664.1 236.9L665.4 237.3L666.7 237.7L668.1 238.2L669.5 238.6L670.9 239.0L672.4 239.4L673.9 239.8L675.4 240.2L677.0 240.6L678.6 241.0L679.7 241.2L681.5 241.6L682.7 241.8L684.6 242.2L686.0 242.4L687.5 242.5L689.1 242.6L690.3 242.7L692.1 242.6L693.3 242.6L694.7 242.5L696.4 242.2L697.8 242.0L698.9 241.7L700.4 241.4L701.8 240.9L703.1 240.5L704.3 240.1L705.0 239.7L705.9 239.2L706.4 238.8L706.8 238.4L706.9 238.0L706.9 237.6L706.7 237.2L706.4 236.9L705.8 236.5L705.1 236.1L704.0 235.6L703.2 235.3L701.9 234.9L701.0 234.6L699.7 234.2L698.3 233.8L697.0 233.4L695.6 233.0L694.6 232.8L693.3 232.4L691.9 232.0L690.5 231.7L689.1 231.3L687.8 231.1L686.7 230.8L685.3 230.5L683.9 230.2L682.4 229.9L681.4 229.7L679.9 229.4L678.8 229.2L677.2 229.0L676.0 228.8L674.8 228.7L673.4 228.7L672.4 228.6L670.8 228.7L669.8 228.7L668.5 228.8L667.0 229.0L665.9 229.1L664.4 229.4Z" fill="#ffd500"/>
<path d="M664.0 228.7L663.4 228.8L662.5 229.1L661.6 229.3L660.8 229.5L660.3 229.6L659.6 229.9L658.8 230.2L658.5 230.3L657.8 230.6L657.5 230.8L657.1 231.1L656.9 231.3L656.8 231.5L656.7 231.8L656.7 232.0L656.8 232.2L657.0 232.4L657.2 232.7L657.6 233.0L657.9 233.1L658.5 233.4L658.9 233.7L659.4 233.9L660.2 234.2L660.9 234.5L661.3 234.6L662.1 234.9L662.9 235.2L663.7 235.4L664.6 235.7L665.4 236.0L666.3 236.3L667.2 236.5L668.1 236.8L669.1 237.1L670.0 237.3L670.9 237.6L671.9 237.9L672.9 238.1L673.9 238.4L674.9 238.7L675.9 238.9L677.0 239.2L678.1 239.5L678.8 239.6L679.7 239.8L680.9 240.1L682.0 240.3L682.6 240.4L683.9 240.7L684.9 240.8L685.9 241.0L686.6 241.0L688.1 241.2L689.0 241.2L689.9 241.3L690.9 241.3L692.0 241.2L693.1 241.2L693.9 241.1L694.6 241.1L696.0 240.9L696.6 240.8L697.8 240.6L698.8 240.3L699.4 240.2L700.4 239.9L701.3 239.7L702.2 239.4L703.0 239.1L703.7 238.8L704.1 238.6L704.8 238.3L705.3 238.0L705.6 237.8L705.8 237.5L706.1 237.2L706.2 236.9L706.2 236.7L706.1 236.5L705.9 236.2L705.6 235.9L705.3 235.6L705.0 235.4L704.3 235.1L704.0 234.9L703.2 234.6L702.8 234.4L701.9 234.1L701.1 233.8L700.6 233.7L699.7 233.4L698.8 233.1L697.9 232.9L697.0 232.6L696.1 232.4L695.2 232.1L694.2 231.9L693.8 231.7L692.8 231.5L691.9 231.3L691.0 231.0L690.0 230.8L689.1 230.6L688.4 230.4L687.7 230.2L686.8 230.0L685.8 229.8L684.9 229.6L683.9 229.4L682.9 229.2L682.0 229.0L681.5 228.9L680.5 228.7L679.4 228.5L678.7 228.4L677.8 228.3L676.8 228.1L676.1 228.1L675.4 228.0L674.2 227.9L673.4 227.9L672.7 227.9L671.8 227.8L670.9 227.9L670.0 227.9L669.3 228.0L668.6 228.0L667.5 228.1L666.9 228.2L665.9 228.4L664.9 228.6L664.0 228.7Z" fill="#ffc900"/>
<path d="M666.8 227.5L665.9 227.6L664.9 227.8L663.9 228.0L663.0 228.2L662.1 228.4L661.3 228.7L660.5 228.9L659.7 229.2L659.3 229.3L658.7 229.6L658.4 229.8L658.0 230.0L657.7 230.3L657.6 230.5L657.5 230.7L657.6 231.0L657.7 231.2L657.8 231.4L658.0 231.6L658.5 231.9L658.7 232.1L659.3 232.4L659.8 232.6L660.4 232.8L661.1 233.1L661.8 233.4L662.4 233.6L663.0 233.8L663.8 234.1L664.7 234.4L665.5 234.6L666.4 234.9L667.3 235.2L668.2 235.4L669.1 235.7L670.1 236.0L671.0 236.2L672.0 236.5L673.0 236.8L673.9 237.0L675.0 237.3L676.0 237.6L677.0 237.8L678.1 238.1L678.6 238.2L679.7 238.4L680.9 238.7L682.0 238.9L682.6 239.0L683.9 239.3L684.9 239.4L685.9 239.5L686.7 239.6L688.1 239.8L689.0 239.8L689.9 239.8L690.9 239.9L691.9 239.8L693.1 239.8L693.9 239.7L694.6 239.6L695.9 239.5L696.5 239.4L697.7 239.2L698.8 238.9L699.4 238.8L700.2 238.5L701.1 238.3L702.0 238.0L702.4 237.8L703.1 237.5L703.8 237.2L704.3 236.9L704.7 236.7L704.9 236.4L705.2 236.1L705.3 235.9L705.3 235.6L705.3 235.4L705.1 235.1L704.8 234.8L704.5 234.5L704.1 234.4L703.5 234.0L703.1 233.8L702.3 233.5L701.9 233.4L701.1 233.1L700.2 232.8L699.6 232.6L698.9 232.4L697.9 232.1L697.0 231.8L696.1 231.6L695.2 231.3L694.3 231.1L693.3 230.8L692.4 230.6L691.5 230.4L690.5 230.1L689.6 229.9L688.7 229.7L687.7 229.5L686.8 229.2L685.8 229.0L684.9 228.8L683.9 228.6L682.9 228.4L682.0 228.2L681.5 228.1L680.5 227.9L679.5 227.8L678.7 227.6L677.8 227.5L676.8 227.4L676.1 227.3L675.3 227.2L674.2 227.1L673.5 227.1L672.7 227.1L671.9 227.1L670.9 227.1L670.0 227.1L669.3 227.2L668.6 227.2L667.5 227.4L666.8 227.5Z" fill="#ffbd00"/>
<path d="M666.5 226.8L665.9 226.9L664.9 227.0L664.0 227.2L663.1 227.5L662.2 227.7L661.4 227.9L660.7 228.1L660.3 228.3L659.6 228.6L659.3 228.8L658.9 229.0L658.6 229.3L658.5 229.5L658.4 229.7L658.5 230.0L658.6 230.2L658.7 230.4L659.0 230.6L659.4 230.9L659.7 231.0L660.3 231.3L661.0 231.6L661.3 231.8L662.0 232.1L662.8 232.3L663.6 232.6L664.1 232.8L664.8 233.0L665.7 233.3L666.6 233.5L667.4 233.8L668.3 234.1L669.3 234.3L670.2 234.6L671.1 234.9L672.1 235.1L673.1 235.4L674.0 235.6L675.0 235.9L676.1 236.2L677.1 236.4L677.6 236.5L678.7 236.8L679.8 237.0L680.9 237.3L682.1 237.5L682.7 237.6L683.9 237.8L684.7 237.9L685.9 238.1L686.6 238.2L688.0 238.3L689.0 238.4L689.9 238.4L690.9 238.4L692.0 238.4L693.0 238.4L693.8 238.3L694.6 238.2L695.8 238.0L696.6 237.9L697.5 237.7L698.6 237.5L699.6 237.2L700.5 237.0L701.3 236.7L702.1 236.4L702.8 236.1L703.1 235.9L703.7 235.6L703.9 235.4L704.3 235.0L704.3 234.8L704.4 234.5L704.3 234.3L704.1 234.0L703.8 233.7L703.5 233.5L703.2 233.3L702.5 232.9L702.2 232.8L701.4 232.5L701.0 232.3L700.1 232.0L699.3 231.7L698.4 231.5L697.9 231.3L697.0 231.1L696.1 230.8L695.2 230.6L694.3 230.3L693.3 230.1L692.4 229.8L691.5 229.6L690.5 229.4L689.6 229.1L688.6 228.9L687.7 228.7L686.8 228.5L685.8 228.3L684.9 228.1L683.9 227.8L682.9 227.6L682.4 227.5L681.5 227.4L680.5 227.2L679.4 227.0L678.9 226.9L677.8 226.7L676.9 226.6L676.1 226.5L675.4 226.5L674.2 226.4L673.4 226.3L672.7 226.3L671.8 226.3L670.9 226.3L670.0 226.4L669.3 226.4L668.4 226.5L667.5 226.6L666.5 226.8Z" fill="#ffb100"/>
<path d="M665.2 226.3L664.6 226.4L663.7 226.6L662.8 226.8L662.4 226.9L661.6 227.2L660.9 227.5L660.6 227.6L660.1 227.9L659.8 228.1L659.6 228.3L659.5 228.5L659.5 228.7L659.5 229.0L659.7 229.3L659.9 229.5L660.2 229.6L660.7 230.0L661.0 230.1L661.6 230.4L662.3 230.7L662.7 230.8L663.5 231.1L664.3 231.4L665.1 231.6L665.9 231.9L666.8 232.2L667.2 232.3L668.1 232.6L669.0 232.8L669.9 233.1L670.8 233.3L671.8 233.6L672.7 233.9L673.7 234.1L674.7 234.4L675.4 234.6L676.2 234.7L677.2 235.0L678.3 235.2L679.4 235.5L680.5 235.7L681.3 235.9L682.2 236.1L683.4 236.3L684.2 236.4L685.4 236.6L686.2 236.7L687.5 236.8L688.3 236.9L689.1 236.9L690.2 237.0L691.1 237.0L692.1 236.9L693.4 236.9L694.3 236.8L695.0 236.7L696.2 236.5L697.3 236.3L697.8 236.2L698.8 235.9L699.7 235.6L700.6 235.4L701.4 235.1L701.7 234.9L702.3 234.6L702.7 234.4L703.0 234.0L703.2 233.8L703.3 233.6L703.3 233.3L703.2 233.1L703.0 232.8L702.7 232.6L702.2 232.3L701.9 232.1L701.2 231.7L700.8 231.6L700.0 231.3L699.4 231.1L698.7 230.9L697.8 230.6L696.9 230.3L696.0 230.1L695.5 229.9L694.7 229.7L693.7 229.4L692.8 229.2L691.9 229.0L690.9 228.7L690.0 228.5L689.1 228.3L688.1 228.0L687.2 227.8L686.2 227.6L685.3 227.4L684.3 227.2L683.8 227.1L682.9 226.9L681.9 226.7L680.9 226.5L679.9 226.3L679.3 226.2L678.3 226.1L677.3 225.9L676.6 225.8L675.7 225.7L674.7 225.6L674.0 225.6L673.3 225.6L672.4 225.6L671.6 225.6L670.7 225.6L669.5 225.7L668.8 225.7L668.0 225.8L667.1 225.9L666.1 226.1L665.2 226.3Z" fill="#ffa500"/>
<path d="M667.0 225.3L666.3 225.4L665.3 225.6L664.4 225.8L663.5 226.0L662.7 226.2L662.4 226.4L661.7 226.7L661.4 226.8L661.0 227.1L660.8 227.3L660.7 227.5L660.6 227.8L660.7 228.0L660.9 228.2L661.0 228.4L661.5 228.7L661.8 228.9L662.4 229.2L662.7 229.3L663.4 229.6L664.2 229.9L665.0 230.1L665.4 230.3L666.2 230.5L667.0 230.8L667.9 231.0L668.8 231.3L669.7 231.6L670.6 231.8L671.5 232.1L672.5 232.3L673.4 232.6L674.4 232.8L675.4 233.1L676.4 233.3L677.4 233.6L678.5 233.8L679.6 234.1L680.1 234.2L681.3 234.4L682.4 234.6L683.3 234.8L684.2 234.9L685.6 235.1L686.2 235.2L687.3 235.3L688.5 235.4L689.4 235.5L690.3 235.5L691.3 235.5L692.5 235.4L693.3 235.4L694.0 235.3L695.3 235.1L695.9 235.0L697.0 234.8L698.0 234.6L698.9 234.3L699.7 234.0L700.5 233.7L700.9 233.5L701.4 233.2L701.7 233.0L702.0 232.7L702.1 232.5L702.1 232.2L702.0 232.0L701.8 231.7L701.4 231.4L701.2 231.2L700.7 231.0L700.1 230.7L699.5 230.5L698.9 230.3L698.1 230.0L697.2 229.7L696.8 229.6L695.9 229.3L695.0 229.1L694.1 228.8L693.1 228.6L692.2 228.3L691.3 228.1L690.3 227.9L689.4 227.6L688.5 227.4L687.5 227.2L686.6 227.0L685.6 226.7L684.7 226.5L683.7 226.3L682.7 226.1L681.7 225.9L680.9 225.8L680.2 225.7L679.2 225.5L678.1 225.3L677.6 225.2L676.4 225.1L675.8 225.0L674.8 224.9L673.8 224.9L673.1 224.8L672.2 224.8L671.3 224.8L670.3 224.9L669.7 224.9L668.9 225.0L667.9 225.1L667.0 225.3Z" fill="#ff9c00"/>
<path d="M667.6 224.5L666.6 224.7L665.7 224.9L664.8 225.1L664.0 225.3L663.6 225.4L663.0 225.7L662.7 225.9L662.2 226.2L662.1 226.4L662.0 226.6L662.0 226.9L662.1 227.1L662.3 227.2L662.6 227.5L663.0 227.7L663.5 227.9L664.0 228.2L664.7 228.4L665.2 228.6L665.8 228.8L666.6 229.1L667.4 229.4L668.3 229.6L669.1 229.9L670.0 230.1L670.7 230.3L671.4 230.5L672.3 230.8L673.3 231.0L674.2 231.3L674.7 231.4L675.7 231.6L676.7 231.9L677.8 232.1L678.8 232.4L679.9 232.6L681.0 232.8L681.6 232.9L682.7 233.2L683.9 233.4L684.6 233.5L685.9 233.6L686.6 233.7L687.9 233.8L688.9 233.9L689.8 233.9L690.8 233.9L691.9 233.9L692.8 233.8L693.5 233.8L694.8 233.6L695.4 233.5L696.5 233.3L697.4 233.0L698.3 232.8L699.1 232.5L699.7 232.2L700.0 232.0L700.4 231.7L700.6 231.5L700.7 231.2L700.7 231.0L700.5 230.8L700.2 230.5L699.9 230.2L699.6 230.1L698.9 229.7L698.5 229.6L697.8 229.3L697.0 229.0L696.5 228.9L695.6 228.6L694.7 228.3L693.8 228.1L692.9 227.8L692.5 227.7L691.5 227.5L690.6 227.2L689.7 227.0L688.7 226.8L687.8 226.5L686.8 226.3L685.9 226.1L684.9 225.9L684.2 225.8L683.5 225.6L682.5 225.4L681.5 225.2L680.5 225.0L679.5 224.8L678.9 224.7L677.8 224.6L677.1 224.5L676.1 224.4L675.5 224.3L674.2 224.2L673.4 224.2L672.6 224.1L671.7 224.1L670.7 224.2L670.0 224.2L669.4 224.3L668.2 224.4L667.6 224.5Z" fill="#ff9500"/>
<path d="M669.4 223.7L668.8 223.8L667.7 223.9L666.7 224.1L665.9 224.3L665.1 224.6L664.4 224.8L664.2 225.0L663.9 225.2L663.7 225.4L663.6 225.7L663.7 225.9L663.8 226.0L664.2 226.4L664.5 226.5L665.0 226.8L665.4 227.0L666.1 227.3L666.6 227.5L667.2 227.7L668.0 227.9L668.8 228.2L669.7 228.4L670.5 228.7L671.4 228.9L671.9 229.1L672.8 229.3L673.7 229.6L674.7 229.8L675.7 230.0L676.2 230.2L677.2 230.4L678.2 230.6L679.3 230.9L680.3 231.1L681.5 231.3L682.0 231.4L683.2 231.6L684.4 231.8L685.1 231.9L686.4 232.1L687.2 232.2L688.1 232.2L689.3 232.3L690.3 232.3L691.2 232.3L692.0 232.3L693.1 232.2L694.0 232.0L695.2 231.8L695.7 231.7L696.6 231.5L697.4 231.2L697.8 231.1L698.4 230.7L698.6 230.6L698.9 230.3L698.9 230.0L698.9 229.7L698.7 229.5L698.5 229.3L698.1 229.1L697.5 228.8L697.2 228.6L696.4 228.3L695.6 228.0L695.2 227.9L694.3 227.6L693.4 227.4L692.5 227.1L691.8 226.9L691.2 226.8L690.2 226.5L689.3 226.3L688.4 226.1L687.4 225.8L686.5 225.6L685.5 225.4L684.6 225.2L683.6 225.0L683.1 224.9L682.1 224.7L681.1 224.5L680.1 224.3L679.2 224.1L678.5 224.0L677.4 223.9L676.8 223.8L675.6 223.7L675.0 223.6L674.1 223.6L673.1 223.5L672.2 223.5L671.4 223.5L670.6 223.6L669.4 223.7Z" fill="#ff8e00"/>
<path d="M669.9 223.2L669.8 223.2L669.2 223.3L668.7 223.3L668.2 223.4L667.8 223.5L667.3 223.7L667.0 223.8L666.6 223.9L666.6 223.9L666.3 224.1L666.1 224.2L666.0 224.3L665.9 224.4L665.9 224.5L665.8 224.6L665.8 224.7L665.9 224.8L665.9 224.9L666.1 225.1L666.1 225.1L666.3 225.3L666.5 225.4L666.6 225.5L666.8 225.6L667.1 225.7L667.4 225.9L667.5 225.9L667.7 226.0L668.1 226.2L668.5 226.3L668.8 226.4L669.2 226.6L669.6 226.7L669.7 226.7L670.0 226.8L670.4 226.9L670.8 227.1L671.3 227.2L671.7 227.3L672.2 227.4L672.6 227.6L673.0 227.7L673.5 227.8L674.0 227.9L674.4 228.1L674.9 228.2L675.4 228.3L675.9 228.4L676.4 228.5L676.9 228.6L677.4 228.8L677.9 228.9L678.4 229.0L678.9 229.1L679.4 229.2L680.0 229.3L680.5 229.4L680.5 229.4L681.1 229.6L681.6 229.7L682.2 229.8L682.8 229.9L683.4 230.0L683.8 230.0L684.0 230.1L684.6 230.2L685.2 230.2L685.9 230.3L685.9 230.3L686.6 230.4L687.4 230.5L687.5 230.5L688.2 230.5L688.7 230.5L689.0 230.5L689.8 230.6L690.0 230.6L690.7 230.5L691.1 230.5L691.5 230.5L692.2 230.4L692.5 230.4L692.8 230.4L693.4 230.3L694.0 230.2L694.5 230.1L694.9 229.9L695.3 229.8L695.7 229.7L696.0 229.5L696.2 229.4L696.3 229.3L696.5 229.2L696.6 229.0L696.6 229.0L696.6 228.7L696.6 228.7L696.5 228.5L696.5 228.5L696.3 228.3L696.2 228.2L696.1 228.1L695.8 227.9L695.7 227.8L695.5 227.8L695.1 227.6L694.8 227.4L694.6 227.4L694.4 227.3L694.0 227.1L693.6 227.0L693.2 226.9L692.8 226.7L692.5 226.7L692.3 226.6L691.9 226.5L691.4 226.3L691.0 226.2L690.6 226.1L690.1 226.0L689.6 225.9L689.2 225.7L688.7 225.6L688.3 225.5L687.8 225.4L687.3 225.3L686.9 225.2L686.4 225.1L685.9 224.9L685.4 224.8L684.9 224.7L684.5 224.6L684.0 224.5L683.5 224.4L683.0 224.3L682.5 224.2L682.0 224.1L681.5 224.0L681.0 223.9L680.5 223.8L680.3 223.8L680.0 223.7L679.4 223.6L678.9 223.6L678.4 223.5L677.8 223.4L677.6 223.4L677.2 223.3L676.6 223.2L676.0 223.2L675.8 223.2L675.4 223.1L674.7 223.1L674.5 223.1L674.0 223.0L673.4 223.0L673.2 223.0L672.5 223.0L672.3 223.0L671.7 223.0L671.3 223.0L671.0 223.1L670.4 223.1L669.9 223.2Z" fill="#ff8700"/>
<path d="M670.7 223.0L670.6 223.0L670.2 223.1L670.2 223.1L669.8 223.2L669.5 223.4L669.3 223.5L669.3 223.5L669.2 223.7L669.2 223.7L669.2 223.9L669.2 224.0L669.3 224.1L669.4 224.2L669.5 224.3L669.8 224.5L669.9 224.6L670.0 224.6L670.4 224.8L670.7 224.9L671.0 225.0L671.1 225.1L671.4 225.2L671.8 225.3L672.2 225.4L672.6 225.6L673.0 225.7L673.4 225.8L673.8 225.9L674.2 226.1L674.3 226.1L674.7 226.2L675.1 226.3L675.6 226.4L676.1 226.6L676.5 226.7L677.0 226.8L677.5 226.9L678.0 227.0L678.5 227.1L678.5 227.1L679.0 227.2L679.5 227.3L680.1 227.5L680.6 227.6L681.2 227.7L681.7 227.8L682.3 227.9L682.9 228.0L682.9 228.0L683.5 228.1L684.1 228.2L684.7 228.2L685.1 228.3L685.4 228.3L686.1 228.4L686.7 228.4L686.9 228.4L687.7 228.5L687.9 228.5L688.5 228.5L688.9 228.5L689.6 228.5L689.8 228.5L690.5 228.4L691.1 228.4L691.1 228.4L691.7 228.3L692.1 228.1L692.5 228.0L692.6 228.0L692.8 227.8L693.0 227.7L693.0 227.6L693.1 227.5L693.1 227.3L693.0 227.2L692.9 227.1L692.7 226.9L692.7 226.9L692.4 226.7L692.2 226.6L692.1 226.6L691.8 226.4L691.4 226.3L691.1 226.1L691.0 226.1L690.7 226.0L690.3 225.8L689.8 225.7L689.4 225.6L689.0 225.4L688.6 225.3L688.4 225.3L688.1 225.2L687.7 225.1L687.2 224.9L686.8 224.8L686.3 224.7L685.8 224.6L685.4 224.5L684.9 224.4L684.4 224.3L683.9 224.2L683.4 224.0L682.9 223.9L682.4 223.8L681.9 223.7L681.7 223.7L681.4 223.6L680.9 223.6L680.4 223.5L679.9 223.4L679.3 223.3L678.8 223.2L678.4 223.1L678.2 223.1L677.6 223.0L677.0 223.0L676.5 222.9L676.4 222.9L675.8 222.8L675.1 222.8L675.1 222.8L674.3 222.8L674.1 222.7L673.5 222.7L673.2 222.7L672.5 222.8L672.4 222.8L671.7 222.8L671.1 222.9L670.7 223.0Z" fill="#ff8000"/>
<path d="M680.3 224.2L680.0 224.1L679.7 224.3L679.8 224.3L680.2 224.5L680.7 224.6L681.2 224.7L681.4 224.7L682.1 224.6L681.8 224.5L681.4 224.4L680.9 224.3L680.3 224.2Z" fill="#ff7a00"/>
<path d="M572.3 288.0L671.0 354.9L771.9 288.6" fill="none" stroke="#c0c0c0" stroke-width="1"/>
<rect x="546" y="215.5" width="14" height="7" fill="#fff" stroke="#e6e6e6" stroke-width=".6"/><path d="M548.5 219H557.5" stroke="#e2e2e2" stroke-width="1"/><rect x="546" y="230.5" width="14" height="7" fill="#fff" stroke="#e6e6e6" stroke-width=".6"/><path d="M548.5 234H557.5" stroke="#e2e2e2" stroke-width="1"/><rect x="546" y="245.5" width="14" height="7" fill="#fff" stroke="#e6e6e6" stroke-width=".6"/><path d="M548.5 249H557.5" stroke="#e2e2e2" stroke-width="1"/><rect x="546" y="259.5" width="14" height="7" fill="#fff" stroke="#e6e6e6" stroke-width=".6"/><path d="M548.5 263H557.5" stroke="#e2e2e2" stroke-width="1"/><rect x="546" y="273.5" width="14" height="7" fill="#fff" stroke="#e6e6e6" stroke-width=".6"/><path d="M548.5 277H557.5" stroke="#e2e2e2" stroke-width="1"/><rect x="546" y="287.5" width="14" height="7" fill="#fff" stroke="#e6e6e6" stroke-width=".6"/><path d="M548.5 291H557.5" stroke="#e2e2e2" stroke-width="1"/><rect x="786" y="215.5" width="14" height="7" fill="#fff" stroke="#e6e6e6" stroke-width=".6"/><path d="M788.5 219H797.5" stroke="#e2e2e2" stroke-width="1"/><rect x="786" y="230.5" width="14" height="7" fill="#fff" stroke="#e6e6e6" stroke-width=".6"/><path d="M788.5 234H797.5" stroke="#e2e2e2" stroke-width="1"/><rect x="786" y="246.5" width="14" height="7" fill="#fff" stroke="#e6e6e6" stroke-width=".6"/><path d="M788.5 250H797.5" stroke="#e2e2e2" stroke-width="1"/><rect x="786" y="260.5" width="14" height="7" fill="#fff" stroke="#e6e6e6" stroke-width=".6"/><path d="M788.5 264H797.5" stroke="#e2e2e2" stroke-width="1"/><rect x="786" y="274.5" width="14" height="7" fill="#fff" stroke="#e6e6e6" stroke-width=".6"/><path d="M788.5 278H797.5" stroke="#e2e2e2" stroke-width="1"/><rect x="786" y="288.5" width="14" height="7" fill="#fff" stroke="#e6e6e6" stroke-width=".6"/><path d="M788.5 292H797.5" stroke="#e2e2e2" stroke-width="1"/><g transform="translate(550 298) rotate(-33)"><rect x="-13" y="-3" width="26" height="6" fill="#fff" stroke="#e6e6e6" stroke-width=".6"/><path d="M-10 0H10" stroke="#e2e2e2" stroke-width="1"/></g><g transform="translate(568 311) rotate(-33)"><rect x="-13" y="-3" width="26" height="6" fill="#fff" stroke="#e6e6e6" stroke-width=".6"/><path d="M-10 0H10" stroke="#e2e2e2" stroke-width="1"/></g><g transform="translate(584 323) rotate(-33)"><rect x="-13" y="-3" width="26" height="6" fill="#fff" stroke="#e6e6e6" stroke-width=".6"/><path d="M-10 0H10" stroke="#e2e2e2" stroke-width="1"/></g><g transform="translate(603 336) rotate(-33)"><rect x="-13" y="-3" width="26" height="6" fill="#fff" stroke="#e6e6e6" stroke-width=".6"/><path d="M-10 0H10" stroke="#e2e2e2" stroke-width="1"/></g><g transform="translate(623 353) rotate(-33)"><rect x="-13" y="-3" width="26" height="6" fill="#fff" stroke="#e6e6e6" stroke-width=".6"/><path d="M-10 0H10" stroke="#e2e2e2" stroke-width="1"/></g><g transform="translate(651 371) rotate(-33)"><rect x="-13" y="-3" width="26" height="6" fill="#fff" stroke="#e6e6e6" stroke-width=".6"/><path d="M-10 0H10" stroke="#e2e2e2" stroke-width="1"/></g><g transform="translate(792 301) rotate(33)"><rect x="-13" y="-3" width="26" height="6" fill="#fff" stroke="#e6e6e6" stroke-width=".6"/><path d="M-10 0H10" stroke="#e2e2e2" stroke-width="1"/></g><g transform="translate(775 313) rotate(33)"><rect x="-13" y="-3" width="26" height="6" fill="#fff" stroke="#e6e6e6" stroke-width=".6"/><path d="M-10 0H10" stroke="#e2e2e2" stroke-width="1"/></g><g transform="translate(761 325) rotate(33)"><rect x="-13" y="-3" width="26" height="6" fill="#fff" stroke="#e6e6e6" stroke-width=".6"/><path d="M-10 0H10" stroke="#e2e2e2" stroke-width="1"/></g><g transform="translate(740 338.5) rotate(33)"><rect x="-13" y="-3" width="26" height="6" fill="#fff" stroke="#e6e6e6" stroke-width=".6"/><path d="M-10 0H10" stroke="#e2e2e2" stroke-width="1"/></g><g transform="translate(716 353.5) rotate(33)"><rect x="-13" y="-3" width="26" height="6" fill="#fff" stroke="#e6e6e6" stroke-width=".6"/><path d="M-10 0H10" stroke="#e2e2e2" stroke-width="1"/></g><g transform="translate(686 371) rotate(33)"><rect x="-13" y="-3" width="26" height="6" fill="#fff" stroke="#e6e6e6" stroke-width=".6"/><path d="M-10 0H10" stroke="#e2e2e2" stroke-width="1"/></g>
</svg>
<div class="ab" style="left:177px;top:385px;width:642px;height:2px;background:#6e6e6e"></div>
<div class="ab" style="left:178px;top:387px;width:641px;height:285px;background:#f0f0f0"></div>
<div class="t" style="left:181px;top:389px;font-size:10px;color:#333">数据曲线</div>
<svg class="ab" style="left:786px;top:387px" width="16" height="15"><rect x="1" y="4" width="10" height="10" fill="#f0f0f0" stroke="#222" stroke-width="1.3"/><path d="M4 4V1H14V11H11" fill="none" stroke="#222" stroke-width="1.3"/></svg>
<svg class="ab" style="left:806px;top:389px" width="11" height="11"><path d="M1.5 1.5L9.5 9.5M9.5 1.5L1.5 9.5" stroke="#111" stroke-width="1.8"/></svg>
<div class="ab" style="left:180px;top:403px;width:47px;height:21px;background:#cde5f7;border:1px solid #86b6e2;font-size:10.5px;color:#333;text-align:center;line-height:19px">播放</div>
<div class="ab" style="left:230px;top:403px;width:47px;height:21px;background:#e1e1e1;border:1px solid #d0d0d0;font-size:10.5px;color:#333;text-align:center;line-height:19px">清除</div>
<div class="ab" style="left:280px;top:403px;width:48px;height:21px;background:#e1e1e1;border:1px solid #d0d0d0;font-size:10.5px;color:#333;text-align:center;line-height:19px">导出</div>
<div class="ab" style="left:330px;top:403px;width:48px;height:21px;background:#e1e1e1;border:1px solid #d0d0d0;font-size:10.5px;color:#333;text-align:center;line-height:19px">截图</div>
<div class="ab" style="left:381px;top:403px;width:47px;height:21px;background:#e1e1e1;border:1px solid #d0d0d0;font-size:10.5px;color:#333;text-align:center;line-height:19px">自动缩放</div>
<div class="ab" style="left:431px;top:403px;width:48px;height:21px;background:#e1e1e1;border:1px solid #d0d0d0;font-size:10.5px;color:#333;text-align:center;line-height:19px">切换均值</div>
<div class="ab" style="left:481px;top:408px;width:9px;height:9px;border:1px solid #333;background:#fff"></div>
<div class="t" style="left:493px;top:407px;font-size:10.5px;color:#222">横游标</div>
<div class="ab" style="left:528px;top:408px;width:9px;height:9px;border:1px solid #333;background:#fff"></div>
<div class="t" style="left:540px;top:407px;font-size:10.5px;color:#222">纵游标</div>
<div class="ab" style="left:577px;top:408px;width:9px;height:9px;border:1px solid #333;background:#fff"></div>
<svg class="ab" style="left:578px;top:409px" width="8" height="8"><path d="M1 4L3.2 6.3L7 1.5" fill="none" stroke="#333" stroke-width="1.1"/></svg>
<div class="t" style="left:589px;top:407px;font-size:10.5px;color:#222">图例</div>
<div class="ab" style="left:178px;top:427px;width:549px;height:245px;background:#fff"></div>
<svg class="ab" style="left:178px;top:427px" width="549" height="245" viewBox="178 427 549 245">
<path d="M226 455H718M226 488H718M226 521H718M226 554H718M226 587H718M226 620.5H718M301.5 436V632M389.5 436V632M477.7 436V632M565.4 436V632M654 436V632" stroke="#ececec" stroke-width="1"/>
<path d="M229.0 485.4L232.4 482.8L235.5 558.8L238.0 545.9L241.9 512.4L244.5 504.7L247.8 515.0L250.9 544.6L253.5 538.2L256.6 512.4L262.5 615.4L268.9 464.8L271.5 520.1L274.6 542.0L279.2 534.3L282.3 481.5L285.7 526.6L288.2 498.2L290.8 521.4L294.2 520.1L297.3 493.1L302.9 557.5L308.8 512.4L311.4 556.2L315.8 520.1L324.3 480.2L327.6 533.0L330.7 512.4L333.3 520.1L336.7 486.7L339.0 495.7L343.1 495.7L347.5 531.7L350.1 526.6L352.6 535.6L355.2 527.9L359.1 540.7L362.4 521.4L365.5 540.7L368.9 526.6L371.9 536.9L374.5 520.1L377.6 526.6L381.0 526.6L382.8 548.5L385.3 504.7L388.7 547.2L391.8 498.2L395.1 522.7L397.7 529.2L398.1 529.2L399.6 525.3L402.2 538.2L405.3 525.3L407.9 521.4L411.0 504.7L413.5 547.2L416.9 518.8L422.8 562.6L425.9 508.5L428.0 536.9L431.1 507.3L434.9 578.1L437.5 520.1L440.8 520.1L442.6 549.8L445.7 498.2L449.1 531.7L452.9 540.7L455.5 543.3L458.1 451.9L461.2 515.0L466.6 475.1L470.2 558.8L473.5 524.0L477.4 520.1L480.0 521.4L483.1 543.3L485.7 527.9L489.3 585.8L492.3 530.4L495.4 540.7L499.3 542.0L502.6 547.2L505.7 521.4L508.3 533.0L511.4 481.5L517.3 521.4L521.2 494.4L523.8 506.0L528.9 478.9L532.8 497.0L536.6 504.7L543.1 548.5L546.4 498.2L549.5 547.2L553.1 478.9L555.7 522.7L558.8 494.4L561.9 563.9L565.5 484.1L568.1 529.2L571.2 476.4L574.2 543.3L578.0 513.7L581.1 524.0L587.8 509.8L591.4 538.2L594.8 516.3L600.7 588.4L603.8 498.2L606.9 543.3L610.2 502.1L614.1 543.3L628.2 535.6L634.7 512.4L639.8 468.1L646.3 526.6L659.9 493.1L663.0 560.1L672.8 551.0L676.4 507.3L681.0 512.4L683.6 578.1L687.5 553.6L691.3 556.2L695.2 543.3L698.6 517.6L702.9 503.4L706.3 547.2L708.9 504.7L714.5 539.5L718.4 518.8" fill="none" stroke="#ad70d6" stroke-width="1.25" stroke-linejoin="round"/>
<path d="M226.5 436V632.5H718.5V436H226.5" fill="none" stroke="#6a6a6a" stroke-width="1.3"/>
<path d="M226 627.1H231M226 620.5H233M226 613.9H231M226 607.3H231M226 600.6H231M226 594.0H231M226 587.4H233M226 580.8H231M226 574.2H231M226 567.5H231M226 560.9H231M226 554.3H233M226 547.7H231M226 541.1H231M226 534.4H231M226 527.8H231M226 521.2H233M226 514.6H231M226 508.0H231M226 501.3H231M226 494.7H231M226 488.1H233M226 481.5H231M226 474.9H231M226 468.2H231M226 461.6H231M226 455.0H233M226 448.4H231M226 441.8H231M230.9 632V627M248.6 632V627M266.2 632V627M283.9 632V627M301.5 632V624M319.1 632V627M336.8 632V627M354.4 632V627M372.1 632V627M389.7 632V624M407.3 632V627M425.0 632V627M442.6 632V627M460.3 632V627M477.9 632V624M495.5 632V627M513.2 632V627M530.8 632V627M548.5 632V627M566.1 632V624M583.7 632V627M601.4 632V627M619.0 632V627M636.7 632V627M654.3 632V624M671.9 632V627M689.6 632V627M707.2 632V627" stroke="#555" stroke-width="1.2"/>
<text x="222" y="458" font-size="7.5" text-anchor="end" fill="#444">5625</text>
<text x="222" y="491" font-size="7.5" text-anchor="end" fill="#444">5600</text>
<text x="222" y="524" font-size="7.5" text-anchor="end" fill="#444">5575</text>
<text x="222" y="557" font-size="7.5" text-anchor="end" fill="#444">5550</text>
<text x="222" y="590" font-size="7.5" text-anchor="end" fill="#444">5525</text>
<text x="222" y="623.5" font-size="7.5" text-anchor="end" fill="#444">5500</text>
<text transform="translate(299.5 640) rotate(8)" font-size="8" fill="#555">11:25:20</text>
<text transform="translate(387.5 640) rotate(8)" font-size="8" fill="#555">11:25:25</text>
<text transform="translate(475.7 640) rotate(8)" font-size="8" fill="#555">11:25:30</text>
<text transform="translate(563.4 640) rotate(8)" font-size="8" fill="#555">11:25:35</text>
<text transform="translate(652 640) rotate(8)" font-size="8" fill="#555">11:25:40</text>
<text transform="translate(186 532) rotate(90)" font-size="8" fill="#333" text-anchor="middle">值</text>
<text x="472" y="663" font-size="9" fill="#333" text-anchor="middle">时间</text>
</svg>
<div class="ab" style="left:729px;top:427.0px;width:88px;height:57px;background:#fcfcfc;border-bottom:1px solid #ececec;border-left:1px solid #f0f0f0"></div>
<div class="ab" style="left:790px;top:435.0px;width:26px;height:1px;background:#ececec"></div>
<div class="t" style="left:736px;top:429.0px;font-size:10.5px;color:#555">ROI功率</div>
<div class="ab" style="left:736px;top:449.0px;width:8px;height:8px;border:1px solid #666;background:#fff"></div>
<div class="ab" style="left:746px;top:448.5px;width:65px;height:8px;background:#ee1c1c"></div>
<div class="t" style="left:736px;top:463.0px;font-size:10.5px;letter-spacing:.3px;color:#555">0.209</div>
<div class="ab" style="left:729px;top:485.5px;width:88px;height:57px;background:#fcfcfc;border-bottom:1px solid #ececec;border-left:1px solid #f0f0f0"></div>
<div class="ab" style="left:790px;top:493.5px;width:26px;height:1px;background:#ececec"></div>
<div class="t" style="left:736px;top:487.5px;font-size:10.5px;color:#555">D4σ</div>
<div class="ab" style="left:736px;top:507.5px;width:8px;height:8px;border:1px solid #666;background:#fff"></div>
<div class="ab" style="left:746px;top:507.0px;width:65px;height:8px;background:#2ab81e"></div>
<div class="t" style="left:736px;top:521.5px;font-size:10.5px;letter-spacing:.3px;color:#555">5268.781</div>
<div class="ab" style="left:729px;top:544.0px;width:88px;height:57px;background:#fcfcfc;border-bottom:1px solid #ececec;border-left:1px solid #f0f0f0"></div>
<div class="ab" style="left:790px;top:552.0px;width:26px;height:1px;background:#ececec"></div>
<div class="t" style="left:736px;top:546.0px;font-size:10.5px;color:#555">D4σ椭圆率</div>
<div class="ab" style="left:736px;top:566.0px;width:8px;height:8px;border:1px solid #666;background:#fff"></div>
<div class="ab" style="left:746px;top:565.5px;width:65px;height:8px;background:#0a50c8"></div>
<div class="t" style="left:736px;top:580.0px;font-size:10.5px;letter-spacing:.3px;color:#555">0.823</div>
<div class="ab" style="left:729px;top:602.5px;width:88px;height:57px;background:#fcfcfc;border-bottom:1px solid #ececec;border-left:1px solid #f0f0f0"></div>
<div class="ab" style="left:790px;top:610.5px;width:26px;height:1px;background:#ececec"></div>
<div class="t" style="left:736px;top:604.5px;font-size:10.5px;color:#555">Dpk</div>
<div class="ab" style="left:736px;top:624.5px;width:8px;height:8px;border:1px solid #666;background:#fff"></div>
<svg class="ab" style="left:737px;top:625.5px" width="7" height="7"><path d="M.8 3.5L2.8 5.5L6.3 1" fill="none" stroke="#444" stroke-width="1"/></svg>
<div class="ab" style="left:746px;top:624.0px;width:65px;height:8px;background:#6a10a8"></div>
<div class="t" style="left:736px;top:638.5px;font-size:10.5px;letter-spacing:.3px;color:#555">5566.156</div>
<div class="ab" style="left:819px;top:111px;width:541px;height:274px;background:#f0f0f0"></div>
<div class="ab" style="left:819px;top:111px;width:1px;height:274px;background:#d8d8d8"></div>
<div class="t" style="left:826px;top:113px;font-size:10px;color:#333">光斑计算</div>
<div class="t" style="left:827px;top:137px;font-size:10.5px;color:#333">光斑序号</div>
<div class="ab" style="left:873px;top:133px;width:64px;height:20px;background:#e5e5e5;border:1px solid #d0d0d0;font-size:10.5px;color:#222;padding-left:3px;line-height:18px">0</div>
<svg class="ab" style="left:927px;top:141px" width="7" height="5"><path d="M.5 .5L3.5 3.5L6.5 .5" fill="none" stroke="#777" stroke-width="1"/></svg>
<div class="ab" style="left:941px;top:134px;width:51px;height:19px;background:#e1e1e1;border:1px solid #d0d0d0;font-size:10.5px;color:#222;text-align:center;line-height:17px">清除数据</div>
<div class="ab" style="left:997px;top:134px;width:53px;height:19px;background:#cde5f7;border:1px solid #86b6e2;font-size:10.5px;color:#222;text-align:center;line-height:17px">启用计算</div>
<div class="ab" style="left:1054px;top:134px;width:52px;height:19px;background:#e1e1e1;border:1px solid #d0d0d0;font-size:10.5px;color:#222;text-align:center;line-height:17px">断点采集</div>
<div class="t" style="left:827px;top:162px;font-size:10.5px;color:#333">统计方式</div>
<div class="ab" style="left:873px;top:158px;width:92px;height:21px;background:#e5e5e5;border:1px solid #d0d0d0;font-size:10.5px;color:#222;padding-left:3px;line-height:19px">统计数量</div>
<svg class="ab" style="left:956px;top:166px" width="7" height="5"><path d="M.5 .5L3.5 3.5L6.5 .5" fill="none" stroke="#777" stroke-width="1"/></svg>
<div class="ab" style="left:969px;top:158px;width:81px;height:21px;background:#fff;border:1px solid #c8c8c8;font-size:10.5px;color:#222;padding-left:3px;line-height:19px">10000</div>
<div class="ab" style="left:1037px;top:159px;width:12px;height:19px;background:#f4f4f4;border-left:1px solid #dcdcdc"></div>
<svg class="ab" style="left:1040px;top:162px" width="6" height="13"><path d="M0 4L3 1L6 4Z M0 9L3 12L6 9Z" fill="#444"/></svg>
<div class="ab" style="left:829px;top:182px;width:530px;height:199px;background:#fff;border-top:1px solid #d8d8d8"></div>
<div class="t" style="left:831px;top:188px;font-size:10.5px;font-weight:bold;color:#333">名称</div>
<div class="t" style="left:928px;top:188px;font-size:10.5px;font-weight:bold;color:#333">单位</div>
<div class="t" style="left:967px;top:188px;font-size:10.5px;font-weight:bold;color:#333">值</div>
<div class="t" style="left:1032px;top:188px;font-size:10.5px;font-weight:bold;color:#333">均值</div>
<div class="t" style="left:1097px;top:188px;font-size:10.5px;font-weight:bold;color:#333">标准差</div>
<div class="t" style="left:1163px;top:188px;font-size:10.5px;font-weight:bold;color:#333">最大值</div>
<div class="t" style="left:1228px;top:188px;font-size:10.5px;font-weight:bold;color:#333">最小值</div>
<div class="t" style="left:1294px;top:188px;font-size:10.5px;font-weight:bold;color:#333">统计数量</div>
<svg class="ab" style="left:832px;top:212px" width="7" height="5"><path d="M.5 .5L3.5 3.5L6.5 .5" fill="none" stroke="#555" stroke-width="1.1"/></svg>
<div class="t" style="left:843px;top:208px;font-size:10.5px;color:#333">功率/能量</div>
<svg class="ab" style="left:918px;top:216px" width="7" height="4"><path d="M0 0H7L3.5 4Z" fill="#111"/></svg>
<div class="ab" style="left:855px;top:223px;width:501px;height:18px;background:#dadada"></div>
<div class="t" style="left:856px;top:226px;font-size:11px;letter-spacing:.35px;color:#222">全图总幅值</div>
<div class="t" style="left:928px;top:226px;font-size:11px;letter-spacing:.35px;color:#222"></div>
<div class="t" style="left:967px;top:226px;font-size:11px;letter-spacing:.35px;color:#222">2.408e+08</div>
<div class="t" style="left:1032px;top:226px;font-size:11px;letter-spacing:.35px;color:#222">2.407e+08</div>
<div class="t" style="left:1097px;top:226px;font-size:11px;letter-spacing:.35px;color:#222">3.565e+05</div>
<div class="t" style="left:1163px;top:226px;font-size:11px;letter-spacing:.35px;color:#222">2.417e+08</div>
<div class="t" style="left:1228px;top:226px;font-size:11px;letter-spacing:.35px;color:#222">2.399e+08</div>
<div class="t" style="left:1294px;top:226px;font-size:11px;letter-spacing:.35px;color:#222">151</div>
<div class="ab" style="left:855px;top:241px;width:501px;height:18px;background:#ffffff"></div>
<div class="t" style="left:856px;top:244px;font-size:11px;letter-spacing:.35px;color:#222">全图功率</div>
<div class="t" style="left:928px;top:244px;font-size:11px;letter-spacing:.35px;color:#222">W</div>
<div class="t" style="left:967px;top:244px;font-size:11px;letter-spacing:.35px;color:#222">1.000</div>
<div class="t" style="left:1032px;top:244px;font-size:11px;letter-spacing:.35px;color:#222">1.000</div>
<div class="t" style="left:1097px;top:244px;font-size:11px;letter-spacing:.35px;color:#222">0.001</div>
<div class="t" style="left:1163px;top:244px;font-size:11px;letter-spacing:.35px;color:#222">1.004</div>
<div class="t" style="left:1228px;top:244px;font-size:11px;letter-spacing:.35px;color:#222">0.996</div>
<div class="t" style="left:1294px;top:244px;font-size:11px;letter-spacing:.35px;color:#222">151</div>
<div class="ab" style="left:855px;top:259px;width:501px;height:18px;background:#dadada"></div>
<div class="t" style="left:856px;top:262px;font-size:11px;letter-spacing:.35px;color:#222">光斑功率</div>
<div class="t" style="left:928px;top:262px;font-size:11px;letter-spacing:.35px;color:#222">W</div>
<div class="t" style="left:967px;top:262px;font-size:11px;letter-spacing:.35px;color:#222">0.961</div>
<div class="t" style="left:1032px;top:262px;font-size:11px;letter-spacing:.35px;color:#222">0.960</div>
<div class="t" style="left:1097px;top:262px;font-size:11px;letter-spacing:.35px;color:#222">0.001</div>
<div class="t" style="left:1163px;top:262px;font-size:11px;letter-spacing:.35px;color:#222">0.964</div>
<div class="t" style="left:1228px;top:262px;font-size:11px;letter-spacing:.35px;color:#222">0.957</div>
<div class="t" style="left:1294px;top:262px;font-size:11px;letter-spacing:.35px;color:#222">151</div>
<div class="ab" style="left:855px;top:277px;width:501px;height:18px;background:#ffffff"></div>
<div class="t" style="left:856px;top:280px;font-size:11px;letter-spacing:.35px;color:#222">ROI总幅值</div>
<div class="t" style="left:928px;top:280px;font-size:11px;letter-spacing:.35px;color:#222"></div>
<div class="t" style="left:967px;top:280px;font-size:11px;letter-spacing:.35px;color:#222">5.036e+07</div>
<div class="t" style="left:1032px;top:280px;font-size:11px;letter-spacing:.35px;color:#222">5.035e+07</div>
<div class="t" style="left:1097px;top:280px;font-size:11px;letter-spacing:.35px;color:#222">7.528e+04</div>
<div class="t" style="left:1163px;top:280px;font-size:11px;letter-spacing:.35px;color:#222">5.054e+07</div>
<div class="t" style="left:1228px;top:280px;font-size:11px;letter-spacing:.35px;color:#222">5.017e+07</div>
<div class="t" style="left:1294px;top:280px;font-size:11px;letter-spacing:.35px;color:#222">151</div>
<div class="ab" style="left:855px;top:295px;width:501px;height:18px;background:#99c9ef"></div>
<div class="t" style="left:856px;top:298px;font-size:11px;letter-spacing:.35px;color:#222">ROI功率</div>
<div class="t" style="left:928px;top:298px;font-size:11px;letter-spacing:.35px;color:#222">W</div>
<div class="t" style="left:967px;top:298px;font-size:11px;letter-spacing:.35px;color:#222">0.209</div>
<div class="t" style="left:1032px;top:298px;font-size:11px;letter-spacing:.35px;color:#222">0.209</div>
<div class="t" style="left:1097px;top:298px;font-size:11px;letter-spacing:.35px;color:#222">0.000</div>
<div class="t" style="left:1163px;top:298px;font-size:11px;letter-spacing:.35px;color:#222">0.210</div>
<div class="t" style="left:1228px;top:298px;font-size:11px;letter-spacing:.35px;color:#222">0.208</div>
<div class="t" style="left:1294px;top:298px;font-size:11px;letter-spacing:.35px;color:#222">151</div>
<svg class="ab" style="left:832px;top:320px" width="7" height="5"><path d="M.5 .5L3.5 3.5L6.5 .5" fill="none" stroke="#555" stroke-width="1.1"/></svg>
<div class="t" style="left:843px;top:316px;font-size:10.5px;color:#333">空间</div>
<svg class="ab" style="left:918px;top:324px" width="7" height="4"><path d="M0 0H7L3.5 4Z" fill="#111"/></svg>
<div class="ab" style="left:855px;top:331px;width:501px;height:18px;background:#dadada"></div>
<div class="t" style="left:856px;top:334px;font-size:11px;letter-spacing:.35px;color:#222">质心X轴坐标</div>
<div class="t" style="left:928px;top:334px;font-size:11px;letter-spacing:.35px;color:#222">μm</div>
<div class="t" style="left:967px;top:334px;font-size:11px;letter-spacing:.35px;color:#222">3632.645</div>
<div class="t" style="left:1032px;top:334px;font-size:11px;letter-spacing:.35px;color:#222">3632.494</div>
<div class="t" style="left:1097px;top:334px;font-size:11px;letter-spacing:.35px;color:#222">0.163</div>
<div class="t" style="left:1163px;top:334px;font-size:11px;letter-spacing:.35px;color:#222">3633.240</div>
<div class="t" style="left:1228px;top:334px;font-size:11px;letter-spacing:.35px;color:#222">3632.228</div>
<div class="t" style="left:1294px;top:334px;font-size:11px;letter-spacing:.35px;color:#222">151</div>
<div class="ab" style="left:855px;top:349px;width:501px;height:18px;background:#ffffff"></div>
<div class="t" style="left:856px;top:352px;font-size:11px;letter-spacing:.35px;color:#222">质心Y轴坐标</div>
<div class="t" style="left:928px;top:352px;font-size:11px;letter-spacing:.35px;color:#222">μm</div>
<div class="t" style="left:967px;top:352px;font-size:11px;letter-spacing:.35px;color:#222">3291.632</div>
<div class="t" style="left:1032px;top:352px;font-size:11px;letter-spacing:.35px;color:#222">3291.283</div>
<div class="t" style="left:1097px;top:352px;font-size:11px;letter-spacing:.35px;color:#222">0.347</div>
<div class="t" style="left:1163px;top:352px;font-size:11px;letter-spacing:.35px;color:#222">3291.769</div>
<div class="t" style="left:1228px;top:352px;font-size:11px;letter-spacing:.35px;color:#222">3289.444</div>
<div class="t" style="left:1294px;top:352px;font-size:11px;letter-spacing:.35px;color:#222">151</div>
<div class="ab" style="left:855px;top:367px;width:501px;height:18px;background:#dadada"></div>
<div class="t" style="left:856px;top:370px;font-size:11px;letter-spacing:.35px;color:#222">D4σX</div>
<div class="t" style="left:928px;top:370px;font-size:11px;letter-spacing:.35px;color:#222">μm</div>
<div class="t" style="left:967px;top:370px;font-size:11px;letter-spacing:.35px;color:#222">5754.711</div>
<div class="t" style="left:1032px;top:370px;font-size:11px;letter-spacing:.35px;color:#222">5754.176</div>
<div class="t" style="left:1097px;top:370px;font-size:11px;letter-spacing:.35px;color:#222">0.401</div>
<div class="t" style="left:1163px;top:370px;font-size:11px;letter-spacing:.35px;color:#222">5755.107</div>
<div class="t" style="left:1228px;top:370px;font-size:11px;letter-spacing:.35px;color:#222">5753.310</div>
<div class="t" style="left:1294px;top:370px;font-size:11px;letter-spacing:.35px;color:#222">151</div>
<div class="ab" style="left:829px;top:380px;width:530px;height:5px;background:#f0f0f0;border-top:1px solid #c8c8c8"></div>
<div class="ab" style="left:818px;top:387px;width:1px;height:285px;background:#b0b0b0"></div><div class="ab" style="left:819px;top:387px;width:3px;height:285px;background:#fafafa"></div>
<div class="ab" style="left:819px;top:385px;width:541px;height:1px;background:#6e6e6e"></div><div class="ab" style="left:819px;top:388px;width:541px;height:1px;background:#7a7a7a"></div>
<div class="ab" style="left:819px;top:389px;width:541px;height:283px;background:#f0f0f0"></div><div class="ab" style="left:819px;top:386px;width:541px;height:2px;background:#f4f4f4"></div>
<div class="t" style="left:826px;top:392px;font-size:10px;color:#333">增强显示</div>
<div class="ab" style="left:834px;top:423px;width:8px;height:8px;border:1px solid #444;background:#fff"></div>
<div class="t" style="left:845px;top:421px;font-size:10px;color:#222">当前值</div>
<div class="ab" style="left:882px;top:423px;width:8px;height:8px;border:1px solid #444;background:#fff"></div>
<svg class="ab" style="left:883px;top:424px" width="7" height="7"><path d="M.8 3.5L2.8 5.5L6.3 1" fill="none" stroke="#444" stroke-width="1"/></svg>
<div class="t" style="left:893px;top:421px;font-size:10px;color:#222">平均值</div>
<div class="ab" style="left:930px;top:423px;width:8px;height:8px;border:1px solid #444;background:#fff"></div>
<svg class="ab" style="left:931px;top:424px" width="7" height="7"><path d="M.8 3.5L2.8 5.5L6.3 1" fill="none" stroke="#444" stroke-width="1"/></svg>
<div class="t" style="left:941px;top:421px;font-size:10px;color:#222">标准差</div>
<div class="ab" style="left:980px;top:426px;width:220px;height:2px;background:#dcdcdc"></div>
<div class="ab" style="left:1101px;top:421px;width:6px;height:12px;background:#1e7ad8"></div>
<div class="ab" style="left:834px;top:440px;width:525px;height:221px;background:#fff;border:1px solid #cfcfcf"></div>
<div class="t" style="left:950px;top:452px;font-size:19px;color:#222;display:flex;align-items:baseline"><span>ROI功率 :</span><span style="font-size:30px;color:#2a5ee6;margin-left:8px;letter-spacing:1px;word-spacing:1.0px">/ 0.209 / 0.000 W</span></div>
<div class="t" style="left:929px;top:497.5px;font-size:19px;color:#222;display:flex;align-items:baseline"><span>D4σ :</span><span style="font-size:30px;color:#2a5ee6;margin-left:10px;letter-spacing:1px;word-spacing:4.0px">/ 5268.818 / 0.261 μm</span></div>
<div class="t" style="left:956px;top:541.5px;font-size:19px;color:#222;display:flex;align-items:baseline"><span>D4σ椭圆率 :</span><span style="font-size:30px;color:#2a5ee6;margin-left:9px;letter-spacing:1px;word-spacing:4.0px">/ 0.823 / 0.000</span></div>
<div class="t" style="left:925px;top:587.5px;font-size:19px;color:#222;display:flex;align-items:baseline"><span>Dpk :</span><span style="font-size:30px;color:#2a5ee6;margin-left:10px;letter-spacing:1px;word-spacing:4.5px">/ 5573.575 / 19.456 μm</span></div>
<div class="ab" style="left:178px;top:672px;width:1182px;height:1px;background:#9a9a9a"></div>
<div class="ab" style="left:178px;top:673px;width:1182px;height:17px;background:#f0f0f0"></div>
<div class="t" style="left:180px;top:678px;font-size:10px;letter-spacing:.45px;color:#333">2048x2048</div>
<div class="t" style="left:246px;top:678px;font-size:10px;letter-spacing:.3px;color:#333">X:0.00um,Y:0.00um I:4; 1.57%</div>
<div class="t" style="left:1305px;top:678px;font-size:10px;letter-spacing:.4px;color:#333">fps:6.2</div>
<div class="ab" style="left:1344px;top:676px;width:12px;height:12px;background:#d8d8d8"></div>
<div class="ab" style="left:172px;top:-1px;width:1194px;height:117px;border:3px solid #ed7d31"></div>
<div class="ab" style="left:172px;top:123px;width:635px;height:545px;border:3px solid #36b536"></div>
<div class="ab" style="left:823px;top:123px;width:542px;height:551px;border:3px solid #e01b1b"></div>
<svg class="ab" style="left:0;top:0" width="1545" height="815"><path d="M180 243H102.5V290 M1367 46.5H1406.5V73 M1366 435.5H1406.5V470" fill="none" stroke="#5b9bd5" stroke-width="1.2"/><path d="M96 288L109 288L102.5 301Z M1400 72L1413 72L1406.5 85Z M1400 469L1413 469L1406.5 482Z" fill="#5b9bd5"/></svg>
<div class="ab" style="left:37px;top:330px;font-size:20.5px;line-height:25.3px;color:#222;white-space:nowrap">测试光斑图像<br>显示区</div>
<div class="ab" style="left:1380px;top:93px;font-size:20.5px;line-height:25.3px;color:#222;white-space:nowrap">主菜单功能设<br>置区：用于显<br>示、调整参数、<br>管理员权限等<br>功能</div>
<div class="ab" style="left:1387px;top:491px;font-size:20.5px;line-height:25.3px;color:#222;white-space:nowrap">测试数据显示<br>区：光斑功率、<br>光斑测试数据<br>（坐标，直径，<br>椭圆度等）光<br>斑平顶均匀性<br>发散角等.</div>
<div class="ab" style="left:171px;top:739px;font-size:24px;line-height:31px;color:#111;white-space:nowrap;letter-spacing:1px"><b>窗口特点</b>：所有的显示窗口可自由组合并保存配置文件，方便调用，也可使用系统默认的配置管理功能，根据<br>需求一键布置窗口。灵活多变，满足个性化习惯。</div>
<div class="t" style="left:773px;top:744px;font-size:48px;letter-spacing:2px;color:#000">sdccqzjx.com</div>
</body></html>
